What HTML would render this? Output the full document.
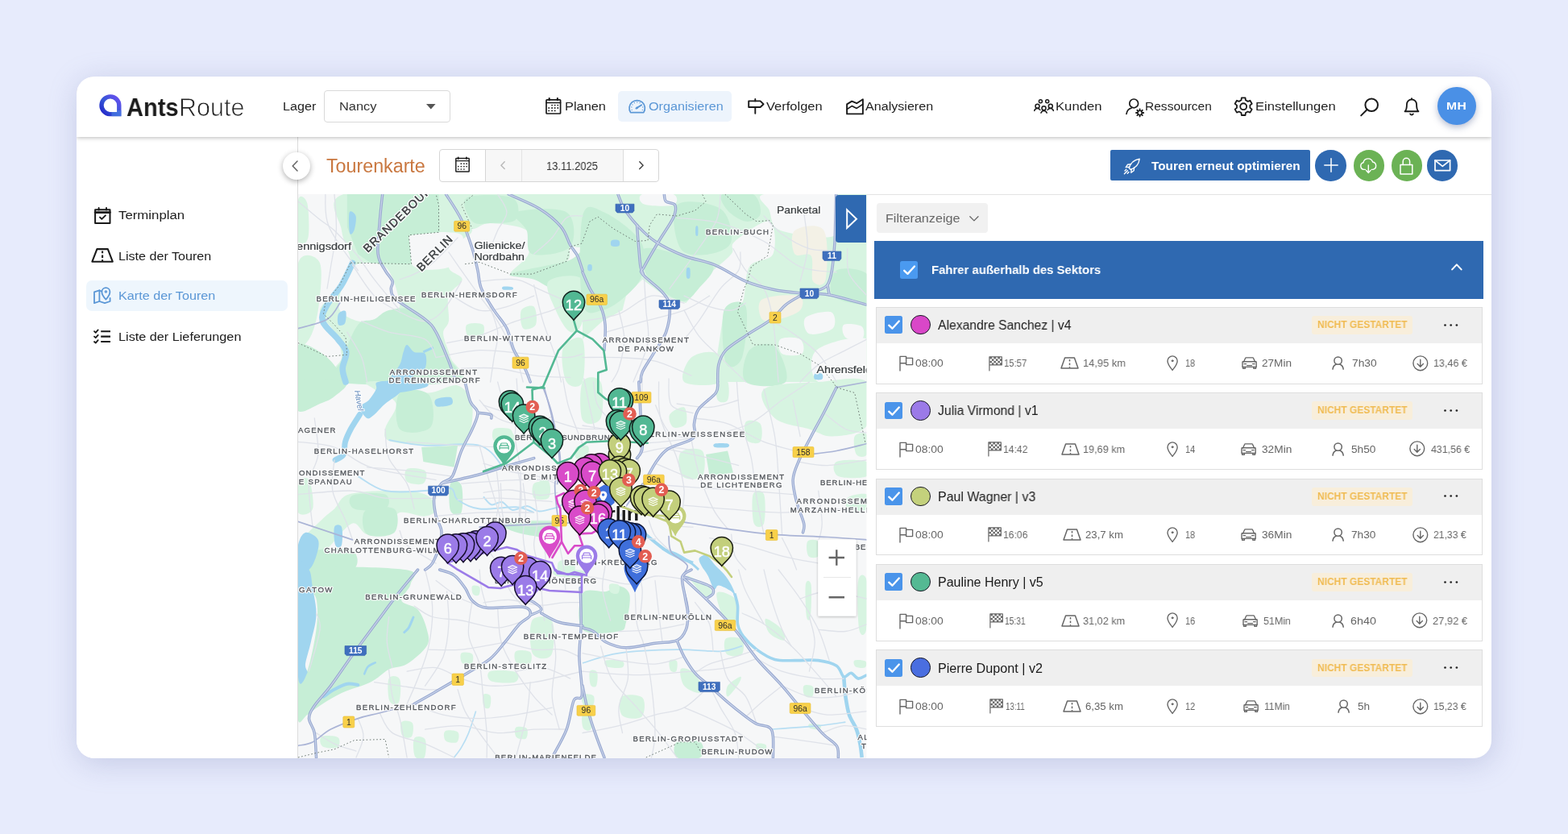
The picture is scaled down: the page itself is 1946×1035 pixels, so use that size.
<!DOCTYPE html>
<html lang="de">
<head>
<meta charset="utf-8">
<title>AntsRoute – Tourenkarte</title>
<style>
*{box-sizing:border-box;margin:0;padding:0}
html,body{width:1946px;height:1035px;overflow:hidden}
body{background:#e7ebfc;font-family:"Liberation Sans",sans-serif;color:#222;position:relative}
.abs{position:absolute}
.card{position:absolute;left:95px;top:95px;width:1756px;height:846px;background:#fff;border-radius:22px;box-shadow:2px 6px 36px rgba(125,135,185,.33);overflow:hidden}
/* everything inside card uses page coords shifted by -95 */
.in{position:absolute;left:-95px;top:-95px;width:1946px;height:1035px}
.hdr{position:absolute;left:95px;top:95px;width:1756px;height:75px;background:#fff;box-shadow:0 1px 5px rgba(0,0,0,.28);z-index:5}
.t{position:absolute;white-space:nowrap;line-height:1;will-change:transform}
svg{position:absolute;overflow:visible}
.side{position:absolute;left:95px;top:170px;width:275px;height:771px;border-right:1px solid #dcdcdc;background:#fff}
.circ{position:absolute;border-radius:50%}
</style>
</head>
<body>
<div class="card"><div class="in">

<!-- HEADER -->
<div class="hdr"></div>
<div style="position:absolute;left:0;top:0;width:1946px;height:1035px;z-index:6" id="hdrc">
<svg style="left:122px;top:116.6px" width="28.6" height="27.4" viewBox="0 0 28.6 27.4" fill="none"><defs><linearGradient id="lg1" x1="0" y1="1" x2="1" y2="0"><stop offset="0" stop-color="#2424c8"/><stop offset=".45" stop-color="#3457d6"/><stop offset="1" stop-color="#6b4ff0"/></linearGradient></defs><path d="M25.8 24.6 L14 24.6 A10.9 10.9 0 1 1 25.8 13.7 Z" stroke="url(#lg1)" stroke-width="5.4" stroke-linejoin="miter"/><path d="M16.5 24.6 L25.8 24.6 L25.8 20" stroke="#4f86e6" stroke-width="5.4" stroke-linejoin="miter" opacity=".55"/></svg><span class="t" id="t0" style="left:157.4px;top:117.9px;font-size:30.5px;font-weight:700;color:#1b1b1b;letter-spacing:0.00px;transform:scaleX(0.9529);transform-origin:0 50%;">Ants</span><span class="t" id="t1" style="left:222.2px;top:117.9px;font-size:30.5px;font-weight:400;color:#222;letter-spacing:0.00px;transform:scaleX(0.9963);transform-origin:0 50%;-webkit-text-stroke:.75px #fff;">Route</span><span class="t" id="t2" style="left:350.5px;top:124.2px;font-size:15.5px;font-weight:400;color:#1f1f1f;letter-spacing:0.00px;transform:scaleX(1.0425);transform-origin:0 50%;">Lager</span><div class="abs" style="left:402.4px;top:111.8px;width:157px;height:40px;border:1px solid #d9d9d9;border-radius:4px;background:#fff"></div><span class="t" id="t3" style="left:420.8px;top:124.2px;font-size:15.5px;font-weight:400;color:#333;letter-spacing:0.00px;transform:scaleX(1.0591);transform-origin:0 50%;">Nancy</span><svg style="left:528.7px;top:129.4px" width="11.6" height="6.4" viewBox="0 0 11.6 6.4"><path d="M0 0H11.6L5.8 6.4Z" fill="#555"/></svg><svg style="left:676.6px;top:121.2px" width="19.6" height="21.0" viewBox="0 0 19.6 21" fill="none" stroke="#1a1a1a" stroke-width="1.7" stroke-linecap="round" stroke-linejoin="round" ><rect x="1" y="2.8" width="17.6" height="17.2" rx=".8"/><path d="M1 6.4H18.6" stroke-width="1.5"/><path d="M4.7 1.2V3.2M14.9 1.2V3.2" stroke-width="2.2"/><g stroke="none" fill="#1a1a1a"><circle cx="8.1" cy="9.6" r=".95"/><circle cx="11.7" cy="9.6" r=".95"/><circle cx="15.3" cy="9.6" r=".95"/><circle cx="4.2" cy="13.0" r=".95"/><circle cx="8.1" cy="13.0" r=".95"/><circle cx="11.7" cy="13.0" r=".95"/><circle cx="15.3" cy="13.0" r=".95"/><circle cx="4.2" cy="16.4" r=".95"/><circle cx="8.1" cy="16.4" r=".95"/><circle cx="11.7" cy="16.4" r=".95"/></g></svg><span class="t" id="t4" style="left:700.8px;top:124.2px;font-size:15.5px;font-weight:400;color:#1f1f1f;letter-spacing:0.00px;transform:scaleX(1.0563);transform-origin:0 50%;">Planen</span><div class="abs" style="left:766.9px;top:113.2px;width:141px;height:37.4px;background:#edf4fc;border-radius:5px"></div><svg style="left:780.3px;top:123.3px" width="21.4" height="17.6" viewBox="0 0 21.4 17.6" fill="none" stroke="#5b97d6" stroke-width="1.7" stroke-linecap="round" stroke-linejoin="round" ><path d="M2.6 16.6 A9.7 9.7 0 1 1 18.8 16.6 Z"/><path d="M9.4 11.6 L16.2 7.2" stroke-width="1.9"/><circle cx="10.6" cy="10.9" r="1.3" fill="#5b97d6" stroke="none"/><path d="M4.1 13.3h.1M3.8 9.9h.1M4.9 7.0h.1M7.4 4.7h.1M10.7 3.9h.1M14.0 4.7h.1M17.6 9.9h.1M17.3 13.3h.1" stroke-width="1.25"/></svg><span class="t" id="t5" style="left:805.0px;top:124.2px;font-size:15.5px;font-weight:400;color:#5b97d6;letter-spacing:0.00px;transform:scaleX(1.0438);transform-origin:0 50%;">Organisieren</span><svg style="left:928.0px;top:121.8px" width="20.8" height="19.8" viewBox="0 0 20.8 19.8" fill="none" stroke="#1a1a1a" stroke-width="1.9" stroke-linecap="round" stroke-linejoin="round" ><path d="M1.2 3.4H15.6L19.6 7.2L15.6 11H1.2Z"/><path d="M9.3 .9V3.4M9.3 11V18.8"/></svg><span class="t" id="t6" style="left:951.2px;top:124.2px;font-size:15.5px;font-weight:400;color:#1f1f1f;letter-spacing:0.00px;transform:scaleX(1.0636);transform-origin:0 50%;">Verfolgen</span><svg style="left:1049.6px;top:121.8px" width="22.0" height="20.6" viewBox="0 0 22 20.6" fill="none" stroke="#1a1a1a" stroke-width="1.9" stroke-linecap="round" stroke-linejoin="round" ><path d="M1.1 7.4 L7.2 3.6 L13.2 6.2 L20.9 1.2 V19.4 H1.1 Z"/><path d="M1.1 13.6 L7.2 9.6 L13.2 12.4 L20.9 7.4" stroke-width="1.7"/></svg><span class="t" id="t7" style="left:1074.4px;top:124.2px;font-size:15.5px;font-weight:400;color:#1f1f1f;letter-spacing:0.00px;transform:scaleX(1.0383);transform-origin:0 50%;">Analysieren</span><svg style="left:1282.5px;top:122.2px" width="25.0" height="19.0" viewBox="0 0 25 19" fill="none" stroke="#1a1a1a" stroke-width="1.5" stroke-linecap="round" stroke-linejoin="round" ><circle cx="8.4" cy="3.8" r="2"/><circle cx="16.7" cy="3.8" r="2"/><circle cx="4.5" cy="9.7" r="2.5"/><circle cx="12.5" cy="12.3" r="2.5"/><circle cx="20.8" cy="9.7" r="2.5"/><path d="M.7 15.4C1.5 13.4 2.8 12.6 4.4 12.6S7.2 13.2 7.9 14.5M8.9 18.1C9.7 16.2 10.9 15.4 12.5 15.4S15.4 16.2 16.2 18.1M17.1 14.5C17.8 13.2 19 12.6 20.6 12.6S23.6 13.4 24.4 15.4"/></svg><span class="t" id="t8" style="left:1309.6px;top:124.2px;font-size:15.5px;font-weight:400;color:#1f1f1f;letter-spacing:0.00px;transform:scaleX(1.0755);transform-origin:0 50%;">Kunden</span><svg style="left:1396.7px;top:122.2px" width="24.0" height="24.2" viewBox="0 0 24 24.2" fill="none" stroke="#1a1a1a" stroke-width="1.7" stroke-linecap="round" stroke-linejoin="round" ><circle cx="10.2" cy="6.4" r="5.4"/><path d="M1 19.4C1.6 15.4 4.4 12.8 7.4 12"/><g stroke-width="1.4"><circle cx="17.6" cy="18" r="2.6"/><path d="M17.6 13.4v1.6M17.6 21v1.6M13 18h1.6M20.6 18h1.6M14.4 14.8l1.1 1.1M19.7 20.1l1.1 1.1M14.4 21.2l1.1-1.1M19.7 15.9l1.1-1.1" stroke-width="1.9"/></g></svg><span class="t" id="t9" style="left:1420.8px;top:124.2px;font-size:15.5px;font-weight:400;color:#1f1f1f;letter-spacing:0.00px;transform:scaleX(1.0024);transform-origin:0 50%;">Ressourcen</span><svg style="left:1531.4px;top:119.7px" width="24.4" height="24.4" viewBox="0 0 24 24" fill="none" stroke="#1a1a1a" stroke-width="1.8" stroke-linecap="round" stroke-linejoin="round" ><path d="M14.67 4.25L14.27 1.34L9.73 1.34L9.33 4.25L6.62 5.81L3.90 4.71L1.63 8.63L3.95 10.44L3.95 13.56L1.63 15.37L3.90 19.29L6.62 18.19L9.33 19.75L9.73 22.66L14.27 22.66L14.67 19.75L17.38 18.19L20.10 19.29L22.37 15.37L20.05 13.56L20.05 10.44L22.37 8.63L20.10 4.71L17.38 5.81Z"/><circle cx="12" cy="12" r="3.9"/></svg><span class="t" id="t10" style="left:1557.9px;top:124.2px;font-size:15.5px;font-weight:400;color:#1f1f1f;letter-spacing:0.00px;transform:scaleX(1.0710);transform-origin:0 50%;">Einstellungen</span><svg style="left:1688.0px;top:121.2px" width="23.4" height="23.4" viewBox="0 0 23.4 23.4" fill="none" stroke="#1a1a1a" stroke-width="2" stroke-linecap="round" stroke-linejoin="round" ><circle cx="14.2" cy="9.2" r="7.8"/><path d="M8.6 15 L1.2 22.4"/></svg><svg style="left:1741.0px;top:120.4px" width="22.0" height="25.4" viewBox="0 0 24 25" fill="none" stroke="#1a1a1a" stroke-width="2" stroke-linecap="round" stroke-linejoin="round" ><path d="M18.6 9A6.6 6.6 0 0 0 5.4 9c0 7.4-2.6 9.6-2.6 9.6h18.4s-2.6-2.2-2.6-9.6"/><path d="M12 .9V2.4"/><path d="M14 22a2.3 2.3 0 0 1-4 0"/></svg><div class="circ" style="left:1784.2px;top:107.6px;width:47.6px;height:47.6px;background:#4a90e6;box-shadow:0 3px 8px rgba(40,60,120,.35)"></div><span class="t" id="t11" style="left:1795.4px;top:124.8px;font-size:13.5px;font-weight:700;color:#fff;letter-spacing:0.36px;transform:scaleX(1.1600);transform-origin:0 50%;">MH</span>
</div>

<!-- SIDEBAR -->
<div class="side"></div>
<svg style="left:116.8px;top:256.8px" width="20.6" height="21.0" viewBox="0 0 20.6 21" fill="none" stroke="#1a1a1a" stroke-width="2" stroke-linecap="round" stroke-linejoin="round" ><rect x="1.1" y="3.2" width="18.4" height="16.7" /><path d="M1.1 6.6H19.5" stroke-width="2.6"/><path d="M5.6 1V3.4M15 1V3.4"/><path d="M7 12.6l2.3 2.3 4.6-4.6" stroke-width="1.9"/></svg><span class="t" id="t12" style="left:147.3px;top:259.2px;font-size:15.5px;font-weight:400;color:#1c1c1c;letter-spacing:0.00px;transform:scaleX(1.0842);transform-origin:0 50%;">Terminplan</span><svg style="left:113.0px;top:307.8px" width="28.2" height="17.8" viewBox="0 0 28.2 17.8" fill="none" stroke="#1a1a1a" stroke-width="2.1" stroke-linecap="round" stroke-linejoin="round" ><path d="M7.4 1.1H20.8L26.8 16.7H1.4Z"/><path d="M14.1 3.6V6.2M14.1 8.6V12M14.1 14.2V16.4" stroke-linecap="butt"/></svg><span class="t" id="t13" style="left:147.3px;top:309.6px;font-size:15.5px;font-weight:400;color:#1c1c1c;letter-spacing:0.00px;transform:scaleX(1.0387);transform-origin:0 50%;">Liste der Touren</span><div class="abs" style="left:107.3px;top:348.4px;width:249.6px;height:37.6px;background:#eef6fd;border-radius:7px"></div><svg style="left:116.2px;top:355.8px" width="21.8" height="21.2" viewBox="0 0 21.8 21.2" fill="none" stroke="#5b97d6" stroke-width="1.8" stroke-linecap="round" stroke-linejoin="round" ><path d="M9.6 5.4 L7.4 4.4 L1 6.4 V20.2 L7.4 18 L14 20.2 L20.6 18 V14"/><path d="M7.4 4.4V18"/><path d="M15.4 15.6C15.4 15.6 10.4 10.2 10.4 6.2A5 5 0 0 1 20.4 6.2C20.4 10.2 15.4 15.6 15.4 15.6Z"/><circle cx="15.4" cy="6" r="1.1" stroke-width="1.4"/></svg><span class="t" id="t14" style="left:147.3px;top:359.2px;font-size:15.5px;font-weight:400;color:#5b97d6;letter-spacing:0.00px;transform:scaleX(1.0443);transform-origin:0 50%;">Karte der Touren</span><svg style="left:116.2px;top:408.2px" width="22.0" height="19.0" viewBox="0 0 22 19" fill="none" stroke="#1a1a1a" stroke-width="2" stroke-linecap="round" stroke-linejoin="round" ><path d="M9.2 3.2H21M9.2 9.6H21M9.2 16H21" stroke-width="2.1" stroke-linecap="butt"/><path d="M1 3.2l1.7 1.6 3-3.4M1 9.6l1.7 1.6 3-3.4M1 16l1.7 1.6 3-3.4" stroke-width="1.8"/></svg><span class="t" id="t15" style="left:147.3px;top:409.6px;font-size:15.5px;font-weight:400;color:#1c1c1c;letter-spacing:0.00px;transform:scaleX(1.0466);transform-origin:0 50%;">Liste der Lieferungen</span>

<!-- TOOLBAR -->
<div class="abs" style="left:1075px;top:240.6px;width:776px;height:1px;background:#e3e3e3"></div><div class="circ" style="left:351px;top:189px;width:34px;height:34px;background:#fff;box-shadow:0 2px 7px rgba(0,0,0,.32);z-index:7"></div><svg style="z-index:8;left:362.4px;top:199.0px" width="8.0" height="14.0" viewBox="0 0 8 14" fill="none" stroke="#666" stroke-width="1.6" stroke-linecap="round" stroke-linejoin="round" style="z-index:8"><path d="M7 1L1.2 7L7 13"/></svg><span class="t" id="t16" style="left:404.9px;top:194.5px;font-size:23.0px;font-weight:400;color:#c9773f;letter-spacing:0.00px;transform:scaleX(1.0107);transform-origin:0 50%;">Tourenkarte</span><div class="abs" style="left:545.4px;top:185px;width:273px;height:40.6px;border:1px solid #d6d6d6;border-radius:4px;background:#fff;overflow:hidden"><div class="abs" style="left:55.8px;top:0;width:172px;height:40px;background:#f7f7f7;border-left:1px solid #d6d6d6;border-right:1px solid #dcdcdc"></div><div class="abs" style="left:101px;top:0;width:1px;height:40px;background:#e4e4e4"></div></div><svg style="left:565.0px;top:195.0px" width="18.0" height="19.0" viewBox="0 0 18 19" fill="none" stroke="#222" stroke-width="1.5" stroke-linecap="round" stroke-linejoin="round" ><rect x=".8" y="1.4" width="16.4" height="16.6" rx=".6"/><path d="M.8 4.7H17.2" stroke-width="1.3"/><path d="M3.7 .5V2M13.9 .5V2" stroke-width="1.9"/><g stroke="none" fill="#222"><circle cx="7.3" cy="8.2" r=".85"/><circle cx="10.9" cy="8.2" r=".85"/><circle cx="14.1" cy="8.2" r=".85"/><circle cx="3.8" cy="11.6" r=".85"/><circle cx="7.3" cy="11.6" r=".85"/><circle cx="10.9" cy="11.6" r=".85"/><circle cx="14.1" cy="11.6" r=".85"/><circle cx="3.8" cy="15.0" r=".85"/><circle cx="7.3" cy="15.0" r=".85"/><circle cx="10.9" cy="15.0" r=".85"/></g></svg><svg style="left:620.6px;top:200.4px" width="6.0" height="10.4" viewBox="0 0 6 10.4" fill="none" stroke="#b8b8b8" stroke-width="1.4" stroke-linecap="round" stroke-linejoin="round" ><path d="M5.2 .8L.9 5.2L5.2 9.6"/></svg><svg style="left:793.0px;top:200.4px" width="6.0" height="10.4" viewBox="0 0 6 10.4" fill="none" stroke="#444" stroke-width="1.5" stroke-linecap="round" stroke-linejoin="round" ><path d="M.8 .8L5.1 5.2L.8 9.6"/></svg><span class="t" id="t17" style="left:678.0px;top:198.6px;font-size:14.0px;font-weight:400;color:#333;letter-spacing:0.00px;transform:scaleX(0.9261);transform-origin:0 50%;">13.11.2025</span><div class="abs" style="left:1378.4px;top:186.4px;width:248px;height:38px;background:#2f69b1;border-radius:2px"></div><svg style="left:1394.0px;top:196.0px" width="21.4" height="21.0" viewBox="0 0 21.4 21" fill="none" stroke="#fff" stroke-width="1.4" stroke-linecap="round" stroke-linejoin="round" ><path d="M7.2 12.6C8.6 7.4 13 2.4 20.2 1.2C19.4 8.4 14.4 12.6 9.2 14.4Z"/><path d="M7.6 11.2L3.2 11.6L5.6 8.2L9.6 7.8M10.2 13.8L9.8 18.2L13.2 15.8L13.6 11.8"/><path d="M5.4 15.8L1.4 19.8M7 17.4L5.2 19.2M3.8 14.2L2 16"/></svg><span class="t" id="t18" style="left:1428.7px;top:197.7px;font-size:15.0px;font-weight:700;color:#fff;letter-spacing:0.00px;transform:scaleX(1.0221);transform-origin:0 50%;">Touren erneut optimieren</span><div class="circ" style="left:1632.4px;top:186.2px;width:38.4px;height:38.4px;background:#2f69b1"></div><div class="circ" style="left:1679.5px;top:186.2px;width:38.4px;height:38.4px;background:#6bb255"></div><div class="circ" style="left:1726.6px;top:186.2px;width:38.4px;height:38.4px;background:#6bb255"></div><div class="circ" style="left:1770.7px;top:186.2px;width:38.4px;height:38.4px;background:#2f69b1"></div><svg style="left:1642.6px;top:196.4px" width="18.0" height="18.0" viewBox="0 0 18 18" fill="none" stroke="#fff" stroke-width="1.5" stroke-linecap="round" stroke-linejoin="round" ><path d="M9 .8V17.2M.8 9H17.2"/></svg><svg style="left:1687.4px;top:196.0px" width="22.6" height="19.4" viewBox="0 0 22.6 19.4" fill="none" stroke="#fff" stroke-width="1.4" stroke-linecap="round" stroke-linejoin="round" ><path d="M7.4 14.4H5.6A4.4 4.4 0 0 1 5 5.8A6 6 0 0 1 16.6 5A4.8 4.8 0 0 1 17 14.4H15.2"/><path d="M11.3 9V18M8.6 15.6L11.3 18.4L14 15.6"/></svg><svg style="left:1737.4px;top:194.6px" width="16.8" height="22.0" viewBox="0 0 16.8 22" fill="none" stroke="#fff" stroke-width="1.5" stroke-linecap="round" stroke-linejoin="round" ><rect x="1" y="9.4" width="14.8" height="11.6"/><path d="M4.2 9.4V5.4A4.2 4.2 0 0 1 12.6 5.4V9.4"/></svg><svg style="left:1779.6px;top:198.4px" width="20.6" height="14.6" viewBox="0 0 20.6 14.6" fill="none" stroke="#fff" stroke-width="1.7" stroke-linecap="round" stroke-linejoin="round" ><rect x="1" y="1" width="18.6" height="12.6"/><path d="M1 1L10.3 8.4L19.6 1"/></svg>

<!-- MAP -->
<svg style="left:370px;top:241px;will-change:transform" width="705.4" height="700" viewBox="370 241 705.4 700" font-family="Liberation Sans, sans-serif"><defs><filter id="zsh" x="-20%" y="-10%" width="140%" height="125%"><feDropShadow dx="0" dy="1" stdDeviation="1.6" flood-color="#000" flood-opacity=".28"/></filter><clipPath id="mclip"><rect x="370" y="241" width="705.4" height="700"/></clipPath></defs><g clip-path="url(#mclip)"><rect x="370" y="241" width="706" height="700" fill="#f6f7f8"/><path d="M426.3 241.0C451.0 233.5 546.0 233.9 572.6 241.0C599.3 248.1 586.1 274.0 586.1 283.8C586.1 293.5 577.5 291.7 572.6 299.5C567.7 307.4 556.7 323.2 556.9 331.0C557.0 338.9 573.7 340.8 573.7 346.8C573.7 352.8 559.7 358.4 556.9 367.1C554.0 375.7 558.0 390.7 556.9 398.6C555.7 406.5 549.7 406.8 550.1 414.3C550.5 421.8 556.5 433.7 559.1 443.6C561.7 453.6 589.9 468.9 565.9 474.0C541.8 479.1 438.7 479.1 415.0 474.0C391.4 468.9 424.0 453.9 424.0 443.6C424.0 433.3 419.5 421.8 415.0 412.1C410.5 402.3 395.9 394.1 397.0 385.1C398.1 376.1 415.4 367.8 421.8 358.1C428.2 348.3 434.9 338.6 435.3 326.5C435.7 314.5 425.5 300.3 424.0 286.0C422.5 271.8 401.5 248.5 426.3 241.0Z" fill="#d7f4e1"/><path d="M507.3 293.9C516.3 287.0 557.2 287.0 568.1 289.4C579.0 291.8 574.1 301.6 572.6 308.5C571.1 315.5 568.9 327.3 559.1 331.0C549.3 334.8 522.7 337.2 514.1 331.0C505.4 324.9 498.3 300.8 507.3 293.9Z" fill="#f6f7f8"/><path d="M437.5 329.9C446.5 325.4 468.3 323.4 478.1 331.0C487.8 338.7 494.6 367.1 496.1 376.1C497.6 385.1 492.3 381.7 487.1 385.1C481.8 388.5 471.7 394.1 464.6 396.3C457.4 398.6 451.4 400.5 444.3 398.6C437.2 396.7 425.2 391.8 421.8 385.1C418.4 378.3 421.4 367.3 424.0 358.1C426.7 348.9 428.5 334.4 437.5 329.9Z" fill="#f6f7f8"/><polygon points="430.8,241.0 544.5,241.0 545.6,288.3 507.3,291.7 510.7,327.7 460.0,326.5 444.3,315.3 430.8,281.5" fill="#c6eed6"/><path d="M482.6 385.1C490.8 383.2 504.3 380.6 514.1 385.1C523.8 389.6 534.0 402.3 541.1 412.1C548.2 421.8 553.1 433.3 556.9 443.6C560.6 453.9 586.1 468.9 563.6 474.0C541.1 479.1 444.7 479.1 421.8 474.0C398.9 468.9 422.5 455.4 426.3 443.6C430.0 431.8 437.9 411.0 444.3 403.1C450.7 395.2 458.2 399.3 464.6 396.3C470.9 393.3 474.3 387.0 482.6 385.1Z" fill="#c6eed6"/><path d="M572.6 241.0C596.2 237.2 697.9 230.9 723.0 241.0C748.1 251.1 725.5 290.9 723.0 301.8C720.4 312.7 711.0 302.5 707.7 306.3C704.4 310.0 711.1 318.7 703.2 324.3C695.3 329.9 672.0 337.4 660.4 340.1C648.8 342.7 634.1 344.2 633.4 340.1C632.6 335.9 652.5 324.3 655.9 315.3C659.3 306.3 661.5 292.4 653.7 286.0C645.8 279.6 619.9 277.4 608.6 277.0C597.4 276.6 590.6 286.0 586.1 283.8C581.6 281.5 583.9 270.6 581.6 263.5C579.4 256.4 549.0 244.8 572.6 241.0Z" fill="#d7f4e1"/><path d="M579.4 245.5C587.6 240.6 625.5 241.0 635.6 245.5C645.8 250.0 644.7 267.3 640.1 272.5C635.6 277.8 617.6 276.6 608.6 277.0C599.6 277.4 591.0 280.0 586.1 274.8C581.2 269.5 571.1 250.4 579.4 245.5Z" fill="#c6eed6"/><path d="M640.1 263.5C648.4 259.8 691.9 256.4 703.2 263.5C714.4 270.6 714.8 297.7 707.7 306.3C700.6 314.9 669.4 318.7 660.4 315.3C651.4 311.9 657.0 294.7 653.7 286.0C650.3 277.4 631.9 267.3 640.1 263.5Z" fill="#c6eed6"/><path d="M633.4 340.1C640.1 336.3 688.3 328.4 703.2 324.3C718.1 320.2 719.7 308.2 723.0 315.3C726.3 322.4 729.3 359.9 723.0 367.1C716.7 374.2 695.2 361.4 685.2 358.1C675.1 354.7 671.3 349.8 662.7 346.8C654.0 343.8 626.6 343.8 633.4 340.1Z" fill="#c6eed6"/><path d="M370.0 326.5C374.5 310.8 392.9 316.8 397.0 326.5C401.1 336.3 397.0 369.3 394.8 385.1C392.5 400.8 387.6 415.1 383.5 421.1C379.4 427.1 372.3 436.9 370.0 421.1C367.7 405.3 365.5 342.3 370.0 326.5Z" fill="#d7f4e1"/><path d="M370.0 247.8C371.9 239.9 379.2 244.4 381.3 252.3C383.3 260.1 384.3 287.2 382.4 295.0C380.5 302.9 372.1 307.4 370.0 299.5C367.9 291.7 368.1 255.6 370.0 247.8Z" fill="#d7f4e1"/><path d="M370.0 427.9C376.0 422.8 397.4 435.9 406.0 443.6C414.6 451.3 427.8 468.9 421.8 474.0C415.8 479.1 378.6 481.7 370.0 474.0C361.4 466.3 364.0 432.9 370.0 427.9Z" fill="#c6eed6"/><path d="M680.7 349.1C686.2 342.7 715.9 338.6 723.0 346.8C730.0 355.1 725.5 387.7 723.0 398.6C720.4 409.5 713.2 414.3 707.7 412.1C702.1 409.8 694.2 395.6 689.7 385.1C685.2 374.6 675.1 355.4 680.7 349.1Z" fill="#d7f4e1"/><path d="M646.9 385.1C649.2 380.6 659.7 377.6 662.7 380.6C665.7 383.6 667.2 398.6 664.9 403.1C662.7 407.6 652.2 410.6 649.2 407.6C646.2 404.6 644.7 389.6 646.9 385.1Z" fill="#d7f4e1"/><path d="M579.4 403.1C582.4 400.5 596.6 400.1 599.6 403.1C602.6 406.1 600.4 418.5 597.4 421.1C594.4 423.7 584.6 421.8 581.6 418.8C578.6 415.8 576.4 405.7 579.4 403.1Z" fill="#d7f4e1"/><path d="M698.7 432.4C702.0 423.5 718.9 414.2 723.0 421.1C727.0 428.0 726.3 465.2 723.0 474.0C719.7 482.8 707.2 480.9 703.2 474.0C699.1 467.1 695.4 441.2 698.7 432.4Z" fill="#d7f4e1"/><polygon points="723.0,241.0 1076.0,241.0 1076.0,474.0 880.6,474.0 889.6,443.6 898.6,385.1 880.6,367.1 867.1,358.1 851.3,376.1 824.3,367.1 797.3,346.8 777.0,367.1 772.5,385.1 747.8,398.6 723.0,421.1" fill="#d7f4e1"/><path d="M797.3 241.0C803.3 238.9 829.2 238.7 835.6 241.0C841.9 243.3 841.6 252.4 835.6 254.5C829.6 256.6 805.9 255.6 799.5 253.4C793.2 251.1 791.3 243.1 797.3 241.0Z" fill="#f6f7f8"/><path d="M912.1 299.5C920.0 292.8 947.0 272.1 954.9 274.8C962.8 277.4 963.5 305.9 959.4 315.3C955.3 324.7 936.5 320.9 930.1 331.0C923.7 341.2 926.4 367.1 921.1 376.1C915.9 385.1 905.4 386.6 898.6 385.1C891.8 383.6 885.8 371.6 880.6 367.1C875.3 362.6 867.1 362.6 867.1 358.1C867.1 353.6 873.8 347.2 880.6 340.1C887.3 332.9 902.3 322.0 907.6 315.3C912.9 308.5 904.2 306.3 912.1 299.5Z" fill="#f6f7f8"/><path d="M948.1 241.0C962.0 237.6 1023.2 233.1 1038.2 241.0C1053.2 248.9 1041.9 279.5 1038.2 288.3C1034.4 297.1 1025.0 293.7 1015.7 293.9C1006.3 294.1 990.9 291.5 981.9 289.4C972.9 287.3 966.1 286.2 961.6 281.5C957.1 276.8 957.1 268.0 954.9 261.3C952.6 254.5 934.2 244.4 948.1 241.0Z" fill="#f6f7f8"/><path d="M723.0 268.0C727.5 249.3 738.0 258.3 750.0 263.5C762.0 268.8 787.2 286.8 795.0 299.5C802.9 312.3 800.3 328.8 797.3 340.1C794.3 351.3 785.3 359.6 777.0 367.1C768.8 374.6 756.8 383.6 747.8 385.1C738.8 386.6 727.1 395.6 723.0 376.1C718.9 356.6 718.5 286.8 723.0 268.0Z" fill="#c6eed6"/><path d="M799.5 308.5C807.4 304.8 834.8 313.8 849.1 317.5C863.3 321.3 882.1 324.3 885.1 331.0C888.1 337.8 873.1 350.9 867.1 358.1C861.1 365.2 856.2 373.1 849.1 373.8C841.9 374.6 832.2 368.2 824.3 362.6C816.4 356.9 805.9 349.1 801.8 340.1C797.7 331.0 791.7 312.3 799.5 308.5Z" fill="#c6eed6"/><path d="M896.3 241.0C901.6 237.6 926.7 236.9 934.6 241.0C942.5 245.1 945.1 260.1 943.6 265.8C942.1 271.4 932.4 275.5 925.6 274.8C918.9 274.0 908.0 266.9 903.1 261.3C898.2 255.6 891.1 244.4 896.3 241.0Z" fill="#c6eed6"/><path d="M840.1 254.5C848.3 246.3 882.8 251.5 894.1 259.0C905.4 266.5 909.9 290.2 907.6 299.5C905.4 308.9 891.1 313.8 880.6 315.3C870.1 316.8 851.3 318.7 844.6 308.5C837.8 298.4 831.8 262.8 840.1 254.5Z" fill="#c6eed6"/><path d="M898.6 385.1C902.7 373.4 921.9 370.8 925.6 380.6C929.4 390.3 925.2 432.0 921.1 443.6C917.0 455.2 904.6 460.1 900.8 450.4C897.1 440.6 894.5 396.7 898.6 385.1Z" fill="#c6eed6"/><path d="M986.4 286.0C992.4 281.1 1016.0 275.9 1022.4 286.0C1028.8 296.2 1026.9 336.3 1024.7 346.8C1022.4 357.3 1011.9 353.9 1008.9 349.1C1005.9 344.2 1010.4 323.2 1006.7 317.5C1002.9 311.9 989.8 320.5 986.4 315.3C983.0 310.0 980.4 290.9 986.4 286.0Z" fill="#f3f1e6"/><path d="M945.9 371.6C953.4 366.7 983.0 364.8 990.9 367.1C998.8 369.3 997.3 380.2 993.1 385.1C989.0 390.0 974.0 394.5 966.1 396.3C958.3 398.2 949.2 400.5 945.9 396.3C942.5 392.2 938.4 376.4 945.9 371.6Z" fill="#f3f1e6"/><path d="M999.9 394.1C1004.4 389.6 1025.8 385.1 1031.4 387.3C1037.0 389.6 1038.2 403.1 1033.7 407.6C1029.2 412.1 1010.0 416.6 1004.4 414.3C998.8 412.1 995.4 398.6 999.9 394.1Z" fill="#f6f7f8"/><path d="M1047.2 403.1C1050.6 400.8 1065.9 402.3 1069.7 405.3C1073.4 408.3 1073.1 418.8 1069.7 421.1C1066.3 423.4 1053.2 421.8 1049.4 418.8C1045.7 415.8 1043.8 405.3 1047.2 403.1Z" fill="#f6f7f8"/><path d="M968.4 421.1C972.1 418.1 988.6 418.1 993.1 421.1C997.7 424.1 999.2 436.1 995.4 439.1C991.6 442.1 975.1 442.1 970.6 439.1C966.1 436.1 964.6 424.1 968.4 421.1Z" fill="#f6f7f8"/><path d="M1038.2 335.6C1045.2 331.0 1069.7 333.3 1076.0 340.1C1082.3 346.8 1083.0 371.6 1076.0 376.1C1068.9 380.6 1040.0 373.8 1033.7 367.1C1027.4 360.3 1031.1 340.1 1038.2 335.6Z" fill="#c6eed6"/><path d="M930.1 434.6C936.1 427.3 954.1 423.5 961.6 430.1C969.1 436.7 981.1 466.7 975.1 474.0C969.1 481.3 933.1 480.6 925.6 474.0C918.1 467.4 924.1 441.9 930.1 434.6Z" fill="#c6eed6"/><path d="M1013.4 434.6C1023.5 425.8 1065.6 414.5 1076.0 421.1C1086.4 427.7 1086.0 465.2 1076.0 474.0C1065.9 482.8 1026.1 480.6 1015.7 474.0C1005.2 467.4 1003.4 443.4 1013.4 434.6Z" fill="#f6f7f8"/><path d="M858.1 443.6C864.8 437.8 883.6 434.0 889.6 439.1C895.6 444.2 900.8 468.2 894.1 474.0C887.3 479.8 855.1 479.1 849.1 474.0C843.1 468.9 851.3 449.4 858.1 443.6Z" fill="#d7f4e1"/><path d="M370.0 474.0C379.8 468.0 421.0 471.0 428.5 474.0C436.0 477.0 420.3 487.5 415.0 492.0C409.8 496.5 404.5 498.0 397.0 501.0C389.5 504.0 374.5 514.5 370.0 510.0C365.5 505.5 360.2 480.0 370.0 474.0Z" fill="#c6eed6"/><path d="M455.5 474.0C460.8 472.5 489.3 473.2 496.1 474.0C502.8 474.8 490.1 476.3 496.1 478.5C502.1 480.8 520.1 487.5 532.1 487.5C544.1 487.5 559.1 475.9 568.1 478.5C577.1 481.1 584.2 491.6 586.1 503.3C588.0 514.9 584.6 540.0 579.4 548.3C574.1 556.5 570.0 552.8 554.6 552.8C539.2 552.8 499.8 551.7 487.1 548.3C474.3 544.9 477.3 540.4 478.1 532.5C478.8 524.7 493.8 509.3 491.6 501.0C489.3 492.8 470.6 487.5 464.6 483.0C458.5 478.5 450.3 475.5 455.5 474.0Z" fill="#d7f4e1"/><path d="M496.1 487.5C502.1 480.4 525.7 482.6 532.1 489.8C538.5 496.9 540.3 523.2 534.3 530.3C528.3 537.4 502.4 539.7 496.1 532.5C489.7 525.4 490.1 494.6 496.1 487.5Z" fill="#c6eed6"/><polygon points="523.1,555.0 568.1,552.8 563.6,579.8 525.3,573.1" fill="#c6eed6"/><path d="M433.0 613.6C445.0 609.8 471.3 609.1 487.1 609.1C502.8 609.1 518.6 609.8 527.6 613.6C536.6 617.3 541.1 627.1 541.1 631.6C541.1 636.1 535.1 639.8 527.6 640.6C520.1 641.3 503.6 633.8 496.1 636.1C488.6 638.3 489.3 649.6 482.6 654.1C475.8 658.6 463.1 663.9 455.5 663.1C448.0 662.4 445.0 647.3 437.5 649.6C430.0 651.8 419.5 667.0 410.5 676.6C401.5 686.2 390.3 701.9 383.5 707.0C376.8 712.1 372.3 712.1 370.0 707.0C367.7 701.9 365.1 686.9 370.0 676.6C374.9 666.3 391.8 652.6 399.3 645.1C406.8 637.6 409.4 636.8 415.0 631.6C420.7 626.3 421.0 617.3 433.0 613.6Z" fill="#d7f4e1"/><path d="M437.5 614.7C443.9 611.7 471.3 610.8 478.1 613.6C484.8 616.4 484.4 628.6 478.1 631.6C471.7 634.6 446.5 634.4 439.8 631.6C433.0 628.8 431.2 617.7 437.5 614.7Z" fill="#c6eed6"/><path d="M453.3 633.8C458.9 628.6 483.3 627.1 489.3 631.6C495.3 636.1 494.9 655.6 489.3 660.9C483.7 666.1 461.6 667.6 455.5 663.1C449.5 658.6 447.7 639.1 453.3 633.8Z" fill="#c6eed6"/><path d="M559.1 600.1C561.4 594.8 570.4 596.3 572.6 602.3C574.9 608.3 574.9 630.8 572.6 636.1C570.4 641.3 561.4 639.8 559.1 633.8C556.9 627.8 556.9 605.3 559.1 600.1Z" fill="#c6eed6"/><path d="M392.5 683.4C401.5 679.4 430.0 679.4 437.5 683.4C445.0 687.3 446.5 703.1 437.5 707.0C428.5 710.9 391.0 710.9 383.5 707.0C376.0 703.1 383.5 687.3 392.5 683.4Z" fill="#c6eed6"/><path d="M613.1 534.8C616.7 532.9 631.9 534.6 635.6 537.0C639.4 539.5 639.2 547.5 635.6 549.4C632.1 551.3 618.0 550.7 614.3 548.3C610.5 545.9 609.6 536.7 613.1 534.8Z" fill="#d7f4e1"/><path d="M662.7 600.1C665.7 597.1 677.7 597.1 680.7 600.1C683.7 603.1 683.7 615.1 680.7 618.1C677.7 621.1 665.7 621.1 662.7 618.1C659.7 615.1 659.7 603.1 662.7 600.1Z" fill="#d7f4e1"/><path d="M635.6 647.3C644.7 645.8 680.5 645.1 689.7 646.2C698.9 647.3 699.8 652.6 690.8 654.1C681.8 655.6 644.8 656.4 635.6 655.2C626.5 654.1 626.6 648.8 635.6 647.3Z" fill="#d7f4e1"/><path d="M370.0 600.1C372.3 593.3 380.5 590.3 383.5 595.6C386.5 600.8 390.3 624.8 388.0 631.6C385.8 638.3 373.0 641.3 370.0 636.1C367.0 630.8 367.7 606.8 370.0 600.1Z" fill="#d7f4e1"/><path d="M505.1 582.1C508.8 579.8 524.2 581.3 527.6 584.3C531.0 587.3 529.1 597.8 525.3 600.1C521.6 602.3 508.5 600.8 505.1 597.8C501.7 594.8 501.3 584.3 505.1 582.1Z" fill="#d7f4e1"/><path d="M844.6 561.8C848.7 556.5 867.1 554.7 871.6 559.5C876.1 564.4 875.7 585.8 871.6 591.1C867.5 596.3 851.3 595.9 846.8 591.1C842.3 586.2 840.4 567.1 844.6 561.8Z" fill="#d7f4e1"/><polygon points="876.1,564.0 903.1,559.5 909.9,586.6 880.6,591.1" fill="#c6eed6"/><path d="M925.6 523.5C928.4 520.2 940.6 521.7 943.6 525.8C946.6 529.9 946.4 544.9 943.6 548.3C940.8 551.7 929.7 550.2 926.7 546.0C923.7 541.9 922.8 526.9 925.6 523.5Z" fill="#d7f4e1"/><path d="M948.1 483.0C957.1 475.5 994.3 475.5 1015.7 474.0C1037.0 472.5 1065.9 465.0 1076.0 474.0C1086.0 483.0 1083.0 516.8 1076.0 528.0C1068.9 539.3 1045.6 540.8 1033.7 541.5C1021.7 542.3 1016.4 536.3 1004.4 532.5C992.4 528.8 971.0 527.3 961.6 519.0C952.3 510.8 939.1 490.5 948.1 483.0Z" fill="#d7f4e1"/><path d="M1038.2 573.1C1044.1 570.1 1069.7 570.1 1076.0 573.1C1082.3 576.1 1081.9 588.1 1076.0 591.1C1070.1 594.1 1046.7 594.1 1040.4 591.1C1034.1 588.1 1032.2 576.1 1038.2 573.1Z" fill="#d7f4e1"/><path d="M934.6 613.6C936.7 607.6 945.9 607.6 948.1 613.6C950.4 619.6 950.2 643.6 948.1 649.6C946.1 655.6 938.0 655.6 935.7 649.6C933.5 643.6 932.6 619.6 934.6 613.6Z" fill="#d7f4e1"/><path d="M889.6 474.0C891.7 470.2 900.8 470.2 903.1 474.0C905.4 477.8 905.2 492.8 903.1 496.5C901.0 500.3 893.0 500.3 890.7 496.5C888.5 492.8 887.5 477.8 889.6 474.0Z" fill="#d7f4e1"/><path d="M723.0 474.0C726.8 466.1 741.8 466.5 745.5 474.0C749.3 481.5 749.3 511.1 745.5 519.0C741.8 526.9 726.8 528.8 723.0 521.3C719.2 513.8 719.2 481.9 723.0 474.0Z" fill="#d7f4e1"/><path d="M1002.2 672.1C1004.2 669.1 1013.4 669.1 1015.7 672.1C1017.9 675.1 1017.7 687.1 1015.7 690.1C1013.6 693.1 1005.5 693.1 1003.3 690.1C1001.0 687.1 1000.1 675.1 1002.2 672.1Z" fill="#d7f4e1"/><path d="M831.1 514.5C833.3 510.4 845.7 503.6 849.1 505.5C852.4 507.4 853.6 521.7 851.3 525.8C849.1 529.9 838.9 532.2 835.6 530.3C832.2 528.4 828.8 518.6 831.1 514.5Z" fill="#d7f4e1"/><path d="M1051.7 618.1C1055.4 614.3 1071.9 611.3 1076.0 613.6C1080.0 615.8 1079.7 627.8 1076.0 631.6C1072.3 635.3 1058.0 638.3 1053.9 636.1C1049.9 633.8 1048.0 621.8 1051.7 618.1Z" fill="#d7f4e1"/><path d="M1060.7 541.5C1062.9 537.4 1073.4 535.5 1076.0 539.3C1078.5 543.0 1078.2 559.9 1076.0 564.0C1073.8 568.2 1065.5 567.8 1062.9 564.0C1060.4 560.3 1058.5 545.7 1060.7 541.5Z" fill="#d7f4e1"/><path d="M626.3 649.3C634.5 647.4 674.5 646.8 685.4 647.6C696.4 648.5 691.4 651.2 692.0 654.2C692.5 657.2 693.1 663.8 688.7 665.7C684.3 667.6 674.5 666.8 665.7 665.7C656.9 664.6 642.7 661.9 636.1 659.1C629.6 656.4 618.1 651.2 626.3 649.3Z" fill="#c6eed6"/><path d="M693.6 696.9C696.5 694.2 708.7 694.2 711.7 696.9C714.7 699.6 714.6 710.6 711.7 713.3C708.8 716.1 697.5 716.1 694.4 713.3C691.4 710.6 690.8 699.6 693.6 696.9Z" fill="#d7f4e1"/><path d="M665.7 600.0C667.8 597.5 676.7 597.5 678.8 600.0C681.0 602.5 680.9 612.3 678.8 614.8C676.8 617.2 668.7 617.2 666.5 614.8C664.3 612.3 663.6 602.5 665.7 600.0Z" fill="#d7f4e1"/><path d="M715.0 555.4C717.4 553.0 727.6 551.9 729.8 553.8C732.0 555.7 730.6 564.4 728.1 566.9C725.7 569.4 717.2 570.5 715.0 568.6C712.8 566.6 712.5 557.9 715.0 555.4Z" fill="#d7f4e1"/><path d="M613.1 532.4C616.2 530.5 629.3 530.8 632.9 532.4C636.4 534.1 637.5 540.4 634.5 542.3C631.5 544.2 618.3 545.6 614.8 543.9C611.2 542.3 610.1 534.3 613.1 532.4Z" fill="#d7f4e1"/><path d="M669.0 598.1C670.6 595.4 678.3 594.3 680.5 596.5C682.7 598.7 683.8 608.5 682.1 611.3C680.5 614.0 672.8 615.1 670.6 612.9C668.4 610.7 667.3 600.9 669.0 598.1Z" fill="#d7f4e1"/><path d="M379.0 707.0C397.4 701.0 481.1 704.0 502.8 707.0C524.6 710.0 510.3 718.6 509.6 725.0C508.8 731.4 496.8 740.0 498.3 745.3C499.8 750.5 513.3 750.5 518.6 756.5C523.8 762.5 528.0 773.8 529.8 781.3C531.7 788.8 534.0 794.4 529.8 801.6C525.7 808.7 513.0 819.2 505.1 824.1C497.2 828.9 490.1 827.1 482.6 830.8C475.1 834.6 469.8 841.7 460.0 846.6C450.3 851.5 434.5 855.2 424.0 860.1C413.5 865.0 404.1 871.3 397.0 875.8C389.9 880.3 385.8 884.1 381.3 887.1C376.8 890.1 371.9 901.7 370.0 893.9C368.1 886.0 368.1 850.0 370.0 839.8C371.9 829.7 377.5 842.8 381.3 833.1C385.0 823.3 390.6 796.3 392.5 781.3C394.4 766.3 394.8 755.4 392.5 743.0C390.3 730.6 360.6 713.0 379.0 707.0Z" fill="#c6eed6"/><path d="M482.6 842.1C484.7 837.6 494.0 838.3 496.1 843.2C498.2 848.1 497.3 866.9 495.2 871.3C493.1 875.8 485.6 874.9 483.5 870.0C481.4 865.1 480.5 846.5 482.6 842.1Z" fill="#d7f4e1"/><path d="M660.4 770.0C664.4 763.3 681.2 764.0 685.2 771.2C689.2 778.3 688.3 806.1 684.3 812.8C680.3 819.5 665.3 818.6 661.3 811.5C657.3 804.3 656.4 776.8 660.4 770.0Z" fill="#d7f4e1"/><path d="M640.1 808.3C643.0 806.1 655.3 806.8 658.2 809.4C661.0 812.1 660.1 821.9 657.3 824.1C654.4 826.3 643.9 825.3 641.0 822.7C638.2 820.1 637.3 810.5 640.1 808.3Z" fill="#d7f4e1"/><path d="M552.4 907.4C554.8 905.5 565.6 906.2 568.1 908.5C570.6 910.7 569.7 919.0 567.2 920.9C564.7 922.7 555.7 921.8 553.3 919.5C550.8 917.3 549.9 909.2 552.4 907.4Z" fill="#d7f4e1"/><path d="M498.3 896.1C500.4 893.5 509.7 894.2 511.8 897.2C513.9 900.2 513.0 911.5 510.9 914.1C508.8 916.7 501.3 915.8 499.2 912.8C497.1 909.8 496.2 898.7 498.3 896.1Z" fill="#d7f4e1"/><path d="M514.1 916.4C516.2 912.8 525.5 913.6 527.6 917.5C529.7 921.4 528.8 936.5 526.7 940.0C524.6 943.5 517.1 942.6 515.0 938.7C512.9 934.7 512.0 919.9 514.1 916.4Z" fill="#d7f4e1"/><path d="M640.1 902.9C642.2 901.0 651.6 901.7 653.7 904.0C655.8 906.2 654.9 914.5 652.8 916.4C650.7 918.2 643.2 917.3 641.0 915.0C638.9 912.8 638.0 904.7 640.1 902.9Z" fill="#d7f4e1"/><path d="M399.3 914.1C402.5 912.3 416.3 913.0 419.5 915.2C422.8 917.5 421.9 925.8 418.6 927.6C415.4 929.5 403.4 928.5 400.2 926.3C396.9 924.0 396.0 916.0 399.3 914.1Z" fill="#d7f4e1"/><path d="M599.6 862.3C601.0 860.1 607.3 860.8 608.6 863.5C610.0 866.1 609.1 875.9 607.7 878.1C606.4 880.3 601.9 879.4 600.5 876.7C599.2 874.1 598.3 864.5 599.6 862.3Z" fill="#d7f4e1"/><path d="M572.6 810.6C574.7 808.7 584.0 809.4 586.1 811.7C588.2 813.9 587.3 822.2 585.2 824.1C583.1 825.9 575.6 825.0 573.5 822.7C571.4 820.5 570.5 812.4 572.6 810.6Z" fill="#d7f4e1"/><path d="M689.7 707.0C695.1 705.9 717.6 706.6 723.0 708.1C728.4 709.6 727.5 714.9 722.1 716.0C716.7 717.1 696.0 716.2 690.6 714.7C685.2 713.2 684.3 708.1 689.7 707.0Z" fill="#d7f4e1"/><path d="M586.1 727.3C587.5 725.8 593.8 726.5 595.1 728.4C596.5 730.3 595.6 737.1 594.2 738.5C592.9 740.0 588.4 739.0 587.0 737.2C585.7 735.3 584.8 728.7 586.1 727.3Z" fill="#d7f4e1"/><path d="M608.6 833.1C613.7 831.2 635.0 831.9 640.1 834.2C645.3 836.4 644.4 844.7 639.2 846.6C634.1 848.4 614.6 847.5 609.5 845.2C604.4 843.0 603.5 834.9 608.6 833.1Z" fill="#d7f4e1"/><path d="M723.0 736.3C727.9 728.4 744.8 735.5 752.3 734.0C759.8 732.5 763.1 726.5 768.0 727.3C772.9 728.0 780.0 731.0 781.5 738.5C783.0 746.0 779.3 764.8 777.0 772.3C774.8 779.8 777.0 782.0 768.0 783.5C759.0 785.0 730.5 789.2 723.0 781.3C715.5 773.4 718.1 744.1 723.0 736.3Z" fill="#c6eed6"/><polygon points="852.4,713.8 880.6,727.3 885.1,737.4 876.1,744.1" fill="#d7f4e1"/><path d="M889.6 736.3C891.5 731.8 905.4 737.4 909.9 740.8C914.4 744.1 916.2 751.3 916.6 756.5C917.0 761.8 915.1 770.4 912.1 772.3C909.1 774.2 902.3 773.8 898.6 767.8C894.8 761.8 887.7 740.8 889.6 736.3Z" fill="#d7f4e1"/><path d="M844.6 830.8C846.1 827.8 853.6 829.7 858.1 833.1C862.6 836.4 870.1 846.6 871.6 851.1C873.1 855.6 870.8 860.1 867.1 860.1C863.3 860.1 852.8 856.0 849.1 851.1C845.3 846.2 843.1 833.8 844.6 830.8Z" fill="#d7f4e1"/><path d="M903.1 851.1C905.7 847.0 916.6 840.2 918.9 839.8C921.1 839.4 919.2 844.7 916.6 848.8C914.0 853.0 905.4 864.2 903.1 864.6C900.8 865.0 900.5 855.2 903.1 851.1Z" fill="#d7f4e1"/><path d="M950.4 767.8C953.0 767.0 966.9 776.8 970.6 781.3C974.4 785.8 975.5 794.0 972.9 794.8C970.3 795.5 958.6 790.3 954.9 785.8C951.1 781.3 947.7 768.5 950.4 767.8Z" fill="#d7f4e1"/><path d="M840.1 920.9C844.9 917.7 864.5 917.7 869.3 920.9C874.2 924.1 874.2 936.8 869.3 940.0C864.5 943.2 844.9 943.2 840.1 940.0C835.2 936.8 835.2 924.1 840.1 920.9Z" fill="#c6eed6"/><path d="M771.4 864.6C775.6 860.9 793.1 861.6 797.3 865.7C801.5 869.8 800.6 885.6 796.4 889.4C792.2 893.1 776.5 892.1 772.3 888.0C768.1 883.9 767.2 868.3 771.4 864.6Z" fill="#d7f4e1"/><path d="M900.8 792.5C904.1 789.6 917.9 790.3 921.1 793.7C924.3 797.0 923.4 809.8 920.2 812.8C917.0 815.8 905.0 814.8 901.7 811.5C898.5 808.1 897.6 795.5 900.8 792.5Z" fill="#d7f4e1"/><path d="M999.9 725.0C1000.9 718.7 1005.7 719.4 1006.7 726.1C1007.6 732.9 1006.7 759.2 1005.8 765.5C1004.8 771.9 1001.8 770.9 1000.8 764.2C999.8 757.4 998.9 731.4 999.9 725.0Z" fill="#d7f4e1"/><path d="M997.7 851.1C999.4 849.2 1007.2 850.0 1008.9 852.2C1010.6 854.5 1009.7 862.7 1008.0 864.6C1006.3 866.4 1000.3 865.5 998.6 863.2C996.8 861.0 995.9 852.9 997.7 851.1Z" fill="#d7f4e1"/><path d="M1065.2 720.5C1066.8 710.8 1074.3 711.5 1076.0 721.6C1077.6 731.8 1076.7 771.6 1075.1 781.3C1073.4 791.0 1067.7 790.1 1066.1 779.9C1064.4 769.8 1063.5 730.2 1065.2 720.5Z" fill="#d7f4e1"/><path d="M723.0 862.3C725.1 860.5 734.4 861.2 736.5 863.5C738.6 865.7 737.7 874.0 735.6 875.8C733.5 877.7 726.0 876.7 723.9 874.5C721.8 872.2 720.9 864.2 723.0 862.3Z" fill="#d7f4e1"/><path d="M723.0 887.1C724.7 884.5 732.5 885.2 734.3 888.2C736.0 891.2 735.1 902.5 733.4 905.1C731.6 907.7 725.6 906.8 723.9 903.8C722.2 900.8 721.3 889.7 723.0 887.1Z" fill="#d7f4e1"/><path d="M752.3 819.6C755.5 818.5 769.3 819.2 772.5 820.7C775.8 822.2 774.9 827.5 771.6 828.6C768.4 829.7 756.4 828.7 753.2 827.2C749.9 825.7 749.0 820.7 752.3 819.6Z" fill="#d7f4e1"/><path d="M831.1 819.6C832.4 817.7 838.7 818.4 840.1 820.7C841.4 822.9 840.5 831.2 839.2 833.1C837.8 834.9 833.3 834.0 832.0 831.7C830.6 829.5 829.7 821.4 831.1 819.6Z" fill="#d7f4e1"/><path d="M1004.4 898.4C1006.5 897.6 1015.8 898.4 1017.9 899.5C1020.0 900.6 1019.1 904.4 1017.0 905.1C1014.9 905.8 1007.4 904.9 1005.3 903.8C1003.2 902.6 1002.3 899.1 1004.4 898.4Z" fill="#d7f4e1"/><path d="M939.1 923.1C940.8 922.0 948.6 922.7 950.4 924.2C952.1 925.7 951.2 931.0 949.5 932.1C947.7 933.2 941.7 932.3 940.0 930.8C938.3 929.3 937.4 924.2 939.1 923.1Z" fill="#d7f4e1"/><path d="M1060.7 819.6C1062.8 818.5 1072.1 819.2 1074.2 820.7C1076.3 822.2 1075.4 827.5 1073.3 828.6C1071.2 829.7 1063.7 828.7 1061.6 827.2C1059.5 825.7 1058.6 820.7 1060.7 819.6Z" fill="#d7f4e1"/><path d="M756.8 725.0C758.5 723.5 766.3 724.3 768.0 726.1C769.8 728.0 768.9 734.8 767.1 736.3C765.4 737.7 759.4 736.8 757.7 734.9C755.9 733.0 755.0 726.5 756.8 725.0Z" fill="#d7f4e1"/><path d="M732.0 833.1C733.4 830.5 739.7 831.2 741.0 834.2C742.4 837.2 741.5 848.5 740.1 851.1C738.8 853.7 734.3 852.7 732.9 849.7C731.6 846.7 730.7 835.7 732.0 833.1Z" fill="#d7f4e1"/><path d="M437.5 326.5C435.3 331.0 429.3 344.9 424.0 353.6C418.8 362.2 410.0 370.8 406.0 378.3C402.1 385.8 398.1 391.5 400.4 398.6C402.6 405.7 414.6 414.7 419.5 421.1C424.4 427.5 428.7 430.9 429.7 436.9C430.6 442.9 425.3 450.9 425.2 457.1C425.0 463.3 428.3 471.2 429.0 474.0" stroke="#a0d5ef" stroke-width="7.6" fill="none" stroke-linecap="round"/><path d="M433.7 263.5C434.9 259.9 440.6 264.5 441.6 268.0C442.6 271.6 441.0 281.3 439.8 284.9C438.6 288.5 435.2 293.0 434.2 289.4C433.1 285.8 432.5 267.1 433.7 263.5Z" fill="#a0d5ef"/><path d="M420.0 389.6C421.5 386.8 427.6 384.3 429.0 386.2C430.3 388.2 429.6 398.5 428.1 401.3C426.6 404.1 421.3 405.0 420.0 403.1C418.6 401.1 418.5 392.4 420.0 389.6Z" fill="#a0d5ef"/><path d="M505.1 427.9C507.3 427.9 510.3 435.0 514.1 436.9C517.8 438.7 525.3 435.7 527.6 439.1C529.8 442.5 529.8 452.6 527.6 457.1C525.3 461.6 517.8 463.3 514.1 466.1C510.3 468.9 510.3 472.7 505.1 474.0C499.8 475.3 484.1 477.6 482.6 474.0C481.1 470.4 493.1 458.8 496.1 452.6C499.1 446.4 499.1 441.0 500.6 436.9C502.1 432.7 502.8 427.9 505.1 427.9Z" fill="#a0d5ef"/><path d="M525.3 436.9 L537.7 431.2" stroke="#a0d5ef" stroke-width="3" fill="none" /><path d="M624.4 355.8C626.3 355.3 633.8 355.7 635.6 356.3C637.5 356.9 637.5 358.9 635.6 359.4C633.8 359.9 626.3 360.0 624.4 359.4C622.5 358.8 622.5 356.3 624.4 355.8Z" fill="#a0d5ef"/><path d="M469.1 474.0C474.7 472.5 496.1 471.7 500.6 474.0C505.1 476.3 499.8 483.0 496.1 487.5C492.3 492.0 483.3 496.5 478.1 501.0C472.8 505.5 468.3 511.5 464.6 514.5C460.8 517.5 458.5 520.5 455.5 519.0C452.5 517.5 446.2 509.3 446.5 505.5C446.9 501.8 454.4 500.3 457.8 496.5C461.2 492.8 464.9 486.8 466.8 483.0C468.7 479.3 463.4 475.5 469.1 474.0Z" fill="#a0d5ef"/><path d="M482.6 474.0C488.9 471.7 517.8 472.9 525.3 474.0C532.8 475.1 534.0 478.5 527.6 480.8C521.2 483.0 494.6 488.6 487.1 487.5C479.6 486.4 476.2 476.3 482.6 474.0Z" fill="#a0d5ef"/><path d="M446.5 514.5C444.7 517.5 438.3 526.9 435.3 532.5C432.3 538.2 430.0 543.0 428.5 548.3C427.0 553.5 428.3 560.3 426.3 564.0C424.2 567.8 417.8 569.7 416.2 570.8" stroke="#a0d5ef" stroke-width="7" fill="none" stroke-linecap="round"/><path d="M541.1 495.4C543.9 493.5 555.9 492.0 559.1 493.1C562.3 494.3 563.0 500.3 560.2 502.1C557.4 504.0 545.4 505.5 542.2 504.4C539.0 503.3 538.3 497.3 541.1 495.4Z" fill="#a0d5ef"/><path d="M444.3 591.1C449.9 594.1 464.2 606.1 478.1 609.1C491.9 612.1 514.1 609.6 527.6 609.1C541.1 608.5 552.4 603.8 559.1 605.7C565.9 607.6 562.1 616.0 568.1 620.3C574.1 624.6 583.1 630.1 595.1 631.6C607.1 633.1 628.9 628.6 640.1 629.3C651.4 630.1 658.9 635.0 662.7 636.1" stroke="#b7def3" stroke-width="2" fill="none" /><path d="M482.6 546.0C490.1 547.2 508.8 551.7 527.6 552.8C546.3 553.9 579.0 548.3 595.1 552.8C611.3 557.3 619.5 575.3 624.4 579.8" stroke="#b7def3" stroke-width="1.8" fill="none" /><path d="M379.0 660.9C383.1 659.7 392.5 665.0 394.8 669.9C397.0 674.7 394.4 683.9 392.5 690.1C390.6 696.3 387.3 704.2 383.5 707.0C379.8 709.8 372.3 712.1 370.0 707.0C367.7 701.9 368.5 684.3 370.0 676.6C371.5 668.9 374.9 662.0 379.0 660.9Z" fill="#a0d5ef"/><path d="M415.0 654.1C416.3 650.3 422.5 650.3 424.0 654.1C425.5 657.9 425.3 672.9 424.0 676.6C422.7 680.4 417.7 680.4 416.2 676.6C414.6 672.9 413.7 657.9 415.0 654.1Z" fill="#a0d5ef"/><path d="M370.0 707.0C372.3 684.9 380.5 703.2 383.5 707.0C386.5 710.8 386.5 720.1 388.0 729.5C389.5 738.9 392.9 752.0 392.5 763.3C392.1 774.5 388.0 786.9 385.8 797.0C383.5 807.2 379.8 817.7 379.0 824.1C378.3 830.4 382.8 832.7 381.3 835.3C379.8 837.9 371.9 861.2 370.0 839.8C368.1 818.4 367.7 729.1 370.0 707.0Z" fill="#a0d5ef"/><path d="M513.0 766.0C512.0 768.2 509.2 775.9 507.3 779.0C505.4 782.2 502.6 783.7 501.7 784.7" stroke="#a0d5ef" stroke-width="3" fill="none" stroke-linecap="round"/><path d="M465.7 822.3C464.2 823.1 458.9 825.1 456.7 827.4C454.4 829.8 452.9 834.9 452.2 836.4" stroke="#a0d5ef" stroke-width="2.6" fill="none" stroke-linecap="round"/><path d="M401.5 864.6C403.8 863.1 410.1 858.2 415.0 855.6C419.9 853.0 425.9 849.8 430.8 848.8C435.7 847.9 442.0 849.8 444.3 850.0" stroke="#a0d5ef" stroke-width="4" fill="none" stroke-linecap="round"/><path d="M590.6 882.6C589.1 887.1 584.6 902.1 581.6 909.6C578.6 917.1 575.6 922.6 572.6 927.6C569.6 932.7 565.1 937.9 563.6 940.0" stroke="#b7def3" stroke-width="1.6" fill="none" /><path d="M867.7 693.0C868.7 690.8 873.6 688.0 877.0 689.5C880.4 691.0 884.2 697.9 887.8 701.8C891.4 705.6 895.2 708.5 898.6 712.6C902.0 716.7 905.6 722.1 907.9 726.5C910.2 730.9 912.9 737.8 912.6 738.9C912.4 740.0 909.8 735.1 906.4 733.0C903.0 730.9 895.4 726.8 892.0 726.5C888.6 726.2 888.5 733.2 886.3 731.2C884.0 729.2 881.1 719.0 878.5 714.2C875.9 709.4 872.6 706.0 870.8 702.5C869.0 699.0 866.7 695.2 867.7 693.0Z" fill="#a0d5ef"/><path d="M911.7 736.3C912.3 738.9 914.8 745.6 915.5 752.0C916.1 758.4 914.4 768.3 915.5 774.5C916.6 780.7 918.3 783.9 922.2 789.2C926.2 794.4 932.6 801.2 939.1 806.1C945.7 810.9 953.4 816.2 961.6 818.4C969.9 820.7 979.6 819.4 988.6 819.6C997.7 819.7 1007.4 818.4 1015.7 819.6C1023.9 820.7 1032.9 822.9 1038.2 826.3C1043.4 829.7 1044.2 838.3 1047.2 839.8C1050.2 841.3 1053.2 834.9 1056.2 835.3C1059.2 835.7 1061.9 841.7 1065.2 842.1C1068.5 842.4 1074.2 838.3 1076.0 837.6" stroke="#a0d5ef" stroke-width="3.6" fill="none" /><path d="M1047.2 839.8C1047.6 844.0 1048.3 856.7 1049.4 864.6C1050.6 872.5 1051.7 880.3 1053.9 887.1C1056.2 893.9 1060.7 899.1 1062.9 905.1C1065.2 911.1 1066.3 917.3 1067.4 923.1C1068.6 928.9 1069.3 937.2 1069.7 940.0" stroke="#a0d5ef" stroke-width="4.6" fill="none" /><path d="M723.0 822.9C730.5 820.9 748.5 813.4 768.0 810.6C787.5 807.7 819.1 806.4 840.1 806.1C861.1 805.7 880.6 809.1 894.1 808.3C907.6 807.6 916.6 802.7 921.1 801.6" stroke="#b7def3" stroke-width="1.8" fill="none" /><path d="M957.1 905.1C966.9 904.4 1000.3 902.1 1015.7 900.6C1031.0 899.1 1043.8 896.9 1049.4 896.1" stroke="#b7def3" stroke-width="1.6" fill="none" /><path d="M800.4 662.4C805.3 666.3 820.0 679.4 830.0 685.4C839.9 691.4 855.0 696.4 860.0 698.6" stroke="#a0d5ef" stroke-width="4" fill="none" /><path d="M822.1 681.1C825.1 682.2 834.1 684.9 840.1 687.9C846.1 690.9 853.6 695.9 858.1 699.1C862.6 702.3 865.6 705.7 867.1 707.0" stroke="#a0d5ef" stroke-width="3" fill="none" /><path d="M600.0 616.4C601.6 618.1 606.0 625.2 609.9 626.3C613.7 627.4 618.6 621.9 623.0 623.0C627.4 624.1 630.9 632.0 636.1 632.9C641.3 633.7 648.7 627.7 654.2 627.9C659.7 628.2 662.7 634.2 669.0 634.5C675.3 634.8 688.2 630.4 692.0 629.6" stroke="#b7def3" stroke-width="2" fill="none" /><path d="M692.0 629.6C695.8 627.9 706.8 617.8 715.0 619.7C723.2 621.6 733.0 636.1 741.3 641.1C749.5 646.0 754.4 645.7 764.3 649.3C774.1 652.8 794.4 660.2 800.4 662.4" stroke="#b7def3" stroke-width="2" fill="none" /><path d="M887.3 550.5C890.0 549.8 900.5 549.8 903.1 550.5C905.7 551.3 905.7 554.3 903.1 555.0C900.5 555.8 890.0 555.8 887.3 555.0C884.7 554.3 884.7 551.3 887.3 550.5Z" fill="#a0d5ef"/><path d="M759.0 298.4C760.5 297.3 766.5 297.3 768.0 298.4C769.5 299.5 769.5 304.0 768.0 305.2C766.5 306.3 760.5 306.3 759.0 305.2C757.5 304.0 757.5 299.5 759.0 298.4Z" fill="#a0d5ef"/><path d="M852.2 333.3C852.9 331.4 855.6 331.4 856.3 333.3C856.9 335.2 856.9 342.7 856.3 344.6C855.6 346.4 852.9 346.4 852.2 344.6C851.5 342.7 851.5 335.2 852.2 333.3Z" fill="#a0d5ef"/><path d="M863.5 281.5C863.9 279.8 865.7 279.8 866.2 281.5C866.6 283.2 866.6 290.0 866.2 291.7C865.7 293.3 863.9 293.3 863.5 291.7C863.0 290.0 863.0 283.2 863.5 281.5Z" fill="#a0d5ef"/><path d="M729.8 328.8C730.5 327.7 733.5 327.7 734.3 328.8C735.0 329.9 735.0 334.4 734.3 335.6C733.5 336.7 730.5 336.7 729.8 335.6C729.0 334.4 729.0 329.9 729.8 328.8Z" fill="#a0d5ef"/><path d="M1011.2 463.9C1012.7 462.7 1018.7 462.7 1020.2 463.9C1021.7 465.0 1021.7 469.5 1020.2 470.6C1018.7 471.8 1012.7 471.8 1011.2 470.6C1009.7 469.5 1009.7 465.0 1011.2 463.9Z" fill="#a0d5ef"/><g fill="none" stroke-linecap="round" stroke-linejoin="round"><g stroke="#dfe2e9" stroke-width="1.3"><path d="M370.0 250.0C374.5 253.8 389.5 266.5 397.0 272.5C404.5 278.5 407.5 278.9 415.0 286.0C422.5 293.2 433.8 305.2 442.0 315.3C450.3 325.4 455.5 335.2 464.6 346.8C473.6 358.4 490.8 378.7 496.1 385.1"/><path d="M415.0 241.0C415.4 248.5 418.0 271.0 417.3 286.0C416.5 301.0 412.4 319.0 410.5 331.0C408.6 343.1 406.8 353.6 406.0 358.1"/><path d="M403.8 241.0C404.5 247.8 401.5 265.8 408.3 281.5C415.0 297.3 438.3 326.5 444.3 335.6"/><path d="M437.5 328.8C442.0 335.2 454.8 357.3 464.6 367.1C474.3 376.8 485.6 382.1 496.1 387.3C506.6 392.6 518.6 399.0 527.6 398.6C536.6 398.2 542.6 393.3 550.1 385.1C557.6 376.8 568.9 355.1 572.6 349.1"/><path d="M496.1 346.8C499.1 345.7 507.3 343.4 514.1 340.1C520.8 336.7 527.6 334.1 536.6 326.5C545.6 319.0 562.9 300.3 568.1 295.0"/><path d="M556.9 313.0C559.5 316.8 566.2 326.5 572.6 335.6C579.0 344.6 587.6 356.6 595.1 367.1C602.6 377.6 610.1 385.8 617.6 398.6C625.1 411.3 634.9 431.0 640.1 443.6C645.4 456.2 647.7 468.9 649.2 474.0"/><path d="M554.6 425.6C561.4 424.1 580.9 421.1 595.1 416.6C609.4 412.1 625.1 403.8 640.1 398.6C655.2 393.3 671.4 390.3 685.2 385.1C699.0 379.8 716.7 370.1 723.0 367.1"/><path d="M541.1 443.6C550.1 442.1 576.7 435.4 595.1 434.6C613.5 433.9 633.4 437.6 651.4 439.1C669.4 440.6 691.3 443.6 703.2 443.6C715.1 443.6 719.7 439.9 723.0 439.1"/><path d="M595.1 349.1C602.6 348.7 628.1 345.3 640.1 346.8C652.2 348.3 655.9 353.2 667.2 358.1C678.4 362.9 700.9 373.1 707.7 376.1"/><path d="M606.4 376.1C608.3 382.1 616.5 400.8 617.6 412.1C618.8 423.4 614.6 433.3 613.1 443.6C611.6 453.9 609.4 468.9 608.6 474.0"/><path d="M662.7 353.6C664.5 361.1 669.4 383.6 673.9 398.6C678.4 413.6 685.9 431.0 689.7 443.6C693.4 456.2 695.3 468.9 696.4 474.0"/><path d="M561.4 367.1C567.0 370.1 583.9 382.8 595.1 385.1C606.4 387.3 617.6 383.6 628.9 380.6C640.1 377.6 657.0 369.3 662.7 367.1"/><path d="M617.6 241.0C619.5 244.8 628.9 256.0 628.9 263.5C628.9 271.0 621.0 278.5 617.6 286.0C614.3 293.5 610.1 304.8 608.6 308.5"/><path d="M723.0 268.0C719.7 268.4 709.5 265.8 703.2 270.3C696.9 274.8 691.9 287.5 685.2 295.0C678.4 302.5 666.4 311.9 662.7 315.3"/><path d="M448.8 398.6C454.4 400.8 469.4 408.3 482.6 412.1C495.7 415.8 517.8 415.8 527.6 421.1C537.3 426.4 538.8 439.9 541.1 443.6"/><path d="M430.8 412.1C433.8 417.3 444.7 433.3 448.8 443.6C452.9 453.9 454.4 468.9 455.5 474.0"/><path d="M572.6 457.1C580.1 457.1 602.6 455.6 617.6 457.1C632.6 458.6 647.7 464.2 662.7 466.1C677.7 468.0 700.2 468.0 707.7 468.4"/><path d="M840.1 270.3C849.1 271.4 876.1 272.1 894.1 277.0C912.1 281.9 931.6 290.5 948.1 299.5C964.6 308.5 978.1 324.7 993.1 331.0C1008.2 337.4 1030.7 336.7 1038.2 337.8"/><path d="M894.1 241.0C893.3 246.3 894.1 261.3 889.6 272.5C885.1 283.8 876.8 294.3 867.1 308.5C857.3 322.8 837.1 349.8 831.1 358.1"/><path d="M909.9 308.5C912.5 313.0 919.2 327.3 925.6 335.6C932.0 343.8 942.5 347.6 948.1 358.1C953.8 368.6 956.4 379.3 959.4 398.6C962.4 417.9 965.0 461.4 966.1 474.0"/><path d="M918.9 313.0C918.5 316.8 920.7 328.0 916.6 335.6C912.5 343.1 902.3 347.6 894.1 358.1C885.8 368.6 874.6 388.1 867.1 398.6C859.6 409.1 852.1 417.3 849.1 421.1"/><path d="M948.1 268.0C951.9 271.8 961.3 283.8 970.6 290.5C980.0 297.3 993.1 305.2 1004.4 308.5C1015.7 311.9 1032.5 310.4 1038.2 310.8"/><path d="M997.7 263.5C998.4 271.0 1002.9 294.3 1002.2 308.5C1001.4 322.8 994.6 342.3 993.1 349.1"/><path d="M1051.7 308.5C1052.1 313.8 1049.9 330.3 1053.9 340.1C1058.0 349.8 1072.3 362.6 1076.0 367.1"/><path d="M849.1 367.1C854.3 369.3 870.8 377.6 880.6 380.6C890.3 383.6 900.1 385.8 907.6 385.1C915.1 384.3 922.6 377.6 925.6 376.1"/><path d="M799.5 344.6C799.9 351.3 801.0 371.6 801.8 385.1C802.5 398.6 806.7 410.8 804.0 425.6C801.4 440.4 789.0 465.9 786.0 474.0"/><path d="M723.0 398.6C730.5 397.1 753.8 394.8 768.0 389.6C782.3 384.3 795.0 369.3 808.5 367.1C822.1 364.8 842.3 374.6 849.1 376.1"/><path d="M752.3 412.1C760.1 409.8 783.4 403.1 799.5 398.6C815.7 394.1 835.6 390.3 849.1 385.1C862.6 379.8 875.3 370.1 880.6 367.1"/><path d="M849.1 385.1C852.1 390.3 859.6 406.8 867.1 416.6C874.6 426.4 884.3 434.0 894.1 443.6C903.8 453.2 920.4 468.9 925.6 474.0"/><path d="M957.1 398.6C961.3 400.8 972.1 405.3 981.9 412.1C991.6 418.8 1006.3 428.8 1015.7 439.1C1025.0 449.4 1034.4 468.2 1038.2 474.0"/><path d="M723.0 443.6C730.5 443.6 753.0 442.9 768.0 443.6C783.0 444.4 798.0 444.4 813.0 448.1C828.1 451.9 850.6 463.1 858.1 466.1"/><path d="M768.0 385.1C769.2 391.1 774.8 409.1 774.8 421.1C774.8 433.1 770.7 448.3 768.0 457.1C765.4 465.9 760.5 471.2 759.0 474.0"/><path d="M993.1 474.0C996.9 470.4 1006.3 459.2 1015.7 452.6C1025.0 446.1 1039.4 439.9 1049.4 434.6C1059.5 429.4 1071.6 423.4 1076.0 421.1"/><path d="M370.0 548.3C377.5 549.4 400.0 549.8 415.0 555.0C430.0 560.3 439.0 573.1 460.0 579.8C481.1 586.6 527.6 592.9 541.1 595.6"/><path d="M455.5 579.8C464.6 580.6 491.9 582.4 509.6 584.3C527.2 586.2 552.7 589.9 561.4 591.1"/><path d="M390.3 519.0C391.0 526.5 395.9 550.5 394.8 564.0C393.6 577.6 384.6 585.1 383.5 600.1C382.4 615.1 387.3 645.1 388.0 654.1"/><path d="M415.0 570.8C414.6 577.2 410.5 596.7 412.8 609.1C415.0 621.5 424.4 635.0 428.5 645.1C432.7 655.2 436.0 665.7 437.5 669.9"/><path d="M370.0 613.6C381.3 612.8 419.5 608.3 437.5 609.1C455.5 609.8 460.8 616.6 478.1 618.1C495.3 619.6 530.6 618.1 541.1 618.1"/><path d="M478.1 532.5C478.8 538.5 478.1 557.3 482.6 568.6C487.1 579.8 499.8 589.6 505.1 600.1C510.3 610.6 512.6 626.3 514.1 631.6"/><path d="M595.1 552.8C596.6 558.4 600.4 573.4 604.1 586.6C607.9 599.7 614.3 620.3 617.6 631.6C621.0 642.8 623.3 650.3 624.4 654.1"/><path d="M572.6 600.1C583.9 599.3 619.5 596.3 640.1 595.6C660.8 594.8 687.0 595.6 696.4 595.6"/><path d="M568.1 620.3C576.4 620.0 598.1 617.7 617.6 618.1C637.1 618.5 673.9 621.8 685.2 622.6"/><path d="M595.1 496.5C598.9 500.3 607.5 513.8 617.6 519.0C627.8 524.3 644.7 528.4 655.9 528.0C667.2 527.7 680.3 518.6 685.2 516.8"/><path d="M617.6 474.0C619.1 478.5 621.0 490.5 626.6 501.0C632.3 511.5 647.3 531.0 651.4 537.0"/><path d="M640.1 573.1C641.3 579.1 646.2 596.3 646.9 609.1C647.7 621.8 645.0 642.8 644.7 649.6"/><path d="M541.1 640.6C550.1 639.8 574.9 636.8 595.1 636.1C615.4 635.3 651.4 636.1 662.7 636.1"/><path d="M496.1 658.6C497.6 661.6 497.6 669.9 505.1 676.6C512.6 683.4 535.1 695.4 541.1 699.1"/><path d="M595.1 667.6C598.9 672.9 612.8 692.6 617.6 699.1C622.5 705.7 623.3 705.7 624.4 707.0"/><path d="M662.7 609.1C663.4 615.1 667.2 633.8 667.2 645.1C667.2 656.4 662.3 666.3 662.7 676.6C663.0 686.9 668.3 701.9 669.4 707.0"/><path d="M505.1 548.3C516.3 549.0 552.7 551.7 572.6 552.8C592.5 553.9 615.8 554.7 624.4 555.0"/><path d="M817.6 474.0C817.9 481.5 816.1 503.3 819.8 519.0C823.6 534.8 835.2 553.5 840.1 568.6C844.9 583.6 848.3 595.9 849.1 609.1C849.8 622.2 845.3 641.0 844.6 647.3"/><path d="M797.3 550.5C807.4 549.4 836.7 547.5 858.1 543.8C879.5 540.0 906.9 535.9 925.6 528.0C944.4 520.2 957.5 505.5 970.6 496.5C983.8 487.5 998.8 477.8 1004.4 474.0"/><path d="M862.6 519.0C869.3 520.2 888.8 520.9 903.1 525.8C917.4 530.7 931.2 541.9 948.1 548.3C965.0 554.7 995.0 561.4 1004.4 564.0"/><path d="M858.1 546.0C859.6 552.8 862.6 572.3 867.1 586.6C871.6 600.8 879.1 620.0 885.1 631.6C891.1 643.2 900.1 652.2 903.1 656.4"/><path d="M914.4 474.0C915.1 481.5 915.9 503.3 918.9 519.0C921.9 534.8 929.0 552.0 932.4 568.6C935.7 585.1 936.5 602.3 939.1 618.1C941.7 633.8 946.6 655.6 948.1 663.1"/><path d="M948.1 483.0C950.4 492.8 958.6 523.5 961.6 541.5C964.6 559.5 964.6 570.8 966.1 591.1C967.6 611.3 969.9 651.1 970.6 663.1"/><path d="M799.5 600.1C809.3 600.8 837.1 603.1 858.1 604.6C879.1 606.1 904.6 607.6 925.6 609.1C946.6 610.6 974.4 612.8 984.1 613.6"/><path d="M849.1 627.1C858.1 627.8 882.8 630.1 903.1 631.6C923.4 633.1 948.1 636.1 970.6 636.1C993.1 636.1 1020.6 631.6 1038.2 631.6C1055.7 631.6 1069.7 635.3 1076.0 636.1"/><path d="M990.9 573.1C996.9 573.8 1012.7 577.9 1026.9 577.6C1041.1 577.2 1067.8 571.9 1076.0 570.8"/><path d="M1022.4 512.3C1026.9 515.6 1040.5 528.4 1049.4 532.5C1058.4 536.7 1071.6 536.3 1076.0 537.0"/><path d="M1015.7 609.1C1016.4 615.8 1020.2 639.1 1020.2 649.6C1020.2 660.1 1016.4 668.4 1015.7 672.1"/><path d="M880.6 667.6C888.1 669.1 910.6 672.9 925.6 676.6C940.6 680.4 955.6 686.4 970.6 690.1C985.6 693.9 1008.2 697.6 1015.7 699.1"/><path d="M907.6 663.1C908.4 667.6 909.1 682.8 912.1 690.1C915.1 697.4 923.4 704.2 925.6 707.0"/><path d="M970.6 667.6C972.5 671.4 978.9 683.6 981.9 690.1C984.9 696.7 987.5 704.2 988.6 707.0"/><path d="M828.8 557.3C837.4 559.2 866.0 565.2 880.6 568.6C895.2 571.9 910.6 576.1 916.6 577.6"/><path d="M723.0 528.0C727.5 528.8 738.0 530.3 750.0 532.5C762.0 534.8 787.5 540.0 795.0 541.5"/><path d="M736.5 474.0C737.3 478.5 738.0 493.5 741.0 501.0C744.0 508.5 752.3 516.0 754.5 519.0"/><path d="M840.1 501.0C846.8 501.8 867.8 506.3 880.6 505.5C893.3 504.8 910.6 498.0 916.6 496.5"/><path d="M984.1 496.5 L993.1 541.5"/><path d="M514.1 752.0C517.8 754.3 526.8 762.5 536.6 765.5C546.3 768.5 559.1 767.8 572.6 770.0C586.1 772.3 604.5 779.0 617.6 779.0C630.8 779.0 645.8 771.5 651.4 770.0"/><path d="M527.6 707.0C529.1 714.5 535.8 736.3 536.6 752.0C537.3 767.8 535.1 786.5 532.1 801.6C529.1 816.6 523.1 830.1 518.6 842.1C514.1 854.1 507.3 868.3 505.1 873.6"/><path d="M554.6 734.0C555.0 740.8 557.6 761.0 556.9 774.5C556.1 788.0 555.0 802.3 550.1 815.1C545.2 827.8 531.3 845.1 527.6 851.1"/><path d="M586.1 745.3C585.4 752.4 580.1 774.9 581.6 788.0C583.1 801.2 592.1 811.3 595.1 824.1C598.1 836.8 598.1 850.3 599.6 864.6C601.1 878.8 603.4 897.0 604.1 909.6C604.9 922.2 604.1 934.9 604.1 940.0"/><path d="M617.6 754.3C618.4 761.4 618.4 783.9 622.1 797.0C625.9 810.2 633.4 821.8 640.1 833.1C646.9 844.3 655.2 855.6 662.7 864.6C670.2 873.6 681.4 883.3 685.2 887.1"/><path d="M532.1 806.1C538.8 806.1 556.9 807.6 572.6 806.1C588.4 804.6 617.6 798.6 626.6 797.0"/><path d="M505.1 833.1C511.1 832.3 529.8 827.1 541.1 828.6C552.4 830.1 561.4 838.3 572.6 842.1C583.9 845.8 593.6 850.3 608.6 851.1C623.6 851.8 643.6 849.6 662.7 846.6C681.7 843.6 712.9 835.3 723.0 833.1"/><path d="M464.6 846.6C469.8 847.3 485.6 849.6 496.1 851.1C506.6 852.6 519.3 854.8 527.6 855.6C535.8 856.3 542.6 855.6 545.6 855.6"/><path d="M482.6 830.8C483.3 836.4 484.8 854.5 487.1 864.6C489.3 874.7 493.1 879.0 496.1 891.6C499.1 904.2 503.6 931.9 505.1 940.0"/><path d="M514.1 873.6C520.1 875.8 536.6 884.1 550.1 887.1C563.6 890.1 580.1 891.6 595.1 891.6C610.1 891.6 625.1 889.4 640.1 887.1C655.2 884.8 677.7 879.6 685.2 878.1"/><path d="M568.1 855.6C569.6 860.1 572.6 873.6 577.1 882.6C581.6 891.6 588.4 900.0 595.1 909.6C601.9 919.2 613.9 934.9 617.6 940.0"/><path d="M444.3 891.6C445.4 895.4 451.4 906.0 451.0 914.1C450.7 922.2 443.5 935.7 442.0 940.0"/><path d="M471.3 884.8C473.9 889.0 477.7 903.2 487.1 909.6C496.4 916.0 514.8 918.1 527.6 923.1C540.3 928.2 557.6 937.2 563.6 940.0"/><path d="M626.6 797.0C632.6 798.6 651.0 804.6 662.7 806.1C674.3 807.6 687.0 804.6 696.4 806.1C705.8 807.6 715.2 813.6 718.9 815.1"/><path d="M640.1 833.1C645.8 832.3 662.7 827.1 673.9 828.6C685.2 830.1 702.1 839.8 707.7 842.1"/><path d="M658.2 846.6C657.4 853.3 656.7 871.5 653.7 887.1C650.7 902.7 642.4 931.2 640.1 940.0"/><path d="M527.6 905.1C535.1 904.4 557.6 899.9 572.6 900.6C587.6 901.4 602.6 908.9 617.6 909.6C632.6 910.4 648.4 905.9 662.7 905.1C676.9 904.4 696.4 905.1 703.2 905.1"/><path d="M685.2 774.5C685.9 781.3 689.7 800.1 689.7 815.1C689.7 830.1 684.4 849.6 685.2 864.6C685.9 879.6 692.7 898.4 694.2 905.1"/><path d="M541.1 720.5C546.3 724.3 562.1 737.4 572.6 743.0C583.1 748.6 598.9 752.4 604.1 754.3"/><path d="M595.1 707.0C595.5 710.8 595.9 721.6 597.4 729.5C598.9 737.4 603.0 750.1 604.1 754.3"/><path d="M628.9 707.0C629.3 710.8 627.8 721.8 631.1 729.5C634.5 737.2 646.2 749.2 649.2 753.2"/><path d="M392.5 909.6C396.3 911.9 406.8 919.4 415.0 923.1C423.3 926.9 437.5 930.6 442.0 932.1"/><path d="M392.5 761.0C393.3 764.4 398.5 769.3 397.0 781.3C395.5 793.3 385.8 824.4 383.5 833.1"/><path d="M482.6 765.5C482.2 770.8 479.6 786.5 480.3 797.0C481.1 807.6 485.9 823.3 487.1 828.6"/><path d="M788.3 736.3C788.7 742.6 788.7 763.7 790.5 774.5C792.4 785.4 796.5 788.8 799.5 801.6C802.5 814.3 806.3 833.1 808.5 851.1C810.8 869.1 813.0 894.8 813.0 909.6C813.0 924.4 809.3 934.9 808.5 940.0"/><path d="M813.0 720.5C813.8 727.3 816.1 748.3 817.6 761.0C819.1 773.8 821.3 791.0 822.1 797.0"/><path d="M723.0 810.6C730.5 812.1 753.0 817.3 768.0 819.6C783.0 821.8 799.5 824.8 813.0 824.1C826.6 823.3 843.1 816.6 849.1 815.1"/><path d="M723.0 833.1C734.3 833.8 768.0 837.6 790.5 837.6C813.0 837.6 839.3 834.6 858.1 833.1C876.8 831.6 889.6 831.2 903.1 828.6C916.6 825.9 933.1 819.2 939.1 817.3"/><path d="M862.6 835.3C865.6 833.4 872.3 827.4 880.6 824.1C888.8 820.7 902.3 818.1 912.1 815.1C921.9 812.1 934.6 807.6 939.1 806.1"/><path d="M745.5 801.6C747.8 808.3 751.5 829.3 759.0 842.1C766.5 854.8 780.8 866.8 790.5 878.1C800.3 889.4 809.3 899.3 817.6 909.6C825.8 919.9 836.3 934.9 840.1 940.0"/><path d="M723.0 909.6C730.5 908.1 753.0 904.4 768.0 900.6C783.0 896.9 799.5 890.9 813.0 887.1C826.6 883.3 837.8 884.1 849.1 878.1C860.3 872.1 875.3 855.6 880.6 851.1"/><path d="M849.1 878.1C854.3 880.3 869.3 886.3 880.6 891.6C891.8 896.9 905.4 902.9 916.6 909.6C927.9 916.4 942.9 928.4 948.1 932.1"/><path d="M880.6 851.1C882.8 855.6 888.8 868.3 894.1 878.1C899.3 887.8 908.4 899.3 912.1 909.6C915.9 919.9 915.9 934.9 916.6 940.0"/><path d="M921.1 761.0C925.6 763.3 938.0 767.8 948.1 774.5C958.3 781.3 971.4 791.8 981.9 801.6C992.4 811.3 1001.8 822.6 1011.2 833.1C1020.5 843.6 1033.7 859.3 1038.2 864.6"/><path d="M948.1 707.0C949.6 713.0 953.4 730.6 957.1 743.0C960.9 755.4 966.5 771.5 970.6 781.3C974.8 791.0 980.0 798.2 981.9 801.6"/><path d="M966.1 707.0C970.6 713.0 984.9 730.6 993.1 743.0C1001.4 755.4 1009.7 768.5 1015.7 781.3C1021.7 794.0 1026.9 813.2 1029.2 819.6"/><path d="M993.1 743.0C998.8 741.5 1013.1 734.0 1026.9 734.0C1040.7 734.0 1067.8 741.5 1076.0 743.0"/><path d="M1015.7 781.3C1021.3 781.7 1039.4 784.7 1049.4 783.5C1059.5 782.4 1071.6 776.0 1076.0 774.5"/><path d="M939.1 817.3C944.4 819.9 957.9 828.9 970.6 833.1C983.4 837.2 1002.9 840.6 1015.7 842.1C1028.4 843.6 1041.9 842.1 1047.2 842.1"/><path d="M970.6 851.1C976.3 853.3 993.1 862.3 1004.4 864.6C1015.7 866.8 1026.2 866.1 1038.2 864.6C1050.1 863.1 1069.7 857.1 1076.0 855.6"/><path d="M993.1 878.1C998.8 879.6 1013.1 886.3 1026.9 887.1C1040.7 887.8 1067.8 883.3 1076.0 882.6"/><path d="M959.4 914.1C965.0 914.9 980.0 916.7 993.1 918.6C1006.3 920.5 1030.7 924.2 1038.2 925.4"/><path d="M1020.2 909.6C1024.7 908.1 1037.9 901.4 1047.2 900.6C1056.5 899.9 1071.2 904.4 1076.0 905.1"/><path d="M925.6 889.4C929.4 886.0 940.6 875.5 948.1 869.1C955.6 862.7 966.9 854.1 970.6 851.1"/><path d="M894.1 808.3C895.6 813.9 897.8 832.7 903.1 842.1C908.4 851.5 919.6 855.2 925.6 864.6C931.6 874.0 936.9 892.7 939.1 898.4"/><path d="M768.0 783.5C775.5 783.2 799.5 782.8 813.0 781.3C826.6 779.8 843.1 775.7 849.1 774.5"/><path d="M1004.4 765.5C1005.5 770.8 1011.2 785.8 1011.2 797.0C1011.2 808.3 1005.5 827.1 1004.4 833.1"/><path d="M862.6 747.5C865.6 752.0 876.8 764.4 880.6 774.5C884.3 784.7 884.3 802.7 885.1 808.3"/><path d="M916.6 707.0C918.1 711.5 920.4 722.8 925.6 734.0C930.9 745.3 944.4 767.8 948.1 774.5"/><path d="M777.0 803.8C777.4 810.2 780.8 829.7 779.3 842.1C777.8 854.5 769.2 866.8 768.0 878.1C766.9 889.4 771.8 904.4 772.5 909.6"/><path d="M600.0 649.3C605.5 649.6 621.9 650.4 632.9 650.9C643.8 651.5 653.7 652.8 665.7 652.6C677.7 652.3 698.6 649.8 705.1 649.3"/><path d="M705.1 649.3C712.2 650.1 735.2 651.5 747.8 654.2C760.4 656.9 769.7 663.2 780.7 665.7C791.6 668.2 808.1 668.4 813.5 669.0"/><path d="M649.3 600.0C649.8 605.5 652.6 621.9 652.6 632.9C652.6 643.8 649.0 654.8 649.3 665.7C649.6 676.7 653.4 693.1 654.2 698.6"/><path d="M621.4 600.0C621.6 605.5 622.2 624.6 623.0 632.9C623.8 641.1 625.7 646.5 626.3 649.3"/><path d="M673.9 665.7C674.5 671.2 677.5 687.6 677.2 698.6C676.9 709.5 672.5 719.5 672.3 731.4C672.0 743.3 675.0 763.6 675.6 770.0"/><path d="M600.0 747.8C605.5 747.3 621.4 744.0 632.9 744.5C644.3 745.1 658.0 750.6 669.0 751.1C679.9 751.7 689.8 748.4 698.6 747.8C707.3 747.3 717.7 747.8 721.6 747.8"/><path d="M747.8 665.7C748.4 671.2 751.1 687.6 751.1 698.6C751.1 709.5 746.7 719.5 747.8 731.4C748.9 743.3 756.0 763.6 757.7 770.0"/><path d="M788.9 705.1C790.3 709.5 796.3 720.6 797.1 731.4C797.9 742.2 794.4 763.6 793.8 770.0"/><path d="M721.6 715.0C725.9 715.5 738.0 716.6 747.8 718.3C757.7 719.9 769.7 725.4 780.7 724.8C791.6 724.3 802.6 716.1 813.5 715.0C824.5 713.9 840.9 717.7 846.4 718.3"/><path d="M805.3 646.0C806.7 649.3 808.9 659.1 813.5 665.7C818.2 672.3 830.0 682.1 833.2 685.4"/><path d="M813.5 619.7C816.3 624.6 822.2 643.5 830.0 649.3C837.7 655.0 855.0 653.4 860.0 654.2"/><path d="M692.0 665.7C693.1 671.2 696.9 687.6 698.6 698.6C700.2 709.5 701.3 725.9 701.8 731.4"/><path d="M600.0 502.9C605.5 504.5 621.9 510.5 632.9 512.7C643.8 514.9 652.0 513.0 665.7 516.0C679.4 519.0 701.3 528.0 715.0 530.8C728.7 533.5 742.4 532.1 747.8 532.4"/><path d="M600.0 575.1C605.5 576.8 621.4 582.2 632.9 585.0C644.3 587.7 659.1 588.8 669.0 591.6C678.8 594.3 688.2 599.8 692.0 601.4"/><path d="M641.1 470.0C641.3 475.5 643.0 490.8 642.7 502.9C642.4 514.9 638.9 528.6 639.4 542.3C640.0 556.0 645.2 568.7 646.0 585.0C646.8 601.3 644.6 630.8 644.3 640.0"/><path d="M698.6 470.0C699.6 475.5 702.4 492.7 705.1 502.9C707.9 513.0 711.7 522.0 715.0 530.8C718.3 539.5 723.2 551.3 724.8 555.4"/><path d="M724.8 470.0C725.9 475.5 729.2 492.4 731.4 502.9C733.6 513.3 736.9 527.5 738.0 532.4"/><path d="M797.1 470.0C796.8 478.2 796.0 503.9 795.5 519.3C794.9 534.6 796.3 545.6 793.8 562.0C791.4 578.4 782.9 608.5 780.7 617.8"/><path d="M813.5 502.9C816.3 508.3 822.2 528.6 830.0 535.7C837.7 542.8 855.0 543.9 860.0 545.6"/><path d="M795.5 562.0C801.2 560.9 819.2 556.0 830.0 555.4C840.7 554.9 855.0 558.2 860.0 558.7"/><path d="M830.0 470.0C830.5 475.5 828.2 495.7 833.2 502.9C838.3 510.0 855.6 511.1 860.0 512.7"/><path d="M600.0 611.3C605.5 610.7 621.4 607.4 632.9 608.0C644.3 608.5 659.1 614.0 669.0 614.5C678.8 615.1 688.2 611.8 692.0 611.3"/><path d="M616.4 585.0C617.0 590.5 619.7 608.7 619.7 617.8C619.7 627.0 617.0 636.3 616.4 640.0"/><path d="M813.5 575.1C817.4 576.8 828.8 581.7 836.5 585.0C844.3 588.3 856.1 593.2 860.0 594.8"/></g><g stroke="#aab4d6" stroke-width="1.7"><path d="M844.6 647.3C854.3 648.8 884.3 653.7 903.1 656.4C921.9 659.0 936.5 661.4 957.1 663.1C977.8 664.8 1007.1 665.4 1026.9 666.5C1046.7 667.6 1067.8 669.3 1076.0 669.9"/><path d="M1038.2 480.8 L1076.0 474.0"/><path d="M1076.0 550.5C1069.7 552.0 1050.1 557.3 1038.2 559.5C1026.2 561.8 1010.0 563.3 1004.4 564.0"/><path d="M514.1 873.6C507.0 875.5 482.9 881.8 471.3 884.8C459.7 887.8 454.4 888.2 444.3 891.6C434.2 895.0 419.9 900.2 410.5 905.1C401.1 910.0 394.8 917.5 388.0 920.9C381.3 924.2 373.0 924.6 370.0 925.4"/><path d="M370.0 647.3 L437.5 669.9"/><path d="M673.9 480.8C675.8 486.4 681.8 499.9 685.2 514.5C688.6 529.2 693.1 554.3 694.2 568.6C695.3 582.8 692.3 594.8 691.9 600.1"/><path d="M595.1 654.1C610.1 653.3 663.9 650.5 685.2 649.6C706.5 648.7 716.7 648.7 723.0 648.5"/><path d="M721.6 715.0 L721.6 770.0"/><path d="M830.0 665.7C830.5 669.0 829.4 679.4 833.2 685.4C837.1 691.4 850.8 696.4 853.0 701.8C855.1 707.3 846.4 710.6 846.4 718.3C846.4 725.9 851.3 739.2 853.0 747.8C854.6 756.5 855.7 766.3 856.2 770.0"/><path d="M675.6 481.5C677.2 487.8 682.1 504.8 685.4 519.3C688.7 533.8 694.7 554.9 695.3 568.6C695.8 582.2 689.2 589.5 688.7 601.4C688.2 613.3 691.4 633.6 692.0 640.0"/><path d="M797.3 600.1C793.5 605.3 779.7 624.1 774.8 631.6C769.9 639.1 769.2 642.8 768.0 645.1"/><path d="M370.0 407.6C376.0 405.7 397.4 401.6 406.0 396.3C414.6 391.1 419.2 379.5 421.8 376.1"/></g><g stroke="#9aaad1" stroke-width="3.5"><path d="M474.7 241.0C474.1 246.6 472.2 262.4 471.3 274.8C470.4 287.2 467.9 305.2 469.1 315.3C470.2 325.4 475.1 329.9 478.1 335.6C481.1 341.2 485.9 345.1 487.1 349.1C488.3 353.0 484.5 355.4 485.3 359.2C486.0 362.9 484.5 365.4 491.6 371.6C498.6 377.8 519.3 389.6 527.6 396.3C535.8 403.1 536.2 403.5 541.1 412.1C546.0 420.7 552.7 437.8 556.9 448.1C561.0 458.4 564.4 469.7 565.9 474.0"/><path d="M553.5 241.0C556.7 246.3 567.2 261.3 572.6 272.5C578.1 283.8 582.7 298.0 586.1 308.5C589.5 319.0 591.0 327.3 592.9 335.6C594.7 343.8 594.0 349.8 597.4 358.1C600.8 366.3 607.9 376.8 613.1 385.1C618.4 393.3 624.8 399.3 628.9 407.6C633.0 415.8 634.1 426.4 637.9 434.6C641.6 442.9 648.0 450.6 651.4 457.1C654.8 463.7 657.0 471.2 658.2 474.0"/><path d="M631.1 241.0C637.5 244.0 658.5 252.3 669.4 259.0C680.3 265.8 690.1 274.0 696.4 281.5C702.8 289.0 704.3 298.0 707.7 304.0C711.1 310.0 714.1 312.3 716.7 317.5C719.2 322.8 721.9 332.6 723.0 335.6"/><path d="M766.9 241.0C768.2 244.0 770.8 252.6 774.8 259.0C778.7 265.4 784.2 272.5 790.5 279.3C796.9 286.0 803.3 293.2 813.0 299.5C822.8 305.9 836.7 312.7 849.1 317.5C861.5 322.4 874.6 323.5 887.3 328.8C900.1 334.1 913.6 344.0 925.6 349.1C937.6 354.1 948.1 356.8 959.4 359.2C970.6 361.6 981.5 362.6 993.1 363.7C1004.8 364.8 1015.4 363.5 1029.2 365.9C1043.0 368.4 1068.2 376.3 1076.0 378.3"/><path d="M824.3 241.0C824.7 242.5 824.3 247.8 826.6 250.0C828.8 252.3 836.3 251.1 837.8 254.5C839.3 257.9 838.9 262.8 835.6 270.3C832.2 277.8 823.6 289.4 817.6 299.5C811.5 309.7 802.9 324.3 799.5 331.0C796.2 337.8 793.5 334.8 797.3 340.1C801.0 345.3 816.4 355.8 822.1 362.6C827.7 369.3 830.3 372.3 831.1 380.6C831.8 388.8 829.9 402.3 826.6 412.1C823.2 421.8 815.7 430.9 810.8 439.1C805.9 447.4 799.9 455.8 797.3 461.6C794.7 467.4 795.4 471.9 795.0 474.0"/><path d="M790.5 279.3C790.9 284.1 792.0 299.9 792.8 308.5C793.5 317.2 794.1 325.8 795.0 331.0C796.0 336.3 797.9 338.6 798.4 340.1"/><path d="M1037.7 241.0C1037.6 246.6 1037.1 264.6 1036.8 274.8C1036.5 284.9 1036.6 291.7 1035.9 301.8C1035.2 311.9 1034.0 326.9 1032.5 335.6C1031.0 344.2 1029.7 349.4 1026.9 353.6C1024.1 357.7 1017.5 359.2 1015.7 360.3"/><path d="M1026.9 353.6 L1029.2 365.9"/><path d="M993.1 367.1C990.1 368.9 981.1 373.4 975.1 378.3C969.1 383.2 965.4 390.0 957.1 396.3C948.9 402.7 935.0 410.2 925.6 416.6C916.2 423.0 906.5 428.6 900.8 434.6C895.2 440.6 893.5 446.1 891.8 452.6C890.2 459.2 890.9 470.4 890.7 474.0"/><path d="M723.0 337.8C724.5 341.2 728.3 350.9 732.0 358.1C735.8 365.2 742.3 373.1 745.5 380.6C748.7 388.1 750.4 394.1 751.1 403.1C751.9 412.1 750.2 429.4 750.0 434.6"/><path d="M577.1 474.0C578.2 478.1 581.2 492.4 583.9 498.8C586.5 505.1 592.5 506.6 592.9 512.3C593.2 517.9 589.5 524.7 586.1 532.5C582.7 540.4 576.7 549.8 572.6 559.5C568.5 569.3 565.5 584.3 561.4 591.1C557.2 597.8 551.6 595.6 547.8 600.1C544.1 604.6 540.0 611.3 538.8 618.1C537.7 624.8 539.6 633.8 541.1 640.6C542.6 647.3 547.1 652.6 547.8 658.6C548.6 664.6 547.5 669.9 545.6 676.6C543.7 683.4 539.6 694.1 536.6 699.1C533.6 704.2 529.1 705.7 527.6 707.0"/><path d="M592.9 512.3C595.5 512.6 605.8 513.4 608.6 514.5C611.4 515.6 609.6 518.3 609.8 519.0"/><path d="M547.8 600.1C555.7 598.2 582.4 592.2 595.1 588.8C607.9 585.4 613.1 583.2 624.4 579.8C635.6 576.4 656.3 570.4 662.7 568.6"/><path d="M890.7 474.0C890.3 476.3 892.4 481.9 888.5 487.5C884.5 493.1 871.6 501.4 867.1 507.8C862.6 514.1 862.6 519.8 861.5 525.8C860.3 531.8 865.8 538.5 860.3 543.8C854.9 549.0 836.7 552.0 828.8 557.3C820.9 562.5 817.9 568.2 813.0 575.3C808.2 582.4 801.8 595.9 799.5 600.1"/><path d="M792.8 474.0C793.2 480.8 794.3 501.0 795.0 514.5C795.8 528.0 798.0 546.0 797.3 555.0C796.5 564.0 791.7 566.3 790.5 568.6"/><path d="M1038.2 480.8C1035.5 486.0 1027.7 502.1 1022.4 512.3C1017.2 522.4 1011.9 531.4 1006.7 541.5C1001.4 551.7 994.6 564.0 990.9 573.1C987.1 582.1 984.5 587.3 984.1 595.6C983.8 603.8 986.4 613.6 988.6 622.6C990.9 631.6 996.3 643.2 997.7 649.6C999.0 656.0 996.7 659.0 996.5 660.9"/><path d="M518.6 707.0C514.8 711.5 504.3 723.5 496.1 734.0C487.8 744.5 478.8 756.9 469.1 770.0C459.3 783.2 447.3 799.3 437.5 812.8C427.8 826.3 418.4 840.6 410.5 851.1C402.6 861.6 394.8 869.1 390.3 875.8C385.8 882.6 383.5 886.0 383.5 891.6C383.5 897.2 388.8 901.5 390.3 909.6C391.8 917.7 392.1 934.9 392.5 940.0"/><path d="M545.6 707.0C548.6 708.1 558.4 710.0 563.6 713.8C568.9 717.5 573.4 724.3 577.1 729.5C580.9 734.8 581.6 741.1 586.1 745.3C590.6 749.4 593.6 753.0 604.1 754.3C614.6 755.6 640.1 751.6 649.2 753.2C658.2 754.7 658.9 759.7 658.2 763.3C657.4 766.8 649.9 768.9 644.7 774.5C639.4 780.2 632.6 789.9 626.6 797.0C620.6 804.2 615.8 811.3 608.6 817.3C601.5 823.3 594.4 826.7 583.9 833.1C573.4 839.4 557.2 848.8 545.6 855.6C534.0 862.3 519.3 870.6 514.1 873.6"/><path d="M658.2 763.3C660.4 762.2 670.9 759.2 671.7 756.5C672.4 753.9 666.0 749.8 662.7 747.5C659.3 745.3 653.3 743.8 651.4 743.0"/><path d="M671.7 761.0C675.4 762.9 685.6 769.7 694.2 772.3C702.7 774.9 718.2 776.0 723.0 776.8"/><path d="M720.1 729.5C720.3 737.0 721.4 760.3 721.2 774.5C721.0 788.8 718.8 800.4 718.9 815.1C719.1 829.7 723.4 853.3 722.3 862.3C721.2 871.3 715.4 862.0 712.2 869.1C709.0 876.2 707.7 893.3 703.2 905.1C698.7 916.9 688.2 934.2 685.2 940.0"/><path d="M723.0 779.0C725.3 779.8 731.6 780.5 736.5 783.5C741.4 786.5 745.5 793.7 752.3 797.0C759.0 800.4 766.9 803.6 777.0 803.8C787.2 804.0 802.5 799.7 813.0 798.2C823.6 796.7 833.7 797.6 840.1 794.8C846.4 792.0 849.1 786.9 851.3 781.3C853.6 775.7 853.8 767.8 853.6 761.0C853.4 754.3 851.3 748.3 850.2 740.8C849.1 733.3 845.5 721.6 846.8 716.0C848.1 710.4 856.2 708.5 858.1 707.0"/><path d="M840.1 794.8C841.6 798.2 845.3 808.3 849.1 815.1C852.8 821.8 857.3 829.3 862.6 835.3C867.8 841.3 873.8 845.1 880.6 851.1C887.3 857.1 895.6 865.0 903.1 871.3C910.6 877.7 919.6 884.8 925.6 889.4C931.6 893.9 934.2 896.1 939.1 898.4C944.0 900.6 951.5 900.2 954.9 902.9C958.3 905.5 958.6 907.9 959.4 914.1C960.1 920.3 959.4 935.7 959.4 940.0"/><path d="M846.8 716.0C852.4 721.3 869.7 736.6 880.6 747.5C891.5 758.4 902.3 769.7 912.1 781.3C921.9 792.9 929.4 805.7 939.1 817.3C948.9 828.9 961.6 840.9 970.6 851.1C979.6 861.2 984.9 868.3 993.1 878.1C1001.4 887.8 1012.7 901.7 1020.2 909.6C1027.7 917.5 1034.8 920.3 1038.2 925.4C1041.6 930.4 1040.0 937.6 1040.4 940.0"/><path d="M849.1 716.0C854.3 717.9 874.6 723.9 880.6 727.3C886.6 730.6 885.8 733.6 885.1 736.3C884.3 738.9 877.6 741.9 876.1 743.0"/><path d="M723.0 851.1C724.1 856.3 726.8 871.7 729.8 882.6C732.8 893.5 737.6 906.8 741.0 916.4C744.4 925.9 748.5 936.1 750.0 940.0"/></g><g stroke="#ccd6eb" stroke-width="1.15"><path d="M474.7 241.0C474.1 246.6 472.2 262.4 471.3 274.8C470.4 287.2 467.9 305.2 469.1 315.3C470.2 325.4 475.1 329.9 478.1 335.6C481.1 341.2 485.9 345.1 487.1 349.1C488.3 353.0 484.5 355.4 485.3 359.2C486.0 362.9 484.5 365.4 491.6 371.6C498.6 377.8 519.3 389.6 527.6 396.3C535.8 403.1 536.2 403.5 541.1 412.1C546.0 420.7 552.7 437.8 556.9 448.1C561.0 458.4 564.4 469.7 565.9 474.0"/><path d="M553.5 241.0C556.7 246.3 567.2 261.3 572.6 272.5C578.1 283.8 582.7 298.0 586.1 308.5C589.5 319.0 591.0 327.3 592.9 335.6C594.7 343.8 594.0 349.8 597.4 358.1C600.8 366.3 607.9 376.8 613.1 385.1C618.4 393.3 624.8 399.3 628.9 407.6C633.0 415.8 634.1 426.4 637.9 434.6C641.6 442.9 648.0 450.6 651.4 457.1C654.8 463.7 657.0 471.2 658.2 474.0"/><path d="M631.1 241.0C637.5 244.0 658.5 252.3 669.4 259.0C680.3 265.8 690.1 274.0 696.4 281.5C702.8 289.0 704.3 298.0 707.7 304.0C711.1 310.0 714.1 312.3 716.7 317.5C719.2 322.8 721.9 332.6 723.0 335.6"/><path d="M766.9 241.0C768.2 244.0 770.8 252.6 774.8 259.0C778.7 265.4 784.2 272.5 790.5 279.3C796.9 286.0 803.3 293.2 813.0 299.5C822.8 305.9 836.7 312.7 849.1 317.5C861.5 322.4 874.6 323.5 887.3 328.8C900.1 334.1 913.6 344.0 925.6 349.1C937.6 354.1 948.1 356.8 959.4 359.2C970.6 361.6 981.5 362.6 993.1 363.7C1004.8 364.8 1015.4 363.5 1029.2 365.9C1043.0 368.4 1068.2 376.3 1076.0 378.3"/><path d="M824.3 241.0C824.7 242.5 824.3 247.8 826.6 250.0C828.8 252.3 836.3 251.1 837.8 254.5C839.3 257.9 838.9 262.8 835.6 270.3C832.2 277.8 823.6 289.4 817.6 299.5C811.5 309.7 802.9 324.3 799.5 331.0C796.2 337.8 793.5 334.8 797.3 340.1C801.0 345.3 816.4 355.8 822.1 362.6C827.7 369.3 830.3 372.3 831.1 380.6C831.8 388.8 829.9 402.3 826.6 412.1C823.2 421.8 815.7 430.9 810.8 439.1C805.9 447.4 799.9 455.8 797.3 461.6C794.7 467.4 795.4 471.9 795.0 474.0"/><path d="M790.5 279.3C790.9 284.1 792.0 299.9 792.8 308.5C793.5 317.2 794.1 325.8 795.0 331.0C796.0 336.3 797.9 338.6 798.4 340.1"/><path d="M1037.7 241.0C1037.6 246.6 1037.1 264.6 1036.8 274.8C1036.5 284.9 1036.6 291.7 1035.9 301.8C1035.2 311.9 1034.0 326.9 1032.5 335.6C1031.0 344.2 1029.7 349.4 1026.9 353.6C1024.1 357.7 1017.5 359.2 1015.7 360.3"/><path d="M1026.9 353.6 L1029.2 365.9"/><path d="M993.1 367.1C990.1 368.9 981.1 373.4 975.1 378.3C969.1 383.2 965.4 390.0 957.1 396.3C948.9 402.7 935.0 410.2 925.6 416.6C916.2 423.0 906.5 428.6 900.8 434.6C895.2 440.6 893.5 446.1 891.8 452.6C890.2 459.2 890.9 470.4 890.7 474.0"/><path d="M723.0 337.8C724.5 341.2 728.3 350.9 732.0 358.1C735.8 365.2 742.3 373.1 745.5 380.6C748.7 388.1 750.4 394.1 751.1 403.1C751.9 412.1 750.2 429.4 750.0 434.6"/><path d="M577.1 474.0C578.2 478.1 581.2 492.4 583.9 498.8C586.5 505.1 592.5 506.6 592.9 512.3C593.2 517.9 589.5 524.7 586.1 532.5C582.7 540.4 576.7 549.8 572.6 559.5C568.5 569.3 565.5 584.3 561.4 591.1C557.2 597.8 551.6 595.6 547.8 600.1C544.1 604.6 540.0 611.3 538.8 618.1C537.7 624.8 539.6 633.8 541.1 640.6C542.6 647.3 547.1 652.6 547.8 658.6C548.6 664.6 547.5 669.9 545.6 676.6C543.7 683.4 539.6 694.1 536.6 699.1C533.6 704.2 529.1 705.7 527.6 707.0"/><path d="M592.9 512.3C595.5 512.6 605.8 513.4 608.6 514.5C611.4 515.6 609.6 518.3 609.8 519.0"/><path d="M547.8 600.1C555.7 598.2 582.4 592.2 595.1 588.8C607.9 585.4 613.1 583.2 624.4 579.8C635.6 576.4 656.3 570.4 662.7 568.6"/><path d="M890.7 474.0C890.3 476.3 892.4 481.9 888.5 487.5C884.5 493.1 871.6 501.4 867.1 507.8C862.6 514.1 862.6 519.8 861.5 525.8C860.3 531.8 865.8 538.5 860.3 543.8C854.9 549.0 836.7 552.0 828.8 557.3C820.9 562.5 817.9 568.2 813.0 575.3C808.2 582.4 801.8 595.9 799.5 600.1"/><path d="M792.8 474.0C793.2 480.8 794.3 501.0 795.0 514.5C795.8 528.0 798.0 546.0 797.3 555.0C796.5 564.0 791.7 566.3 790.5 568.6"/><path d="M1038.2 480.8C1035.5 486.0 1027.7 502.1 1022.4 512.3C1017.2 522.4 1011.9 531.4 1006.7 541.5C1001.4 551.7 994.6 564.0 990.9 573.1C987.1 582.1 984.5 587.3 984.1 595.6C983.8 603.8 986.4 613.6 988.6 622.6C990.9 631.6 996.3 643.2 997.7 649.6C999.0 656.0 996.7 659.0 996.5 660.9"/><path d="M518.6 707.0C514.8 711.5 504.3 723.5 496.1 734.0C487.8 744.5 478.8 756.9 469.1 770.0C459.3 783.2 447.3 799.3 437.5 812.8C427.8 826.3 418.4 840.6 410.5 851.1C402.6 861.6 394.8 869.1 390.3 875.8C385.8 882.6 383.5 886.0 383.5 891.6C383.5 897.2 388.8 901.5 390.3 909.6C391.8 917.7 392.1 934.9 392.5 940.0"/><path d="M545.6 707.0C548.6 708.1 558.4 710.0 563.6 713.8C568.9 717.5 573.4 724.3 577.1 729.5C580.9 734.8 581.6 741.1 586.1 745.3C590.6 749.4 593.6 753.0 604.1 754.3C614.6 755.6 640.1 751.6 649.2 753.2C658.2 754.7 658.9 759.7 658.2 763.3C657.4 766.8 649.9 768.9 644.7 774.5C639.4 780.2 632.6 789.9 626.6 797.0C620.6 804.2 615.8 811.3 608.6 817.3C601.5 823.3 594.4 826.7 583.9 833.1C573.4 839.4 557.2 848.8 545.6 855.6C534.0 862.3 519.3 870.6 514.1 873.6"/><path d="M658.2 763.3C660.4 762.2 670.9 759.2 671.7 756.5C672.4 753.9 666.0 749.8 662.7 747.5C659.3 745.3 653.3 743.8 651.4 743.0"/><path d="M671.7 761.0C675.4 762.9 685.6 769.7 694.2 772.3C702.7 774.9 718.2 776.0 723.0 776.8"/><path d="M720.1 729.5C720.3 737.0 721.4 760.3 721.2 774.5C721.0 788.8 718.8 800.4 718.9 815.1C719.1 829.7 723.4 853.3 722.3 862.3C721.2 871.3 715.4 862.0 712.2 869.1C709.0 876.2 707.7 893.3 703.2 905.1C698.7 916.9 688.2 934.2 685.2 940.0"/><path d="M723.0 779.0C725.3 779.8 731.6 780.5 736.5 783.5C741.4 786.5 745.5 793.7 752.3 797.0C759.0 800.4 766.9 803.6 777.0 803.8C787.2 804.0 802.5 799.7 813.0 798.2C823.6 796.7 833.7 797.6 840.1 794.8C846.4 792.0 849.1 786.9 851.3 781.3C853.6 775.7 853.8 767.8 853.6 761.0C853.4 754.3 851.3 748.3 850.2 740.8C849.1 733.3 845.5 721.6 846.8 716.0C848.1 710.4 856.2 708.5 858.1 707.0"/><path d="M840.1 794.8C841.6 798.2 845.3 808.3 849.1 815.1C852.8 821.8 857.3 829.3 862.6 835.3C867.8 841.3 873.8 845.1 880.6 851.1C887.3 857.1 895.6 865.0 903.1 871.3C910.6 877.7 919.6 884.8 925.6 889.4C931.6 893.9 934.2 896.1 939.1 898.4C944.0 900.6 951.5 900.2 954.9 902.9C958.3 905.5 958.6 907.9 959.4 914.1C960.1 920.3 959.4 935.7 959.4 940.0"/><path d="M846.8 716.0C852.4 721.3 869.7 736.6 880.6 747.5C891.5 758.4 902.3 769.7 912.1 781.3C921.9 792.9 929.4 805.7 939.1 817.3C948.9 828.9 961.6 840.9 970.6 851.1C979.6 861.2 984.9 868.3 993.1 878.1C1001.4 887.8 1012.7 901.7 1020.2 909.6C1027.7 917.5 1034.8 920.3 1038.2 925.4C1041.6 930.4 1040.0 937.6 1040.4 940.0"/><path d="M849.1 716.0C854.3 717.9 874.6 723.9 880.6 727.3C886.6 730.6 885.8 733.6 885.1 736.3C884.3 738.9 877.6 741.9 876.1 743.0"/><path d="M723.0 851.1C724.1 856.3 726.8 871.7 729.8 882.6C732.8 893.5 737.6 906.8 741.0 916.4C744.4 925.9 748.5 936.1 750.0 940.0"/></g></g><g fill="none" stroke="#6d7a74" stroke-width="1" stroke-dasharray="1.6 2.6"><path d="M435.3 326.1 L510.7 327.7 L507.3 291.7 L544.5 288.3 L544.5 254.5 L541.1 241.0"/><path d="M573.7 256.8 L586.1 283.8"/><path d="M577.1 327.7 L595.1 325.4 L633.4 340.1 L660.4 340.1 L703.2 324.3 L707.7 306.3 L723.0 301.8"/><path d="M370.0 425.6 L406.0 442.5 L430.8 440.2 L429.0 418.8 L415.0 403.1 L401.5 389.6 L403.8 376.1 L421.8 353.6 L435.3 326.1"/><path d="M572.6 254.5 L588.4 241.0"/><path d="M723.0 299.5 L732.0 274.8 L742.1 269.1 L761.3 283.8 L788.3 299.5 L804.0 298.4 L806.3 279.3 L815.3 265.8 L840.1 268.0 L862.6 261.3 L876.1 250.0 L871.6 241.0"/><path d="M899.7 241.0 L925.6 265.8 L939.1 274.8 L954.9 273.6 L959.4 279.3 L952.6 317.5 L932.4 331.0 L927.9 349.1 L923.4 358.1 L915.5 387.3 L934.6 427.9 L961.6 427.9 L993.1 439.1 L1015.7 452.6 L1033.7 474.0"/><path d="M1033.7 474.0 L1038.2 480.8 L1060.7 487.5 L1067.4 519.0 L1074.2 550.5"/><path d="M370.0 940.0 L392.5 934.4 L415.0 929.9 L439.8 918.6 L478.1 917.5 L482.6 940.0"/><path d="M801.8 940.0 L844.6 920.9 L862.6 920.9 L869.3 932.1"/></g><text x="357.6" y="310.0" font-size="12.6" textLength="78.4" lengthAdjust="spacingAndGlyphs" fill="#fff" stroke="#fff" stroke-width="2.8" stroke-linejoin="round">Hennigsdorf</text><text x="357.6" y="310.0" font-size="12.6" textLength="78.4" lengthAdjust="spacingAndGlyphs" fill="#3c4043" stroke="#3c4043" stroke-width=".25">Hennigsdorf</text><text transform="translate(456.5,314) rotate(-44)" font-size="14.2" textLength="123" lengthAdjust="spacing" fill="#fff" stroke="#fff" stroke-width="3" stroke-linejoin="round">BRANDEBOURG</text><text transform="translate(456.5,314) rotate(-44)" font-size="14.2" textLength="123" lengthAdjust="spacing" fill="#3c4043" stroke="#3c4043" stroke-width=".45">BRANDEBOURG</text><text transform="translate(523,337.5) rotate(-45)" font-size="14.2" textLength="56" lengthAdjust="spacing" fill="#fff" stroke="#fff" stroke-width="3" stroke-linejoin="round">BERLIN</text><text transform="translate(523,337.5) rotate(-45)" font-size="14.2" textLength="56" lengthAdjust="spacing" fill="#3c4043" stroke="#3c4043" stroke-width=".45">BERLIN</text><text x="588.4" y="309.5" font-size="12.6" textLength="63.0" lengthAdjust="spacingAndGlyphs" fill="#fff" stroke="#fff" stroke-width="2.8" stroke-linejoin="round">Glienicke/</text><text x="588.4" y="309.5" font-size="12.6" textLength="63.0" lengthAdjust="spacingAndGlyphs" fill="#3c4043" stroke="#3c4043" stroke-width=".25">Glienicke/</text><text x="588.4" y="323.5" font-size="12.6" textLength="62.6" lengthAdjust="spacingAndGlyphs" fill="#fff" stroke="#fff" stroke-width="2.8" stroke-linejoin="round">Nordbahn</text><text x="588.4" y="323.5" font-size="12.6" textLength="62.6" lengthAdjust="spacingAndGlyphs" fill="#3c4043" stroke="#3c4043" stroke-width=".25">Nordbahn</text><text x="392.5" y="374.0" font-size="9.6" textLength="123.0" lengthAdjust="spacing" fill="#fff" stroke="#fff" stroke-width="2.6" stroke-linejoin="round">BERLIN-HEILIGENSEE</text><text x="392.5" y="374.0" font-size="9.6" textLength="123.0" lengthAdjust="spacing" fill="#53575d" stroke="#53575d" stroke-width=".35">BERLIN-HEILIGENSEE</text><text x="523.0" y="368.8" font-size="9.6" textLength="118.5" lengthAdjust="spacing" fill="#fff" stroke="#fff" stroke-width="2.6" stroke-linejoin="round">BERLIN-HERMSDORF</text><text x="523.0" y="368.8" font-size="9.6" textLength="118.5" lengthAdjust="spacing" fill="#53575d" stroke="#53575d" stroke-width=".35">BERLIN-HERMSDORF</text><text x="576.0" y="422.8" font-size="9.6" textLength="108.0" lengthAdjust="spacing" fill="#fff" stroke="#fff" stroke-width="2.6" stroke-linejoin="round">BERLIN-WITTENAU</text><text x="576.0" y="422.8" font-size="9.6" textLength="108.0" lengthAdjust="spacing" fill="#53575d" stroke="#53575d" stroke-width=".35">BERLIN-WITTENAU</text><text x="483.7" y="464.7" font-size="9.6" textLength="108.3" lengthAdjust="spacing" fill="#fff" stroke="#fff" stroke-width="2.6" stroke-linejoin="round">ARRONDISSEMENT</text><text x="483.7" y="464.7" font-size="9.6" textLength="108.3" lengthAdjust="spacing" fill="#53575d" stroke="#53575d" stroke-width=".35">ARRONDISSEMENT</text><text x="482.6" y="475.3" font-size="9.6" textLength="112.9" lengthAdjust="spacing" fill="#fff" stroke="#fff" stroke-width="2.6" stroke-linejoin="round">DE REINICKENDORF</text><text x="482.6" y="475.3" font-size="9.6" textLength="112.9" lengthAdjust="spacing" fill="#53575d" stroke="#53575d" stroke-width=".35">DE REINICKENDORF</text><text x="876.0" y="291.5" font-size="9.6" textLength="78.0" lengthAdjust="spacing" fill="#fff" stroke="#fff" stroke-width="2.6" stroke-linejoin="round">BERLIN-BUCH</text><text x="876.0" y="291.5" font-size="9.6" textLength="78.0" lengthAdjust="spacing" fill="#53575d" stroke="#53575d" stroke-width=".35">BERLIN-BUCH</text><text x="964.0" y="265.3" font-size="12.6" textLength="54.4" lengthAdjust="spacingAndGlyphs" fill="#fff" stroke="#fff" stroke-width="2.8" stroke-linejoin="round">Panketal</text><text x="964.0" y="265.3" font-size="12.6" textLength="54.4" lengthAdjust="spacingAndGlyphs" fill="#3c4043" stroke="#3c4043" stroke-width=".25">Panketal</text><text x="747.8" y="425.0" font-size="9.6" textLength="107.0" lengthAdjust="spacing" fill="#fff" stroke="#fff" stroke-width="2.6" stroke-linejoin="round">ARRONDISSEMENT</text><text x="747.8" y="425.0" font-size="9.6" textLength="107.0" lengthAdjust="spacing" fill="#53575d" stroke="#53575d" stroke-width=".35">ARRONDISSEMENT</text><text x="767.0" y="435.9" font-size="9.6" textLength="68.8" lengthAdjust="spacing" fill="#fff" stroke="#fff" stroke-width="2.6" stroke-linejoin="round">DE PANKOW</text><text x="767.0" y="435.9" font-size="9.6" textLength="68.8" lengthAdjust="spacing" fill="#53575d" stroke="#53575d" stroke-width=".35">DE PANKOW</text><text x="1013.4" y="463.5" font-size="12.6" textLength="76.6" lengthAdjust="spacingAndGlyphs" fill="#fff" stroke="#fff" stroke-width="2.8" stroke-linejoin="round">Ahrensfelde</text><text x="1013.4" y="463.5" font-size="12.6" textLength="76.6" lengthAdjust="spacingAndGlyphs" fill="#3c4043" stroke="#3c4043" stroke-width=".25">Ahrensfelde</text><text transform="translate(440,485) rotate(80)" font-size="10" fill="#5b84b8" stroke="#fff" stroke-width="2" paint-order="stroke" font-style="italic">Havel</text><text x="318.0" y="537.2" font-size="9.6" textLength="98.4" lengthAdjust="spacing" fill="#fff" stroke="#fff" stroke-width="2.6" stroke-linejoin="round">FALKENHAGENER</text><text x="318.0" y="537.2" font-size="9.6" textLength="98.4" lengthAdjust="spacing" fill="#53575d" stroke="#53575d" stroke-width=".35">FALKENHAGENER</text><text x="389.8" y="562.7" font-size="9.6" textLength="123.4" lengthAdjust="spacing" fill="#fff" stroke="#fff" stroke-width="2.6" stroke-linejoin="round">BERLIN-HASELHORST</text><text x="389.8" y="562.7" font-size="9.6" textLength="123.4" lengthAdjust="spacing" fill="#53575d" stroke="#53575d" stroke-width=".35">BERLIN-HASELHORST</text><text x="347.4" y="590.1" font-size="9.6" textLength="105.0" lengthAdjust="spacing" fill="#fff" stroke="#fff" stroke-width="2.6" stroke-linejoin="round">ARRONDISSEMENT</text><text x="347.4" y="590.1" font-size="9.6" textLength="105.0" lengthAdjust="spacing" fill="#53575d" stroke="#53575d" stroke-width=".35">ARRONDISSEMENT</text><text x="362.4" y="600.9" font-size="9.6" textLength="74.2" lengthAdjust="spacing" fill="#fff" stroke="#fff" stroke-width="2.6" stroke-linejoin="round">DE SPANDAU</text><text x="362.4" y="600.9" font-size="9.6" textLength="74.2" lengthAdjust="spacing" fill="#53575d" stroke="#53575d" stroke-width=".35">DE SPANDAU</text><text x="501.0" y="648.7" font-size="9.6" textLength="157.4" lengthAdjust="spacing" fill="#fff" stroke="#fff" stroke-width="2.6" stroke-linejoin="round">BERLIN-CHARLOTTENBURG</text><text x="501.0" y="648.7" font-size="9.6" textLength="157.4" lengthAdjust="spacing" fill="#53575d" stroke="#53575d" stroke-width=".35">BERLIN-CHARLOTTENBURG</text><text x="439.8" y="675.5" font-size="9.6" textLength="106.2" lengthAdjust="spacing" fill="#fff" stroke="#fff" stroke-width="2.6" stroke-linejoin="round">ARRONDISSEMENT</text><text x="439.8" y="675.5" font-size="9.6" textLength="106.2" lengthAdjust="spacing" fill="#53575d" stroke="#53575d" stroke-width=".35">ARRONDISSEMENT</text><text x="402.6" y="686.5" font-size="9.6" textLength="198.4" lengthAdjust="spacing" fill="#fff" stroke="#fff" stroke-width="2.6" stroke-linejoin="round">CHARLOTTENBURG-WILMERSDORF</text><text x="402.6" y="686.5" font-size="9.6" textLength="198.4" lengthAdjust="spacing" fill="#53575d" stroke="#53575d" stroke-width=".35">CHARLOTTENBURG-WILMERSDORF</text><text x="639.0" y="546.2" font-size="9.6" textLength="140.0" lengthAdjust="spacing" fill="#fff" stroke="#fff" stroke-width="2.6" stroke-linejoin="round">BERLIN-GESUNDBRUNNEN</text><text x="639.0" y="546.2" font-size="9.6" textLength="140.0" lengthAdjust="spacing" fill="#53575d" stroke="#53575d" stroke-width=".35">BERLIN-GESUNDBRUNNEN</text><text x="623.0" y="584.1" font-size="9.6" textLength="108.0" lengthAdjust="spacing" fill="#fff" stroke="#fff" stroke-width="2.6" stroke-linejoin="round">ARRONDISSEMENT</text><text x="623.0" y="584.1" font-size="9.6" textLength="108.0" lengthAdjust="spacing" fill="#53575d" stroke="#53575d" stroke-width=".35">ARRONDISSEMENT</text><text x="650.0" y="594.7" font-size="9.6" textLength="58.0" lengthAdjust="spacing" fill="#fff" stroke="#fff" stroke-width="2.6" stroke-linejoin="round">DE MITTE</text><text x="650.0" y="594.7" font-size="9.6" textLength="58.0" lengthAdjust="spacing" fill="#53575d" stroke="#53575d" stroke-width=".35">DE MITTE</text><text x="797.4" y="542.3" font-size="9.6" textLength="126.8" lengthAdjust="spacing" fill="#fff" stroke="#fff" stroke-width="2.6" stroke-linejoin="round">BERLIN-WEISSENSEE</text><text x="797.4" y="542.3" font-size="9.6" textLength="126.8" lengthAdjust="spacing" fill="#53575d" stroke="#53575d" stroke-width=".35">BERLIN-WEISSENSEE</text><text x="866.0" y="594.7" font-size="9.6" textLength="107.2" lengthAdjust="spacing" fill="#fff" stroke="#fff" stroke-width="2.6" stroke-linejoin="round">ARRONDISSEMENT</text><text x="866.0" y="594.7" font-size="9.6" textLength="107.2" lengthAdjust="spacing" fill="#53575d" stroke="#53575d" stroke-width=".35">ARRONDISSEMENT</text><text x="869.3" y="605.5" font-size="9.6" textLength="101.1" lengthAdjust="spacing" fill="#fff" stroke="#fff" stroke-width="2.6" stroke-linejoin="round">DE LICHTENBERG</text><text x="869.3" y="605.5" font-size="9.6" textLength="101.1" lengthAdjust="spacing" fill="#53575d" stroke="#53575d" stroke-width=".35">DE LICHTENBERG</text><text x="1018.0" y="601.8" font-size="9.6" textLength="124.0" lengthAdjust="spacing" fill="#fff" stroke="#fff" stroke-width="2.6" stroke-linejoin="round">BERLIN-HELLERSDORF</text><text x="1018.0" y="601.8" font-size="9.6" textLength="124.0" lengthAdjust="spacing" fill="#53575d" stroke="#53575d" stroke-width=".35">BERLIN-HELLERSDORF</text><text x="988.6" y="625.5" font-size="9.6" textLength="111.4" lengthAdjust="spacing" fill="#fff" stroke="#fff" stroke-width="2.6" stroke-linejoin="round">ARRONDISSEMENT</text><text x="988.6" y="625.5" font-size="9.6" textLength="111.4" lengthAdjust="spacing" fill="#53575d" stroke="#53575d" stroke-width=".35">ARRONDISSEMENT</text><text x="980.8" y="636.3" font-size="9.6" textLength="150.7" lengthAdjust="spacing" fill="#fff" stroke="#fff" stroke-width="2.6" stroke-linejoin="round">MARZAHN-HELLERSDORF</text><text x="980.8" y="636.3" font-size="9.6" textLength="150.7" lengthAdjust="spacing" fill="#53575d" stroke="#53575d" stroke-width=".35">MARZAHN-HELLERSDORF</text><text x="700.2" y="701.2" font-size="9.6" textLength="115.2" lengthAdjust="spacing" fill="#fff" stroke="#fff" stroke-width="2.6" stroke-linejoin="round">BERLIN-KREUZBERG</text><text x="700.2" y="701.2" font-size="9.6" textLength="115.2" lengthAdjust="spacing" fill="#53575d" stroke="#53575d" stroke-width=".35">BERLIN-KREUZBERG</text><text x="614.0" y="724.2" font-size="9.6" textLength="126.0" lengthAdjust="spacing" fill="#fff" stroke="#fff" stroke-width="2.6" stroke-linejoin="round">BERLIN-SCHÖNEBERG</text><text x="614.0" y="724.2" font-size="9.6" textLength="126.0" lengthAdjust="spacing" fill="#53575d" stroke="#53575d" stroke-width=".35">BERLIN-SCHÖNEBERG</text><text x="1060.7" y="682.5" font-size="9.6" textLength="109.3" lengthAdjust="spacing" fill="#fff" stroke="#fff" stroke-width="2.6" stroke-linejoin="round">BERLIN-KAULSDORF</text><text x="1060.7" y="682.5" font-size="9.6" textLength="109.3" lengthAdjust="spacing" fill="#53575d" stroke="#53575d" stroke-width=".35">BERLIN-KAULSDORF</text><text x="371.0" y="735.3" font-size="9.6" textLength="41.4" lengthAdjust="spacing" fill="#fff" stroke="#fff" stroke-width="2.6" stroke-linejoin="round">GATOW</text><text x="371.0" y="735.3" font-size="9.6" textLength="41.4" lengthAdjust="spacing" fill="#53575d" stroke="#53575d" stroke-width=".35">GATOW</text><text x="453.3" y="743.8" font-size="9.6" textLength="119.5" lengthAdjust="spacing" fill="#fff" stroke="#fff" stroke-width="2.6" stroke-linejoin="round">BERLIN-GRUNEWALD</text><text x="453.3" y="743.8" font-size="9.6" textLength="119.5" lengthAdjust="spacing" fill="#53575d" stroke="#53575d" stroke-width=".35">BERLIN-GRUNEWALD</text><text x="649.8" y="792.7" font-size="9.6" textLength="117.4" lengthAdjust="spacing" fill="#fff" stroke="#fff" stroke-width="2.6" stroke-linejoin="round">BERLIN-TEMPELHOF</text><text x="649.8" y="792.7" font-size="9.6" textLength="117.4" lengthAdjust="spacing" fill="#53575d" stroke="#53575d" stroke-width=".35">BERLIN-TEMPELHOF</text><text x="576.0" y="829.8" font-size="9.6" textLength="102.2" lengthAdjust="spacing" fill="#fff" stroke="#fff" stroke-width="2.6" stroke-linejoin="round">BERLIN-STEGLITZ</text><text x="576.0" y="829.8" font-size="9.6" textLength="102.2" lengthAdjust="spacing" fill="#53575d" stroke="#53575d" stroke-width=".35">BERLIN-STEGLITZ</text><text x="442.0" y="881.5" font-size="9.6" textLength="123.6" lengthAdjust="spacing" fill="#fff" stroke="#fff" stroke-width="2.6" stroke-linejoin="round">BERLIN-ZEHLENDORF</text><text x="442.0" y="881.5" font-size="9.6" textLength="123.6" lengthAdjust="spacing" fill="#53575d" stroke="#53575d" stroke-width=".35">BERLIN-ZEHLENDORF</text><text x="774.8" y="769.5" font-size="9.6" textLength="108.2" lengthAdjust="spacing" fill="#fff" stroke="#fff" stroke-width="2.6" stroke-linejoin="round">BERLIN-NEUKÖLLN</text><text x="774.8" y="769.5" font-size="9.6" textLength="108.2" lengthAdjust="spacing" fill="#53575d" stroke="#53575d" stroke-width=".35">BERLIN-NEUKÖLLN</text><text x="1011.0" y="860.2" font-size="9.6" textLength="107.0" lengthAdjust="spacing" fill="#fff" stroke="#fff" stroke-width="2.6" stroke-linejoin="round">BERLIN-KÖPENICK</text><text x="1011.0" y="860.2" font-size="9.6" textLength="107.0" lengthAdjust="spacing" fill="#53575d" stroke="#53575d" stroke-width=".35">BERLIN-KÖPENICK</text><text x="785.6" y="919.9" font-size="9.6" textLength="136.4" lengthAdjust="spacing" fill="#fff" stroke="#fff" stroke-width="2.6" stroke-linejoin="round">BERLIN-GROPIUSSTADT</text><text x="785.6" y="919.9" font-size="9.6" textLength="136.4" lengthAdjust="spacing" fill="#53575d" stroke="#53575d" stroke-width=".35">BERLIN-GROPIUSSTADT</text><text x="870.5" y="936.3" font-size="9.6" textLength="87.9" lengthAdjust="spacing" fill="#fff" stroke="#fff" stroke-width="2.6" stroke-linejoin="round">BERLIN-RUDOW</text><text x="870.5" y="936.3" font-size="9.6" textLength="87.9" lengthAdjust="spacing" fill="#53575d" stroke="#53575d" stroke-width=".35">BERLIN-RUDOW</text><text x="614.3" y="942.9" font-size="9.6" textLength="125.7" lengthAdjust="spacing" fill="#fff" stroke="#fff" stroke-width="2.6" stroke-linejoin="round">BERLIN-MARIENFELDE</text><text x="614.3" y="942.9" font-size="9.6" textLength="125.7" lengthAdjust="spacing" fill="#53575d" stroke="#53575d" stroke-width=".35">BERLIN-MARIENFELDE</text><text x="1064.6" y="918.5" font-size="9.6" textLength="23.4" lengthAdjust="spacing" fill="#fff" stroke="#fff" stroke-width="2.6" stroke-linejoin="round">ALT-</text><text x="1064.6" y="918.5" font-size="9.6" textLength="23.4" lengthAdjust="spacing" fill="#53575d" stroke="#53575d" stroke-width=".35">ALT-</text><text x="1069.0" y="929.1" font-size="9.6" textLength="51.0" lengthAdjust="spacing" fill="#fff" stroke="#fff" stroke-width="2.6" stroke-linejoin="round">TREPTOW</text><text x="1069.0" y="929.1" font-size="9.6" textLength="51.0" lengthAdjust="spacing" fill="#53575d" stroke="#53575d" stroke-width=".35">TREPTOW</text><text x="722" y="646.4" font-size="24.5" font-weight="700" fill="#1c1c1c" stroke="#fff" stroke-width="2.4" paint-order="stroke" textLength="71" lengthAdjust="spacingAndGlyphs">Berlin</text><rect x="563.6" y="274.3" width="19.1" height="12.9" rx="1.4" fill="#f8d04a" stroke="#e9bd33" stroke-width=".6"/><text x="573.2" y="284.4" font-size="10.4" text-anchor="middle" fill="#2c2c2c">96</text><rect x="636.0" y="443.2" width="20.0" height="14.0" rx="1.4" fill="#f8d04a" stroke="#e9bd33" stroke-width=".6"/><text x="646.0" y="453.9" font-size="10.4" text-anchor="middle" fill="#2c2c2c">96</text><path d="M764.0 253.2H787.0V261.6L785.0 264.0H766.0L764.0 261.6Z" fill="#3f6fbe" stroke="#3461ab" stroke-width=".6"/><text x="775.5" y="261.9" font-size="10.2" font-weight="700" text-anchor="middle" fill="#fff">10</text><path d="M1021.0 312.0H1044.0V321.0L1042.0 323.4H1023.0L1021.0 321.0Z" fill="#3f6fbe" stroke="#3461ab" stroke-width=".6"/><text x="1032.5" y="321.0" font-size="10.2" font-weight="700" text-anchor="middle" fill="#fff">11</text><path d="M993.0 358.0H1016.0V368.2L1014.0 370.6H995.0L993.0 368.2Z" fill="#3f6fbe" stroke="#3461ab" stroke-width=".6"/><text x="1004.5" y="367.6" font-size="10.2" font-weight="700" text-anchor="middle" fill="#fff">10</text><rect x="955.0" y="387.2" width="14.0" height="13.8" rx="1.4" fill="#f8d04a" stroke="#e9bd33" stroke-width=".6"/><text x="962.0" y="397.8" font-size="10.4" text-anchor="middle" fill="#2c2c2c">2</text><rect x="728.0" y="365.2" width="25.4" height="13.2" rx="1.4" fill="#f8d04a" stroke="#e9bd33" stroke-width=".6"/><text x="740.7" y="375.5" font-size="10.4" text-anchor="middle" fill="#2c2c2c">96a</text><path d="M818.0 372.6H843.6V381.2L841.6 383.6H820.0L818.0 381.2Z" fill="#3f6fbe" stroke="#3461ab" stroke-width=".6"/><text x="830.8" y="381.4" font-size="10.2" font-weight="700" text-anchor="middle" fill="#fff">114</text><path d="M531.6 603.2H556.6V612.6L554.6 615.0H533.6L531.6 612.6Z" fill="#3f6fbe" stroke="#3461ab" stroke-width=".6"/><text x="544.1" y="612.4" font-size="10.2" font-weight="700" text-anchor="middle" fill="#fff">100</text><rect x="685.0" y="639.6" width="18.4" height="13.4" rx="1.4" fill="#f8d04a" stroke="#e9bd33" stroke-width=".6"/><text x="694.2" y="650.0" font-size="10.4" text-anchor="middle" fill="#2c2c2c">95</text><rect x="784.0" y="486.4" width="24.0" height="13.6" rx="1.4" fill="#f8d04a" stroke="#e9bd33" stroke-width=".6"/><text x="796.0" y="496.9" font-size="10.4" text-anchor="middle" fill="#2c2c2c">109</text><rect x="984.0" y="554.6" width="26.0" height="13.0" rx="1.4" fill="#f8d04a" stroke="#e9bd33" stroke-width=".6"/><text x="997.0" y="564.8" font-size="10.4" text-anchor="middle" fill="#2c2c2c">158</text><rect x="798.6" y="589.2" width="25.6" height="12.2" rx="1.4" fill="#f8d04a" stroke="#e9bd33" stroke-width=".6"/><text x="811.4" y="599.0" font-size="10.4" text-anchor="middle" fill="#2c2c2c">96a</text><rect x="950.4" y="657.6" width="14.6" height="13.0" rx="1.4" fill="#f8d04a" stroke="#e9bd33" stroke-width=".6"/><text x="957.7" y="667.8" font-size="10.4" text-anchor="middle" fill="#2c2c2c">1</text><path d="M428.0 801.6H454.6V811.2L452.6 813.6H430.0L428.0 811.2Z" fill="#3f6fbe" stroke="#3461ab" stroke-width=".6"/><text x="441.3" y="810.9" font-size="10.2" font-weight="700" text-anchor="middle" fill="#fff">115</text><rect x="561.0" y="836.0" width="14.4" height="14.4" rx="1.4" fill="#f8d04a" stroke="#e9bd33" stroke-width=".6"/><text x="568.2" y="846.9" font-size="10.4" text-anchor="middle" fill="#2c2c2c">1</text><rect x="425.8" y="889.0" width="14.0" height="14.0" rx="1.4" fill="#f8d04a" stroke="#e9bd33" stroke-width=".6"/><text x="432.8" y="899.7" font-size="10.4" text-anchor="middle" fill="#2c2c2c">1</text><rect x="887.2" y="769.6" width="25.6" height="13.0" rx="1.4" fill="#f8d04a" stroke="#e9bd33" stroke-width=".6"/><text x="900.0" y="779.8" font-size="10.4" text-anchor="middle" fill="#2c2c2c">96a</text><path d="M867.0 846.4H893.4V856.2L891.4 858.6H869.0L867.0 856.2Z" fill="#3f6fbe" stroke="#3461ab" stroke-width=".6"/><text x="880.2" y="855.8" font-size="10.2" font-weight="700" text-anchor="middle" fill="#fff">113</text><rect x="980.2" y="872.6" width="25.8" height="12.8" rx="1.4" fill="#f8d04a" stroke="#e9bd33" stroke-width=".6"/><text x="993.1" y="882.7" font-size="10.4" text-anchor="middle" fill="#2c2c2c">96a</text><rect x="716.0" y="875.4" width="22.8" height="12.8" rx="1.4" fill="#f8d04a" stroke="#e9bd33" stroke-width=".6"/><text x="727.4" y="885.5" font-size="10.4" text-anchor="middle" fill="#2c2c2c">96</text><g fill="none" stroke-width="2.6" stroke-linejoin="round" stroke-linecap="round"><path d="M600.0 585.0 L628.0 575.0 L662.4 548.8 L661.0 500.0 L660.5 483.5 L674.0 480.0 L693.2 434.8 L715.8 410.4 L712.3 398.0" stroke="#52b893"/><path d="M654.0 480.5 L675.6 481.5" stroke="#52b893"/><path d="M715.8 410.4 L735.4 420.9 L749.3 434.8 L752.8 459.0 L742.3 462.6 L742.3 487.0 L751.0 494.6 L757.7 498.0 L769.0 517.0" stroke="#52b893"/><path d="M662.4 548.8 L684.6 567.0 L692.0 575.0 L708.4 568.6 L718.3 555.4 L728.0 548.8 L757.7 547.2 L803.7 549.7" stroke="#52b893"/><path d="M779.3 631.6 L797.3 638.3 L828.8 640.6 L833.3 665.4 L844.6 672.1 L849.1 685.6 L862.6 683.4 L880.6 690.1 L896.3 701.4" stroke="#c3cf7c"/><path d="M770.0 628.0 L790.0 636.0 L810.0 640.0 L836.0 650.0" stroke="#c3cf7c"/><path d="M895.8 701.4 L902.0 708.0 L908.0 716.0" stroke="#c3cf7c"/><path d="M690.3 616.4 L692.0 624.6 L695.3 631.2 L697.0 672.3 L705.0 687.0 L713.3 677.2 L723.2 677.2 L718.3 662.4 L734.7 661.6 L744.5 655.8" stroke="#d94bc9"/><path d="M697.0 672.3 L685.4 692.0" stroke="#d94bc9"/><path d="M690.3 616.4 L700.0 612.0" stroke="#d94bc9"/><path d="M555.0 698.0 L629.0 679.0 L641.0 682.0 L654.0 689.5 L685.0 698.6 L689.0 708.0 L705.0 713.0 L713.0 710.0 L728.0 714.0" stroke="#9b7be8"/><path d="M555.0 698.0 L568.0 707.0 L606.0 729.0 L621.0 730.0 L640.0 725.0 L652.0 749.0 L669.0 730.0 L682.0 733.0 L722.0 735.0 L722.0 715.0" stroke="#9b7be8"/><path d="M689.7 707.0 L692.0 711.5 L723.0 713.8" stroke="#9b7be8"/><path d="M760.0 670.0 L770.0 682.0 L788.0 700.0" stroke="#3f6fdb"/></g><path d="M625.6 578.8 C622.6 569.8 612.3 563.6 612.3 553.6 A13.3 13.3 0 1 1 638.9 553.6 C638.9 563.6 628.6 569.8 625.6 578.8Z" fill="#52b893"/><circle cx="625.6" cy="553.6" r="9" fill="#fff"/><g transform="translate(625.6 554.0)" fill="none" stroke="#52b893" stroke-width="1.2" stroke-linejoin="round" stroke-linecap="round"><path d="M-5.6 3.4V-.2Q-5.6 -1.2 -4.6 -1.2H4.6Q5.6 -1.2 5.6 -.2V3.4M-5.6 1.8H5.6"/><path d="M-4 -1.2V-3Q-4 -4 -3 -4H3Q4 -4 4 -3V-1.2"/></g><path d="M682.0 693.6 C679.0 684.6 668.7 675.9 668.7 665.9 A13.3 13.3 0 1 1 695.3 665.9 C695.3 675.9 685.0 684.6 682.0 693.6Z" fill="#d94bc9"/><circle cx="682.0" cy="665.9" r="9" fill="#fff"/><g transform="translate(682.0 666.3)" fill="none" stroke="#d94bc9" stroke-width="1.2" stroke-linejoin="round" stroke-linecap="round"><path d="M-5.6 3.4V-.2Q-5.6 -1.2 -4.6 -1.2H4.6Q5.6 -1.2 5.6 -.2V3.4M-5.6 1.8H5.6"/><path d="M-4 -1.2V-3Q-4 -4 -3 -4H3Q4 -4 4 -3V-1.2"/></g><path d="M838.2 665.7 C835.2 656.7 824.9 650.5 824.9 640.5 A13.3 13.3 0 1 1 851.5 640.5 C851.5 650.5 841.2 656.7 838.2 665.7Z" fill="#c3cf7c"/><circle cx="838.2" cy="640.5" r="9" fill="#fff"/><g transform="translate(838.2 640.9)" fill="none" stroke="#c3cf7c" stroke-width="1.2" stroke-linejoin="round" stroke-linecap="round"><path d="M-5.6 3.4V-.2Q-5.6 -1.2 -4.6 -1.2H4.6Q5.6 -1.2 5.6 -.2V3.4M-5.6 1.8H5.6"/><path d="M-4 -1.2V-3Q-4 -4 -3 -4H3Q4 -4 4 -3V-1.2"/></g><path d="M728.1 715.0 C725.1 706.0 714.8 699.8 714.8 689.8 A13.3 13.3 0 1 1 741.4 689.8 C741.4 699.8 731.1 706.0 728.1 715.0Z" fill="#9b7be8"/><circle cx="728.1" cy="689.8" r="9" fill="#fff"/><g transform="translate(728.1 690.2)" fill="none" stroke="#9b7be8" stroke-width="1.2" stroke-linejoin="round" stroke-linecap="round"><path d="M-5.6 3.4V-.2Q-5.6 -1.2 -4.6 -1.2H4.6Q5.6 -1.2 5.6 -.2V3.4M-5.6 1.8H5.6"/><path d="M-4 -1.2V-3Q-4 -4 -3 -4H3Q4 -4 4 -3V-1.2"/></g><path d="M788.0 735.5 C785.0 726.5 774.5 715.0 774.5 705.0 A13.5 13.5 0 1 1 801.5 705.0 C801.5 715.0 791.0 726.5 788.0 735.5Z" fill="#3f6fdb"/><circle cx="788.0" cy="705.0" r="9" fill="#fff"/><g transform="translate(788.0 705.4)" fill="none" stroke="#3f6fdb" stroke-width="1.2" stroke-linejoin="round" stroke-linecap="round"><path d="M-5.6 3.4V-.2Q-5.6 -1.2 -4.6 -1.2H4.6Q5.6 -1.2 5.6 -.2V3.4M-5.6 1.8H5.6"/><path d="M-4 -1.2V-3Q-4 -4 -3 -4H3Q4 -4 4 -3V-1.2"/></g><path d="M712.0 397.2 C707.2 390.6 698.3 386.5 698.3 374.9 A13.7 13.7 0 1 1 725.7 374.9 C725.7 386.5 716.8 390.6 712.0 397.2Z" fill="#52b893" stroke="#10201c" stroke-width="1.5"/><text x="712.0" y="385.5" font-size="18.2" text-anchor="middle" fill="#fff" fill-opacity=".95" stroke="#fff" stroke-opacity=".9" stroke-width=".55">12</text><path d="M633.0 520.8 C628.2 514.2 619.3 510.1 619.3 498.5 A13.7 13.7 0 1 1 646.7 498.5 C646.7 510.1 637.8 514.2 633.0 520.8Z" fill="#52b893" stroke="#10201c" stroke-width="1.5"/><path d="M635.8 523.4 C631.0 516.8 622.1 512.7 622.1 501.1 A13.7 13.7 0 1 1 649.5 501.1 C649.5 512.7 640.6 516.8 635.8 523.4Z" fill="#52b893" stroke="#10201c" stroke-width="1.5"/><text x="635.8" y="511.7" font-size="18.2" text-anchor="middle" fill="#fff" fill-opacity=".95" stroke="#fff" stroke-opacity=".9" stroke-width=".55">14</text><path d="M650.1 538.1 C645.3 531.5 636.4 527.4 636.4 515.8 A13.7 13.7 0 1 1 663.8 515.8 C663.8 527.4 654.9 531.5 650.1 538.1Z" fill="#52b893" stroke="#10201c" stroke-width="1.5"/><g transform="translate(650.1 519.3)"><g fill="none" stroke="#fff" stroke-width="1.15" stroke-linejoin="round" opacity=".95"><path d="M0 -5.2L5.6 -2.7L0 -.2L-5.6 -2.7Z" fill="#fff" fill-opacity=".35"/><path d="M-5.6 -.1L0 2.4L5.6 -.1"/><path d="M-5.6 2.6L0 5.1L5.6 2.6"/></g></g><circle cx="660.8" cy="505.0" r="8.3" fill="#e25d52"/><text x="660.8" y="509.4" font-size="12.4" font-weight="700" text-anchor="middle" fill="#fff">2</text><path d="M670.0 552.3 C665.2 545.7 656.3 541.6 656.3 530.0 A13.7 13.7 0 1 1 683.7 530.0 C683.7 541.6 674.8 545.7 670.0 552.3Z" fill="#52b893" stroke="#10201c" stroke-width="1.5"/><path d="M673.5 554.6 C668.7 548.0 659.8 543.9 659.8 532.3 A13.7 13.7 0 1 1 687.2 532.3 C687.2 543.9 678.3 548.0 673.5 554.6Z" fill="#52b893" stroke="#10201c" stroke-width="1.5"/><text x="673.5" y="542.9" font-size="18.2" text-anchor="middle" fill="#fff" fill-opacity=".95" stroke="#fff" stroke-opacity=".9" stroke-width=".55">2</text><path d="M685.0 568.5 C680.2 561.9 671.3 557.8 671.3 546.2 A13.7 13.7 0 1 1 698.7 546.2 C698.7 557.8 689.8 561.9 685.0 568.5Z" fill="#52b893" stroke="#10201c" stroke-width="1.5"/><text x="685.0" y="556.8" font-size="18.2" text-anchor="middle" fill="#fff" fill-opacity=".95" stroke="#fff" stroke-opacity=".9" stroke-width=".55">3</text><path d="M769.0 586.8 C764.2 580.2 755.3 576.1 755.3 564.5 A13.7 13.7 0 1 1 782.7 564.5 C782.7 576.1 773.8 580.2 769.0 586.8Z" fill="#c3cf7c" stroke="#1a1d10" stroke-width="1.5"/><path d="M768.7 573.6 C763.9 567.0 755.0 562.9 755.0 551.3 A13.7 13.7 0 1 1 782.4 551.3 C782.4 562.9 773.5 567.0 768.7 573.6Z" fill="#c3cf7c" stroke="#1a1d10" stroke-width="1.5"/><text x="768.7" y="561.9" font-size="18.2" text-anchor="middle" fill="#fff" fill-opacity=".95" stroke="#fff" stroke-opacity=".9" stroke-width=".55">9</text><path d="M772.0 518.8 C767.2 512.2 758.3 508.1 758.3 496.5 A13.7 13.7 0 1 1 785.7 496.5 C785.7 508.1 776.8 512.2 772.0 518.8Z" fill="#52b893" stroke="#10201c" stroke-width="1.5"/><path d="M768.7 517.8 C763.9 511.2 755.0 507.1 755.0 495.5 A13.7 13.7 0 1 1 782.4 495.5 C782.4 507.1 773.5 511.2 768.7 517.8Z" fill="#52b893" stroke="#10201c" stroke-width="1.5"/><text x="768.7" y="506.1" font-size="18.2" text-anchor="middle" fill="#fff" fill-opacity=".95" stroke="#fff" stroke-opacity=".9" stroke-width=".55">11</text><path d="M766.0 544.8 C761.2 538.2 752.3 534.1 752.3 522.5 A13.7 13.7 0 1 1 779.7 522.5 C779.7 534.1 770.8 538.2 766.0 544.8Z" fill="#52b893" stroke="#10201c" stroke-width="1.5"/><path d="M770.4 546.4 C765.6 539.8 756.7 535.7 756.7 524.1 A13.7 13.7 0 1 1 784.1 524.1 C784.1 535.7 775.2 539.8 770.4 546.4Z" fill="#52b893" stroke="#10201c" stroke-width="1.5"/><g transform="translate(770.4 527.6)"><g fill="none" stroke="#fff" stroke-width="1.15" stroke-linejoin="round" opacity=".95"><path d="M0 -5.2L5.6 -2.7L0 -.2L-5.6 -2.7Z" fill="#fff" fill-opacity=".35"/><path d="M-5.6 -.1L0 2.4L5.6 -.1"/><path d="M-5.6 2.6L0 5.1L5.6 2.6"/></g></g><circle cx="781.5" cy="513.5" r="8.3" fill="#e25d52"/><text x="781.5" y="517.9" font-size="12.4" font-weight="700" text-anchor="middle" fill="#fff">2</text><path d="M795.0 554.2 C790.2 547.6 781.3 543.5 781.3 531.9 A13.7 13.7 0 1 1 808.7 531.9 C808.7 543.5 799.8 547.6 795.0 554.2Z" fill="#52b893" stroke="#10201c" stroke-width="1.5"/><path d="M798.3 552.1 C793.5 545.5 784.6 541.4 784.6 529.8 A13.7 13.7 0 1 1 812.0 529.8 C812.0 541.4 803.1 545.5 798.3 552.1Z" fill="#52b893" stroke="#10201c" stroke-width="1.5"/><text x="798.3" y="540.4" font-size="18.2" text-anchor="middle" fill="#fff" fill-opacity=".95" stroke="#fff" stroke-opacity=".9" stroke-width=".55">8</text><path d="M744.5 598.8 C739.7 592.2 730.8 588.1 730.8 576.5 A13.7 13.7 0 1 1 758.2 576.5 C758.2 588.1 749.3 592.2 744.5 598.8Z" fill="#d94bc9" stroke="#220a20" stroke-width="1.5"/><path d="M734.0 599.8 C729.2 593.2 720.3 589.1 720.3 577.5 A13.7 13.7 0 1 1 747.7 577.5 C747.7 589.1 738.8 593.2 734.0 599.8Z" fill="#d94bc9" stroke="#220a20" stroke-width="1.5"/><path d="M726.0 603.8 C721.2 597.2 712.3 593.1 712.3 581.5 A13.7 13.7 0 1 1 739.7 581.5 C739.7 593.1 730.8 597.2 726.0 603.8Z" fill="#d94bc9" stroke="#220a20" stroke-width="1.5"/><path d="M704.7 609.6 C699.9 603.0 691.0 598.9 691.0 587.3 A13.7 13.7 0 1 1 718.4 587.3 C718.4 598.9 709.5 603.0 704.7 609.6Z" fill="#d94bc9" stroke="#220a20" stroke-width="1.5"/><text x="704.7" y="597.9" font-size="18.2" text-anchor="middle" fill="#fff" fill-opacity=".95" stroke="#fff" stroke-opacity=".9" stroke-width=".55">1</text><path d="M735.0 608.8 C730.2 602.2 721.3 598.1 721.3 586.5 A13.7 13.7 0 1 1 748.7 586.5 C748.7 598.1 739.8 602.2 735.0 608.8Z" fill="#d94bc9" stroke="#220a20" stroke-width="1.5"/><text x="735.0" y="597.1" font-size="18.2" text-anchor="middle" fill="#fff" fill-opacity=".95" stroke="#fff" stroke-opacity=".9" stroke-width=".55">7</text><path d="M768.7 602.3 C763.9 595.7 755.0 591.6 755.0 580.0 A13.7 13.7 0 1 1 782.4 580.0 C782.4 591.6 773.5 595.7 768.7 602.3Z" fill="#c3cf7c" stroke="#1a1d10" stroke-width="1.5"/><path d="M775.0 604.8 C770.2 598.2 761.3 594.1 761.3 582.5 A13.7 13.7 0 1 1 788.7 582.5 C788.7 594.1 779.8 598.2 775.0 604.8Z" fill="#c3cf7c" stroke="#1a1d10" stroke-width="1.5"/><path d="M780.7 606.2 C775.9 599.6 767.0 595.5 767.0 583.9 A13.7 13.7 0 1 1 794.4 583.9 C794.4 595.5 785.5 599.6 780.7 606.2Z" fill="#c3cf7c" stroke="#1a1d10" stroke-width="1.5"/><text x="780.7" y="594.5" font-size="18.2" text-anchor="middle" fill="#fff" fill-opacity=".95" stroke="#fff" stroke-opacity=".9" stroke-width=".55">7</text><path d="M764.0 607.3 C759.2 600.7 750.3 596.6 750.3 585.0 A13.7 13.7 0 1 1 777.7 585.0 C777.7 596.6 768.8 600.7 764.0 607.3Z" fill="#c3cf7c" stroke="#1a1d10" stroke-width="1.5"/><path d="M756.9 606.8 C752.1 600.2 743.2 596.1 743.2 584.5 A13.7 13.7 0 1 1 770.6 584.5 C770.6 596.1 761.7 600.2 756.9 606.8Z" fill="#c3cf7c" stroke="#1a1d10" stroke-width="1.5"/><text x="756.9" y="595.1" font-size="18.2" text-anchor="middle" fill="#fff" fill-opacity=".95" stroke="#fff" stroke-opacity=".9" stroke-width=".55">13</text><path d="M741 607L750 601.5L762.6 606V624L752 633L741 626Z" fill="#3f6fdb"/><path d="M748.6 623C748.6 623 743.8 617.4 743.8 614.2A4.8 4.8 0 0 1 753.4 614.2C753.4 617.4 748.6 623 748.6 623Z" fill="#fff"/><circle cx="748.6" cy="614" r="1.8" fill="#3f6fdb"/><path d="M711.3 644.4 C706.5 637.8 697.6 633.7 697.6 622.1 A13.7 13.7 0 1 1 725.0 622.1 C725.0 633.7 716.1 637.8 711.3 644.4Z" fill="#d94bc9" stroke="#220a20" stroke-width="1.5"/><g transform="translate(711.3 625.6)"><g fill="none" stroke="#fff" stroke-width="1.15" stroke-linejoin="round" opacity=".95"><path d="M0 -5.2L5.6 -2.7L0 -.2L-5.6 -2.7Z" fill="#fff" fill-opacity=".35"/><path d="M-5.6 -.1L0 2.4L5.6 -.1"/><path d="M-5.6 2.6L0 5.1L5.6 2.6"/></g></g><circle cx="720.7" cy="609.0" r="8.3" fill="#e25d52"/><text x="720.7" y="613.4" font-size="12.4" font-weight="700" text-anchor="middle" fill="#fff">2</text><path d="M726.5 644.2 C721.7 637.6 712.8 633.5 712.8 621.9 A13.7 13.7 0 1 1 740.2 621.9 C740.2 633.5 731.3 637.6 726.5 644.2Z" fill="#d94bc9" stroke="#220a20" stroke-width="1.5"/><g transform="translate(726.5 625.4)"><g fill="none" stroke="#fff" stroke-width="1.15" stroke-linejoin="round" opacity=".95"><path d="M0 -5.2L5.6 -2.7L0 -.2L-5.6 -2.7Z" fill="#fff" fill-opacity=".35"/><path d="M-5.6 -.1L0 2.4L5.6 -.1"/><path d="M-5.6 2.6L0 5.1L5.6 2.6"/></g></g><circle cx="737.2" cy="611.2" r="8.3" fill="#e25d52"/><text x="737.2" y="615.6" font-size="12.4" font-weight="700" text-anchor="middle" fill="#fff">2</text><path d="M746.0 657.8 C741.2 651.2 732.3 647.1 732.3 635.5 A13.7 13.7 0 1 1 759.7 635.5 C759.7 647.1 750.8 651.2 746.0 657.8Z" fill="#d94bc9" stroke="#220a20" stroke-width="1.5"/><path d="M742.0 661.4 C737.2 654.8 728.3 650.7 728.3 639.1 A13.7 13.7 0 1 1 755.7 639.1 C755.7 650.7 746.8 654.8 742.0 661.4Z" fill="#d94bc9" stroke="#220a20" stroke-width="1.5"/><text x="742.0" y="649.7" font-size="18.2" text-anchor="middle" fill="#fff" fill-opacity=".95" stroke="#fff" stroke-opacity=".9" stroke-width=".55">16</text><path d="M719.5 664.0 C714.7 657.4 705.8 653.3 705.8 641.7 A13.7 13.7 0 1 1 733.2 641.7 C733.2 653.3 724.3 657.4 719.5 664.0Z" fill="#d94bc9" stroke="#220a20" stroke-width="1.5"/><g transform="translate(719.5 645.2)"><g fill="none" stroke="#fff" stroke-width="1.15" stroke-linejoin="round" opacity=".95"><path d="M0 -5.2L5.6 -2.7L0 -.2L-5.6 -2.7Z" fill="#fff" fill-opacity=".35"/><path d="M-5.6 -.1L0 2.4L5.6 -.1"/><path d="M-5.6 2.6L0 5.1L5.6 2.6"/></g></g><circle cx="729.0" cy="630.4" r="8.3" fill="#e25d52"/><text x="729.0" y="634.8" font-size="12.4" font-weight="700" text-anchor="middle" fill="#fff">2</text><path d="M770.4 628.8 C765.6 622.2 756.7 618.1 756.7 606.5 A13.7 13.7 0 1 1 784.1 606.5 C784.1 618.1 775.2 622.2 770.4 628.8Z" fill="#c3cf7c" stroke="#1a1d10" stroke-width="1.5"/><g transform="translate(770.4 610.0)"><g fill="none" stroke="#fff" stroke-width="1.15" stroke-linejoin="round" opacity=".95"><path d="M0 -5.2L5.6 -2.7L0 -.2L-5.6 -2.7Z" fill="#fff" fill-opacity=".35"/><path d="M-5.6 -.1L0 2.4L5.6 -.1"/><path d="M-5.6 2.6L0 5.1L5.6 2.6"/></g></g><circle cx="780.4" cy="595.7" r="8.3" fill="#e25d52"/><text x="780.4" y="600.1" font-size="12.4" font-weight="700" text-anchor="middle" fill="#fff">3</text><path d="M796.0 638.8 C791.2 632.2 782.3 628.1 782.3 616.5 A13.7 13.7 0 1 1 809.7 616.5 C809.7 628.1 800.8 632.2 796.0 638.8Z" fill="#c3cf7c" stroke="#1a1d10" stroke-width="1.5"/><path d="M800.4 640.4 C795.6 633.8 786.7 629.7 786.7 618.1 A13.7 13.7 0 1 1 814.1 618.1 C814.1 629.7 805.2 633.8 800.4 640.4Z" fill="#c3cf7c" stroke="#1a1d10" stroke-width="1.5"/><path d="M830.6 645.1 C825.8 638.5 816.9 634.4 816.9 622.8 A13.7 13.7 0 1 1 844.3 622.8 C844.3 634.4 835.4 638.5 830.6 645.1Z" fill="#c3cf7c" stroke="#1a1d10" stroke-width="1.5"/><text x="830.6" y="633.4" font-size="18.2" text-anchor="middle" fill="#fff" fill-opacity=".95" stroke="#fff" stroke-opacity=".9" stroke-width=".55">7</text><path d="M810.6 641.2 C805.8 634.6 796.9 630.5 796.9 618.9 A13.7 13.7 0 1 1 824.3 618.9 C824.3 630.5 815.4 634.6 810.6 641.2Z" fill="#c3cf7c" stroke="#1a1d10" stroke-width="1.5"/><g transform="translate(810.6 622.4)"><g fill="none" stroke="#fff" stroke-width="1.15" stroke-linejoin="round" opacity=".95"><path d="M0 -5.2L5.6 -2.7L0 -.2L-5.6 -2.7Z" fill="#fff" fill-opacity=".35"/><path d="M-5.6 -.1L0 2.4L5.6 -.1"/><path d="M-5.6 2.6L0 5.1L5.6 2.6"/></g></g><circle cx="821.0" cy="607.8" r="8.3" fill="#e25d52"/><text x="821.0" y="612.2" font-size="12.4" font-weight="700" text-anchor="middle" fill="#fff">2</text><path d="M895.8 702.4 C891.0 695.8 882.1 691.7 882.1 680.1 A13.7 13.7 0 1 1 909.5 680.1 C909.5 691.7 900.6 695.8 895.8 702.4Z" fill="#c3cf7c" stroke="#1a1d10" stroke-width="1.5"/><text x="895.8" y="690.7" font-size="18.2" text-anchor="middle" fill="#fff" fill-opacity=".95" stroke="#fff" stroke-opacity=".9" stroke-width=".55">18</text><path d="M788.0 685.8 C783.2 679.2 774.3 675.1 774.3 663.5 A13.7 13.7 0 1 1 801.7 663.5 C801.7 675.1 792.8 679.2 788.0 685.8Z" fill="#3f6fdb" stroke="#0b1538" stroke-width="1.5"/><path d="M782.0 684.8 C777.2 678.2 768.3 674.1 768.3 662.5 A13.7 13.7 0 1 1 795.7 662.5 C795.7 674.1 786.8 678.2 782.0 684.8Z" fill="#3f6fdb" stroke="#0b1538" stroke-width="1.5"/><path d="M755.7 679.8 C750.9 673.2 742.0 669.1 742.0 657.5 A13.7 13.7 0 1 1 769.4 657.5 C769.4 669.1 760.5 673.2 755.7 679.8Z" fill="#3f6fdb" stroke="#0b1538" stroke-width="1.5"/><text x="755.7" y="668.1" font-size="18.2" text-anchor="middle" fill="#fff" fill-opacity=".95" stroke="#fff" stroke-opacity=".9" stroke-width=".55">1</text><path d="M775.0 682.8 C770.2 676.2 761.3 672.1 761.3 660.5 A13.7 13.7 0 1 1 788.7 660.5 C788.7 672.1 779.8 676.2 775.0 682.8Z" fill="#3f6fdb" stroke="#0b1538" stroke-width="1.5"/><path d="M768.8 681.8 C764.0 675.2 755.1 671.1 755.1 659.5 A13.7 13.7 0 1 1 782.5 659.5 C782.5 671.1 773.6 675.2 768.8 681.8Z" fill="#3f6fdb" stroke="#0b1538" stroke-width="1.5"/><text x="768.8" y="670.1" font-size="18.2" text-anchor="middle" fill="#fff" fill-opacity=".95" stroke="#fff" stroke-opacity=".9" stroke-width=".55">11</text><path d="M790.2 724.8 C785.4 718.2 776.5 714.1 776.5 702.5 A13.7 13.7 0 1 1 803.9 702.5 C803.9 714.1 795.0 718.2 790.2 724.8Z" fill="#3f6fdb" stroke="#0b1538" stroke-width="1.5"/><g transform="translate(790.2 706.0)"><g fill="none" stroke="#fff" stroke-width="1.15" stroke-linejoin="round" opacity=".95"><path d="M0 -5.2L5.6 -2.7L0 -.2L-5.6 -2.7Z" fill="#fff" fill-opacity=".35"/><path d="M-5.6 -.1L0 2.4L5.6 -.1"/><path d="M-5.6 2.6L0 5.1L5.6 2.6"/></g></g><path d="M781.9 705.2 C777.1 698.6 768.2 694.5 768.2 682.9 A13.7 13.7 0 1 1 795.6 682.9 C795.6 694.5 786.7 698.6 781.9 705.2Z" fill="#3f6fdb" stroke="#0b1538" stroke-width="1.5"/><g transform="translate(781.9 686.4)"><g fill="none" stroke="#fff" stroke-width="1.15" stroke-linejoin="round" opacity=".95"><path d="M0 -5.2L5.6 -2.7L0 -.2L-5.6 -2.7Z" fill="#fff" fill-opacity=".35"/><path d="M-5.6 -.1L0 2.4L5.6 -.1"/><path d="M-5.6 2.6L0 5.1L5.6 2.6"/></g></g><circle cx="792.2" cy="672.3" r="8.3" fill="#e25d52"/><text x="792.2" y="676.7" font-size="12.4" font-weight="700" text-anchor="middle" fill="#fff">4</text><circle cx="800.7" cy="690.3" r="8.3" fill="#e25d52"/><text x="800.7" y="694.7" font-size="12.4" font-weight="700" text-anchor="middle" fill="#fff">2</text><path d="M591.0 694.8 C586.2 688.2 577.3 684.1 577.3 672.5 A13.7 13.7 0 1 1 604.7 672.5 C604.7 684.1 595.8 688.2 591.0 694.8Z" fill="#9b7be8" stroke="#150d2c" stroke-width="1.5"/><path d="M584.0 696.8 C579.2 690.2 570.3 686.1 570.3 674.5 A13.7 13.7 0 1 1 597.7 674.5 C597.7 686.1 588.8 690.2 584.0 696.8Z" fill="#9b7be8" stroke="#150d2c" stroke-width="1.5"/><path d="M575.0 697.8 C570.2 691.2 561.3 687.1 561.3 675.5 A13.7 13.7 0 1 1 588.7 675.5 C588.7 687.1 579.8 691.2 575.0 697.8Z" fill="#9b7be8" stroke="#150d2c" stroke-width="1.5"/><path d="M566.0 698.8 C561.2 692.2 552.3 688.1 552.3 676.5 A13.7 13.7 0 1 1 579.7 676.5 C579.7 688.1 570.8 692.2 566.0 698.8Z" fill="#9b7be8" stroke="#150d2c" stroke-width="1.5"/><path d="M555.7 699.0 C550.9 692.4 542.0 688.3 542.0 676.7 A13.7 13.7 0 1 1 569.4 676.7 C569.4 688.3 560.5 692.4 555.7 699.0Z" fill="#9b7be8" stroke="#150d2c" stroke-width="1.5"/><text x="555.7" y="687.3" font-size="18.2" text-anchor="middle" fill="#fff" fill-opacity=".95" stroke="#fff" stroke-opacity=".9" stroke-width=".55">6</text><path d="M614.4 683.8 C609.6 677.2 600.7 673.1 600.7 661.5 A13.7 13.7 0 1 1 628.1 661.5 C628.1 673.1 619.2 677.2 614.4 683.8Z" fill="#9b7be8" stroke="#150d2c" stroke-width="1.5"/><path d="M604.6 689.5 C599.8 682.9 590.9 678.8 590.9 667.2 A13.7 13.7 0 1 1 618.3 667.2 C618.3 678.8 609.4 682.9 604.6 689.5Z" fill="#9b7be8" stroke="#150d2c" stroke-width="1.5"/><text x="604.6" y="677.8" font-size="18.2" text-anchor="middle" fill="#fff" fill-opacity=".95" stroke="#fff" stroke-opacity=".9" stroke-width=".55">2</text><path d="M622.2 727.3 C617.4 720.7 608.5 716.6 608.5 705.0 A13.7 13.7 0 1 1 635.9 705.0 C635.9 716.6 627.0 720.7 622.2 727.3Z" fill="#9b7be8" stroke="#150d2c" stroke-width="1.5"/><text x="622.2" y="715.6" font-size="18.2" text-anchor="middle" fill="#fff" fill-opacity=".95" stroke="#fff" stroke-opacity=".9" stroke-width=".55">7</text><path d="M648.0 728.8 C643.2 722.2 634.3 718.1 634.3 706.5 A13.7 13.7 0 1 1 661.7 706.5 C661.7 718.1 652.8 722.2 648.0 728.8Z" fill="#9b7be8" stroke="#150d2c" stroke-width="1.5"/><path d="M655.0 727.8 C650.2 721.2 641.3 717.1 641.3 705.5 A13.7 13.7 0 1 1 668.7 705.5 C668.7 717.1 659.8 721.2 655.0 727.8Z" fill="#9b7be8" stroke="#150d2c" stroke-width="1.5"/><path d="M636.1 725.6 C631.3 719.0 622.4 714.9 622.4 703.3 A13.7 13.7 0 1 1 649.8 703.3 C649.8 714.9 640.9 719.0 636.1 725.6Z" fill="#9b7be8" stroke="#150d2c" stroke-width="1.5"/><g transform="translate(636.1 706.8)"><g fill="none" stroke="#fff" stroke-width="1.15" stroke-linejoin="round" opacity=".95"><path d="M0 -5.2L5.6 -2.7L0 -.2L-5.6 -2.7Z" fill="#fff" fill-opacity=".35"/><path d="M-5.6 -.1L0 2.4L5.6 -.1"/><path d="M-5.6 2.6L0 5.1L5.6 2.6"/></g></g><circle cx="646.5" cy="692.8" r="8.3" fill="#e25d52"/><text x="646.5" y="697.2" font-size="12.4" font-weight="700" text-anchor="middle" fill="#fff">2</text><path d="M670.2 732.4 C665.4 725.8 656.5 721.7 656.5 710.1 A13.7 13.7 0 1 1 683.9 710.1 C683.9 721.7 675.0 725.8 670.2 732.4Z" fill="#9b7be8" stroke="#150d2c" stroke-width="1.5"/><text x="670.2" y="720.7" font-size="18.2" text-anchor="middle" fill="#fff" fill-opacity=".95" stroke="#fff" stroke-opacity=".9" stroke-width=".55">14</text><path d="M652.2 750.4 C647.4 743.8 638.5 739.7 638.5 728.1 A13.7 13.7 0 1 1 665.9 728.1 C665.9 739.7 657.0 743.8 652.2 750.4Z" fill="#9b7be8" stroke="#150d2c" stroke-width="1.5"/><text x="652.2" y="738.7" font-size="18.2" text-anchor="middle" fill="#fff" fill-opacity=".95" stroke="#fff" stroke-opacity=".9" stroke-width=".55">13</text><rect x="1015.2" y="669.4" width="47.4" height="95" rx="1.5" fill="#fff" filter="url(#zsh)"/><path d="M1022 716.6H1056" stroke="#e6e6e6" stroke-width="1"/><path d="M1028.6 692H1048M1038.3 682.3V701.7M1028.6 741.2H1048" stroke="#666" stroke-width="2.4" fill="none"/></g></svg>

<!-- PANEL -->
<div class="abs" style="left:1036.8px;top:242px;width:38.4px;height:59px;background:#2f69b1;border-radius:4px 0 0 4px;z-index:3"></div><svg style="z-index:4;left:1050.0px;top:259.0px" width="14.4" height="25.4" viewBox="0 0 14.4 25.4" fill="none" stroke="#fff" stroke-width="2" stroke-linecap="round" stroke-linejoin="round" ><path d="M1.2 1.4L13 12.7L1.2 24Z" stroke-linejoin="miter"/></svg><div class="abs" style="left:1088.2px;top:251.8px;width:137.8px;height:37.6px;background:#f1f1f1;border-radius:4px"></div><span class="t" id="t19" style="left:1099.3px;top:262.6px;font-size:15.5px;font-weight:400;color:#666;letter-spacing:0.00px;transform:scaleX(1.0416);transform-origin:0 50%;">Filteranzeige</span><svg style="left:1203.0px;top:267.6px" width="11.8" height="6.8" viewBox="0 0 11.8 6.8" fill="none" stroke="#666" stroke-width="1.3" stroke-linecap="round" stroke-linejoin="round" ><path d="M.8 .8L5.9 5.9L11 .8"/></svg><div class="abs" style="left:1085px;top:299px;width:756.4px;height:71.8px;background:#2f69b1"></div><div class="abs" style="left:1117.4px;top:324.2px;width:22.0px;height:22.0px;background:#4a9af0;border-radius:2.5px"></div><svg style="left:1120.8px;top:329.2px" width="15.2" height="12.4" viewBox="0 0 15 12" fill="none" stroke="#fff" stroke-width="2.3" stroke-linecap="round" stroke-linejoin="round" ><path d="M1.2 6.6L5.4 10.6L13.8 1.4"/></svg><span class="t" id="t20" style="left:1155.8px;top:327.2px;font-size:15.5px;font-weight:700;color:#fff;letter-spacing:0.00px;transform:scaleX(0.9603);transform-origin:0 50%;">Fahrer außerhalb des Sektors</span><svg style="left:1801.4px;top:327.0px" width="13.8" height="8.6" viewBox="0 0 13.8 8.6" fill="none" stroke="#fff" stroke-width="2.1" stroke-linecap="round" stroke-linejoin="round" ><path d="M1.2 7.4L6.9 1.4L12.6 7.4"/></svg><div class="abs" style="left:1087.2px;top:380.8px;width:752.6px;height:95.8px;border:1px solid #dedede;background:#fff"><div class="abs" style="left:0;top:0;right:0;height:44px;background:#efefef"></div></div><div class="abs" style="left:1098.2px;top:392.2px;width:21.8px;height:21.8px;background:#4a94ea;border-radius:2.5px"></div><svg style="left:1101.6px;top:397.2px" width="15.0" height="12.2" viewBox="0 0 15 12" fill="none" stroke="#fff" stroke-width="2.3" stroke-linecap="round" stroke-linejoin="round" ><path d="M1.2 6.6L5.4 10.6L13.8 1.4"/></svg><div class="circ" style="left:1130.4px;top:390.8px;width:24.4px;height:24.4px;background:#d947c8;border:1.4px solid #1c1c28"></div><span class="t" id="t21" style="left:1163.6px;top:396.0px;font-size:16.0px;font-weight:400;color:#1a1a1a;letter-spacing:0.00px;transform:scaleX(0.9811);transform-origin:0 50%;">Alexandre Sanchez | v4</span><div class="abs" style="left:1627.5px;top:392.0px;width:125.4px;height:22.8px;background:#f8eedb;border-radius:3px"></div><span class="t" id="t22" style="left:1634.9px;top:396.9px;font-size:12.4px;font-weight:700;color:#f0bb52;letter-spacing:0.00px;transform:scaleX(0.9670);transform-origin:0 50%;">NICHT GESTARTET</span><svg style="left:1792.4px;top:401.6px" width="17.4" height="3.0" viewBox="0 0 17.4 3" fill="#222" stroke="none" stroke-width="2" stroke-linecap="round" stroke-linejoin="round" ><circle cx="1.5" cy="1.5" r="1.35"/><circle cx="8.7" cy="1.5" r="1.35"/><circle cx="15.9" cy="1.5" r="1.35"/></svg><svg style="left:1115.7px;top:441.3px" width="17.6" height="19.6" viewBox="0 0 17.6 19.6" fill="none" stroke="#666" stroke-width="1.4" stroke-linecap="round" stroke-linejoin="round" ><path d="M1 19V1.4H8.6V3.4H16.6V11.6H8.6V9.8H1"/><path d="M8.6 3.4V9.8"/></svg><span class="t" id="t23" style="left:1135.9px;top:444.4px;font-size:13.2px;font-weight:400;color:#666;letter-spacing:0.00px;transform:scaleX(1.0515);transform-origin:0 50%;">08:00</span><svg style="left:1226.8px;top:441.5px" width="17.0" height="18.6" viewBox="0 0 17 18.6" fill="none" stroke="#666" stroke-width="1.4" stroke-linecap="round" stroke-linejoin="round" ><path d="M.9 18V.9H16.3V10.9H.9" stroke-width="1.2"/><g stroke="none" fill="#666"><rect x="1.40" y="0.90" width="2.5" height="2.5"/><rect x="6.40" y="0.90" width="2.5" height="2.5"/><rect x="11.40" y="0.90" width="2.5" height="2.5"/><rect x="3.90" y="3.40" width="2.5" height="2.5"/><rect x="8.90" y="3.40" width="2.5" height="2.5"/><rect x="13.90" y="3.40" width="2.5" height="2.5"/><rect x="1.40" y="5.90" width="2.5" height="2.5"/><rect x="6.40" y="5.90" width="2.5" height="2.5"/><rect x="11.40" y="5.90" width="2.5" height="2.5"/><rect x="3.90" y="8.40" width="2.5" height="2.5"/><rect x="8.90" y="8.40" width="2.5" height="2.5"/><rect x="13.90" y="8.40" width="2.5" height="2.5"/></g></svg><span class="t" id="t24" style="left:1246.4px;top:444.4px;font-size:13.2px;font-weight:400;color:#666;letter-spacing:0.00px;transform:scaleX(0.8545);transform-origin:0 50%;">15:57</span><svg style="left:1316.0px;top:443.3px" width="23.0" height="15.0" viewBox="0 0 23 15" fill="none" stroke="#666" stroke-width="1.5" stroke-linecap="round" stroke-linejoin="round" ><path d="M5.6 1H17.4L22 14H1Z"/><path d="M11.5 3V5.6M11.5 7.6V10.2M11.5 12V13.6" stroke-linecap="butt"/></svg><span class="t" id="t25" style="left:1343.9px;top:444.4px;font-size:13.2px;font-weight:400;color:#666;letter-spacing:0.00px;transform:scaleX(0.9759);transform-origin:0 50%;">14,95 km</span><svg style="left:1447.8px;top:441.1px" width="14.2" height="19.4" viewBox="0 0 14.2 19.4" fill="none" stroke="#666" stroke-width="1.4" stroke-linecap="round" stroke-linejoin="round" ><path d="M7.1 18.4C7.1 18.4 1 11 1 7A6.1 6.1 0 0 1 13.2 7C13.2 11 7.1 18.4 7.1 18.4Z"/><circle cx="7.1" cy="6.8" r="1" fill="#666" stroke-width="1"/></svg><span class="t" id="t26" style="left:1471.4px;top:444.4px;font-size:13.2px;font-weight:400;color:#666;letter-spacing:0.00px;transform:scaleX(0.8267);transform-origin:0 50%;">18</span><svg style="left:1540.7px;top:443.3px" width="19.2" height="15.0" viewBox="0 0 19.2 15" fill="none" stroke="#666" stroke-width="1.4" stroke-linecap="round" stroke-linejoin="round" ><path d="M2.6 6L4.6 1.4Q4.8 .9 5.4 .9H13.8Q14.4 .9 14.6 1.4L16.6 6"/><path d="M1 6.6Q1 5.8 1.8 5.8H17.4Q18.2 5.8 18.2 6.6V12.4H1Z"/><path d="M1.6 12.4V14.2H4.4V12.4M14.8 12.4V14.2H17.6V12.4"/><path d="M3 8.6H5.6M13.6 8.6H16.2M6.6 10.6H12.6" stroke-width="1.3"/></svg><span class="t" id="t27" style="left:1566.2px;top:444.4px;font-size:13.2px;font-weight:400;color:#666;letter-spacing:0.00px;transform:scaleX(1.0306);transform-origin:0 50%;">27Min</span><svg style="left:1653.2px;top:442.3px" width="15.2" height="17.0" viewBox="0 0 15.2 17" fill="none" stroke="#666" stroke-width="1.5" stroke-linecap="round" stroke-linejoin="round" ><circle cx="7.6" cy="5.6" r="4.7"/><path d="M1 16.2C1.4 12.6 3.4 10.8 5.2 10.2M14.2 16.2C13.8 12.6 11.8 10.8 10 10.2"/></svg><span class="t" id="t28" style="left:1677.5px;top:444.4px;font-size:13.2px;font-weight:400;color:#666;letter-spacing:0.00px;transform:scaleX(1.0448);transform-origin:0 50%;">7h30</span><svg style="left:1752.5px;top:441.0px" width="19.6" height="19.6" viewBox="0 0 19.6 19.6" fill="none" stroke="#666" stroke-width="1.4" stroke-linecap="round" stroke-linejoin="round" ><circle cx="9.8" cy="9.8" r="8.9"/><path d="M9.8 5.2V14M6.2 10.6L9.8 14.2L13.4 10.6"/></svg><span class="t" id="t29" style="left:1779.1px;top:444.4px;font-size:13.2px;font-weight:400;color:#666;letter-spacing:0.00px;transform:scaleX(0.9500);transform-origin:0 50%;">13,46 €</span><div class="abs" style="left:1087.2px;top:487.2px;width:752.6px;height:95.8px;border:1px solid #dedede;background:#fff"><div class="abs" style="left:0;top:0;right:0;height:44px;background:#efefef"></div></div><div class="abs" style="left:1098.2px;top:498.6px;width:21.8px;height:21.8px;background:#4a94ea;border-radius:2.5px"></div><svg style="left:1101.6px;top:503.6px" width="15.0" height="12.2" viewBox="0 0 15 12" fill="none" stroke="#fff" stroke-width="2.3" stroke-linecap="round" stroke-linejoin="round" ><path d="M1.2 6.6L5.4 10.6L13.8 1.4"/></svg><div class="circ" style="left:1130.4px;top:497.2px;width:24.4px;height:24.4px;background:#9b7ae8;border:1.4px solid #1c1c28"></div><span class="t" id="t30" style="left:1163.6px;top:502.4px;font-size:16.0px;font-weight:400;color:#1a1a1a;letter-spacing:0.00px;transform:scaleX(0.9835);transform-origin:0 50%;">Julia Virmond | v1</span><div class="abs" style="left:1627.5px;top:498.4px;width:125.4px;height:22.8px;background:#f8eedb;border-radius:3px"></div><span class="t" id="t31" style="left:1634.9px;top:503.3px;font-size:12.4px;font-weight:700;color:#f0bb52;letter-spacing:0.00px;transform:scaleX(0.9670);transform-origin:0 50%;">NICHT GESTARTET</span><svg style="left:1792.4px;top:508.0px" width="17.4" height="3.0" viewBox="0 0 17.4 3" fill="#222" stroke="none" stroke-width="2" stroke-linecap="round" stroke-linejoin="round" ><circle cx="1.5" cy="1.5" r="1.35"/><circle cx="8.7" cy="1.5" r="1.35"/><circle cx="15.9" cy="1.5" r="1.35"/></svg><svg style="left:1115.7px;top:547.7px" width="17.6" height="19.6" viewBox="0 0 17.6 19.6" fill="none" stroke="#666" stroke-width="1.4" stroke-linecap="round" stroke-linejoin="round" ><path d="M1 19V1.4H8.6V3.4H16.6V11.6H8.6V9.8H1"/><path d="M8.6 3.4V9.8"/></svg><span class="t" id="t32" style="left:1135.9px;top:550.8px;font-size:13.2px;font-weight:400;color:#666;letter-spacing:0.00px;transform:scaleX(1.0515);transform-origin:0 50%;">08:00</span><svg style="left:1226.3px;top:547.9px" width="17.0" height="18.6" viewBox="0 0 17 18.6" fill="none" stroke="#666" stroke-width="1.4" stroke-linecap="round" stroke-linejoin="round" ><path d="M.9 18V.9H16.3V10.9H.9" stroke-width="1.2"/><g stroke="none" fill="#666"><rect x="1.40" y="0.90" width="2.5" height="2.5"/><rect x="6.40" y="0.90" width="2.5" height="2.5"/><rect x="11.40" y="0.90" width="2.5" height="2.5"/><rect x="3.90" y="3.40" width="2.5" height="2.5"/><rect x="8.90" y="3.40" width="2.5" height="2.5"/><rect x="13.90" y="3.40" width="2.5" height="2.5"/><rect x="1.40" y="5.90" width="2.5" height="2.5"/><rect x="6.40" y="5.90" width="2.5" height="2.5"/><rect x="11.40" y="5.90" width="2.5" height="2.5"/><rect x="3.90" y="8.40" width="2.5" height="2.5"/><rect x="8.90" y="8.40" width="2.5" height="2.5"/><rect x="13.90" y="8.40" width="2.5" height="2.5"/></g></svg><span class="t" id="t33" style="left:1245.2px;top:550.8px;font-size:13.2px;font-weight:400;color:#666;letter-spacing:0.00px;transform:scaleX(0.9212);transform-origin:0 50%;">14:42</span><svg style="left:1316.5px;top:549.7px" width="23.0" height="15.0" viewBox="0 0 23 15" fill="none" stroke="#666" stroke-width="1.5" stroke-linecap="round" stroke-linejoin="round" ><path d="M5.6 1H17.4L22 14H1Z"/><path d="M11.5 3V5.6M11.5 7.6V10.2M11.5 12V13.6" stroke-linecap="butt"/></svg><span class="t" id="t34" style="left:1344.3px;top:550.8px;font-size:13.2px;font-weight:400;color:#666;letter-spacing:0.00px;transform:scaleX(0.9611);transform-origin:0 50%;">19,69 km</span><svg style="left:1447.8px;top:547.5px" width="14.2" height="19.4" viewBox="0 0 14.2 19.4" fill="none" stroke="#666" stroke-width="1.4" stroke-linecap="round" stroke-linejoin="round" ><path d="M7.1 18.4C7.1 18.4 1 11 1 7A6.1 6.1 0 0 1 13.2 7C13.2 11 7.1 18.4 7.1 18.4Z"/><circle cx="7.1" cy="6.8" r="1" fill="#666" stroke-width="1"/></svg><span class="t" id="t35" style="left:1471.4px;top:550.8px;font-size:13.2px;font-weight:400;color:#666;letter-spacing:0.00px;transform:scaleX(0.8333);transform-origin:0 50%;">14</span><svg style="left:1540.4px;top:549.7px" width="19.2" height="15.0" viewBox="0 0 19.2 15" fill="none" stroke="#666" stroke-width="1.4" stroke-linecap="round" stroke-linejoin="round" ><path d="M2.6 6L4.6 1.4Q4.8 .9 5.4 .9H13.8Q14.4 .9 14.6 1.4L16.6 6"/><path d="M1 6.6Q1 5.8 1.8 5.8H17.4Q18.2 5.8 18.2 6.6V12.4H1Z"/><path d="M1.6 12.4V14.2H4.4V12.4M14.8 12.4V14.2H17.6V12.4"/><path d="M3 8.6H5.6M13.6 8.6H16.2M6.6 10.6H12.6" stroke-width="1.3"/></svg><span class="t" id="t36" style="left:1565.9px;top:550.8px;font-size:13.2px;font-weight:400;color:#666;letter-spacing:0.00px;transform:scaleX(1.0389);transform-origin:0 50%;">32Min</span><svg style="left:1653.4px;top:548.7px" width="15.2" height="17.0" viewBox="0 0 15.2 17" fill="none" stroke="#666" stroke-width="1.5" stroke-linecap="round" stroke-linejoin="round" ><circle cx="7.6" cy="5.6" r="4.7"/><path d="M1 16.2C1.4 12.6 3.4 10.8 5.2 10.2M14.2 16.2C13.8 12.6 11.8 10.8 10 10.2"/></svg><span class="t" id="t37" style="left:1677.2px;top:550.8px;font-size:13.2px;font-weight:400;color:#666;letter-spacing:0.00px;transform:scaleX(1.0345);transform-origin:0 50%;">5h50</span><svg style="left:1749.2px;top:547.4px" width="19.6" height="19.6" viewBox="0 0 19.6 19.6" fill="none" stroke="#666" stroke-width="1.4" stroke-linecap="round" stroke-linejoin="round" ><circle cx="9.8" cy="9.8" r="8.9"/><path d="M9.8 5.2V14M6.2 10.6L9.8 14.2L13.4 10.6"/></svg><span class="t" id="t38" style="left:1775.9px;top:550.8px;font-size:13.2px;font-weight:400;color:#666;letter-spacing:0.00px;transform:scaleX(0.9373);transform-origin:0 50%;">431,56 €</span><div class="abs" style="left:1087.2px;top:593.6px;width:752.6px;height:95.8px;border:1px solid #dedede;background:#fff"><div class="abs" style="left:0;top:0;right:0;height:44px;background:#efefef"></div></div><div class="abs" style="left:1098.2px;top:605.0px;width:21.8px;height:21.8px;background:#4a94ea;border-radius:2.5px"></div><svg style="left:1101.6px;top:610.0px" width="15.0" height="12.2" viewBox="0 0 15 12" fill="none" stroke="#fff" stroke-width="2.3" stroke-linecap="round" stroke-linejoin="round" ><path d="M1.2 6.6L5.4 10.6L13.8 1.4"/></svg><div class="circ" style="left:1130.4px;top:603.6px;width:24.4px;height:24.4px;background:#c4d17c;border:1.4px solid #1c1c28"></div><span class="t" id="t39" style="left:1163.6px;top:608.8px;font-size:16.0px;font-weight:400;color:#1a1a1a;letter-spacing:0.00px;transform:scaleX(0.9951);transform-origin:0 50%;">Paul Wagner | v3</span><div class="abs" style="left:1627.5px;top:604.8px;width:125.4px;height:22.8px;background:#f8eedb;border-radius:3px"></div><span class="t" id="t40" style="left:1634.9px;top:609.7px;font-size:12.4px;font-weight:700;color:#f0bb52;letter-spacing:0.00px;transform:scaleX(0.9670);transform-origin:0 50%;">NICHT GESTARTET</span><svg style="left:1792.4px;top:614.4px" width="17.4" height="3.0" viewBox="0 0 17.4 3" fill="#222" stroke="none" stroke-width="2" stroke-linecap="round" stroke-linejoin="round" ><circle cx="1.5" cy="1.5" r="1.35"/><circle cx="8.7" cy="1.5" r="1.35"/><circle cx="15.9" cy="1.5" r="1.35"/></svg><svg style="left:1115.7px;top:654.1px" width="17.6" height="19.6" viewBox="0 0 17.6 19.6" fill="none" stroke="#666" stroke-width="1.4" stroke-linecap="round" stroke-linejoin="round" ><path d="M1 19V1.4H8.6V3.4H16.6V11.6H8.6V9.8H1"/><path d="M8.6 3.4V9.8"/></svg><span class="t" id="t41" style="left:1135.9px;top:657.2px;font-size:13.2px;font-weight:400;color:#666;letter-spacing:0.00px;transform:scaleX(1.0515);transform-origin:0 50%;">08:00</span><svg style="left:1225.6px;top:654.3px" width="17.0" height="18.6" viewBox="0 0 17 18.6" fill="none" stroke="#666" stroke-width="1.4" stroke-linecap="round" stroke-linejoin="round" ><path d="M.9 18V.9H16.3V10.9H.9" stroke-width="1.2"/><g stroke="none" fill="#666"><rect x="1.40" y="0.90" width="2.5" height="2.5"/><rect x="6.40" y="0.90" width="2.5" height="2.5"/><rect x="11.40" y="0.90" width="2.5" height="2.5"/><rect x="3.90" y="3.40" width="2.5" height="2.5"/><rect x="8.90" y="3.40" width="2.5" height="2.5"/><rect x="13.90" y="3.40" width="2.5" height="2.5"/><rect x="1.40" y="5.90" width="2.5" height="2.5"/><rect x="6.40" y="5.90" width="2.5" height="2.5"/><rect x="11.40" y="5.90" width="2.5" height="2.5"/><rect x="3.90" y="8.40" width="2.5" height="2.5"/><rect x="8.90" y="8.40" width="2.5" height="2.5"/><rect x="13.90" y="8.40" width="2.5" height="2.5"/></g></svg><span class="t" id="t42" style="left:1245.2px;top:657.2px;font-size:13.2px;font-weight:400;color:#666;letter-spacing:0.00px;transform:scaleX(0.9212);transform-origin:0 50%;">16:06</span><svg style="left:1318.9px;top:656.1px" width="23.0" height="15.0" viewBox="0 0 23 15" fill="none" stroke="#666" stroke-width="1.5" stroke-linecap="round" stroke-linejoin="round" ><path d="M5.6 1H17.4L22 14H1Z"/><path d="M11.5 3V5.6M11.5 7.6V10.2M11.5 12V13.6" stroke-linecap="butt"/></svg><span class="t" id="t43" style="left:1346.7px;top:657.2px;font-size:13.2px;font-weight:400;color:#666;letter-spacing:0.00px;transform:scaleX(0.9936);transform-origin:0 50%;">23,7 km</span><svg style="left:1447.8px;top:653.9px" width="14.2" height="19.4" viewBox="0 0 14.2 19.4" fill="none" stroke="#666" stroke-width="1.4" stroke-linecap="round" stroke-linejoin="round" ><path d="M7.1 18.4C7.1 18.4 1 11 1 7A6.1 6.1 0 0 1 13.2 7C13.2 11 7.1 18.4 7.1 18.4Z"/><circle cx="7.1" cy="6.8" r="1" fill="#666" stroke-width="1"/></svg><span class="t" id="t44" style="left:1471.4px;top:657.2px;font-size:13.2px;font-weight:400;color:#666;letter-spacing:0.00px;transform:scaleX(0.8267);transform-origin:0 50%;">18</span><svg style="left:1540.4px;top:656.1px" width="19.2" height="15.0" viewBox="0 0 19.2 15" fill="none" stroke="#666" stroke-width="1.4" stroke-linecap="round" stroke-linejoin="round" ><path d="M2.6 6L4.6 1.4Q4.8 .9 5.4 .9H13.8Q14.4 .9 14.6 1.4L16.6 6"/><path d="M1 6.6Q1 5.8 1.8 5.8H17.4Q18.2 5.8 18.2 6.6V12.4H1Z"/><path d="M1.6 12.4V14.2H4.4V12.4M14.8 12.4V14.2H17.6V12.4"/><path d="M3 8.6H5.6M13.6 8.6H16.2M6.6 10.6H12.6" stroke-width="1.3"/></svg><span class="t" id="t45" style="left:1565.9px;top:657.2px;font-size:13.2px;font-weight:400;color:#666;letter-spacing:0.00px;transform:scaleX(1.0389);transform-origin:0 50%;">36Min</span><svg style="left:1653.4px;top:655.1px" width="15.2" height="17.0" viewBox="0 0 15.2 17" fill="none" stroke="#666" stroke-width="1.5" stroke-linecap="round" stroke-linejoin="round" ><circle cx="7.6" cy="5.6" r="4.7"/><path d="M1 16.2C1.4 12.6 3.4 10.8 5.2 10.2M14.2 16.2C13.8 12.6 11.8 10.8 10 10.2"/></svg><span class="t" id="t46" style="left:1677.2px;top:657.2px;font-size:13.2px;font-weight:400;color:#666;letter-spacing:0.00px;transform:scaleX(1.0345);transform-origin:0 50%;">7h30</span><svg style="left:1753.1px;top:653.8px" width="19.6" height="19.6" viewBox="0 0 19.6 19.6" fill="none" stroke="#666" stroke-width="1.4" stroke-linecap="round" stroke-linejoin="round" ><circle cx="9.8" cy="9.8" r="8.9"/><path d="M9.8 5.2V14M6.2 10.6L9.8 14.2L13.4 10.6"/></svg><span class="t" id="t47" style="left:1779.1px;top:657.2px;font-size:13.2px;font-weight:400;color:#666;letter-spacing:0.00px;transform:scaleX(0.9227);transform-origin:0 50%;">21,33 €</span><div class="abs" style="left:1087.2px;top:700.0px;width:752.6px;height:95.8px;border:1px solid #dedede;background:#fff"><div class="abs" style="left:0;top:0;right:0;height:44px;background:#efefef"></div></div><div class="abs" style="left:1098.2px;top:711.4px;width:21.8px;height:21.8px;background:#4a94ea;border-radius:2.5px"></div><svg style="left:1101.6px;top:716.4px" width="15.0" height="12.2" viewBox="0 0 15 12" fill="none" stroke="#fff" stroke-width="2.3" stroke-linecap="round" stroke-linejoin="round" ><path d="M1.2 6.6L5.4 10.6L13.8 1.4"/></svg><div class="circ" style="left:1130.4px;top:710.0px;width:24.4px;height:24.4px;background:#54b993;border:1.4px solid #1c1c28"></div><span class="t" id="t48" style="left:1163.6px;top:715.2px;font-size:16.0px;font-weight:400;color:#1a1a1a;letter-spacing:0.00px;transform:scaleX(1.0023);transform-origin:0 50%;">Pauline Henry | v5</span><div class="abs" style="left:1627.5px;top:711.2px;width:125.4px;height:22.8px;background:#f8eedb;border-radius:3px"></div><span class="t" id="t49" style="left:1634.9px;top:716.1px;font-size:12.4px;font-weight:700;color:#f0bb52;letter-spacing:0.00px;transform:scaleX(0.9670);transform-origin:0 50%;">NICHT GESTARTET</span><svg style="left:1792.4px;top:720.8px" width="17.4" height="3.0" viewBox="0 0 17.4 3" fill="#222" stroke="none" stroke-width="2" stroke-linecap="round" stroke-linejoin="round" ><circle cx="1.5" cy="1.5" r="1.35"/><circle cx="8.7" cy="1.5" r="1.35"/><circle cx="15.9" cy="1.5" r="1.35"/></svg><svg style="left:1115.7px;top:760.5px" width="17.6" height="19.6" viewBox="0 0 17.6 19.6" fill="none" stroke="#666" stroke-width="1.4" stroke-linecap="round" stroke-linejoin="round" ><path d="M1 19V1.4H8.6V3.4H16.6V11.6H8.6V9.8H1"/><path d="M8.6 3.4V9.8"/></svg><span class="t" id="t50" style="left:1135.9px;top:763.6px;font-size:13.2px;font-weight:400;color:#666;letter-spacing:0.00px;transform:scaleX(1.0515);transform-origin:0 50%;">08:00</span><svg style="left:1227.5px;top:760.7px" width="17.0" height="18.6" viewBox="0 0 17 18.6" fill="none" stroke="#666" stroke-width="1.4" stroke-linecap="round" stroke-linejoin="round" ><path d="M.9 18V.9H16.3V10.9H.9" stroke-width="1.2"/><g stroke="none" fill="#666"><rect x="1.40" y="0.90" width="2.5" height="2.5"/><rect x="6.40" y="0.90" width="2.5" height="2.5"/><rect x="11.40" y="0.90" width="2.5" height="2.5"/><rect x="3.90" y="3.40" width="2.5" height="2.5"/><rect x="8.90" y="3.40" width="2.5" height="2.5"/><rect x="13.90" y="3.40" width="2.5" height="2.5"/><rect x="1.40" y="5.90" width="2.5" height="2.5"/><rect x="6.40" y="5.90" width="2.5" height="2.5"/><rect x="11.40" y="5.90" width="2.5" height="2.5"/><rect x="3.90" y="8.40" width="2.5" height="2.5"/><rect x="8.90" y="8.40" width="2.5" height="2.5"/><rect x="13.90" y="8.40" width="2.5" height="2.5"/></g></svg><span class="t" id="t51" style="left:1247.2px;top:763.6px;font-size:13.2px;font-weight:400;color:#666;letter-spacing:0.00px;transform:scaleX(0.7758);transform-origin:0 50%;">15:31</span><svg style="left:1316.5px;top:762.5px" width="23.0" height="15.0" viewBox="0 0 23 15" fill="none" stroke="#666" stroke-width="1.5" stroke-linecap="round" stroke-linejoin="round" ><path d="M5.6 1H17.4L22 14H1Z"/><path d="M11.5 3V5.6M11.5 7.6V10.2M11.5 12V13.6" stroke-linecap="butt"/></svg><span class="t" id="t52" style="left:1344.3px;top:763.6px;font-size:13.2px;font-weight:400;color:#666;letter-spacing:0.00px;transform:scaleX(0.9611);transform-origin:0 50%;">31,02 km</span><svg style="left:1447.8px;top:760.3px" width="14.2" height="19.4" viewBox="0 0 14.2 19.4" fill="none" stroke="#666" stroke-width="1.4" stroke-linecap="round" stroke-linejoin="round" ><path d="M7.1 18.4C7.1 18.4 1 11 1 7A6.1 6.1 0 0 1 13.2 7C13.2 11 7.1 18.4 7.1 18.4Z"/><circle cx="7.1" cy="6.8" r="1" fill="#666" stroke-width="1"/></svg><span class="t" id="t53" style="left:1471.4px;top:763.6px;font-size:13.2px;font-weight:400;color:#666;letter-spacing:0.00px;transform:scaleX(0.8333);transform-origin:0 50%;">16</span><svg style="left:1541.8px;top:762.5px" width="19.2" height="15.0" viewBox="0 0 19.2 15" fill="none" stroke="#666" stroke-width="1.4" stroke-linecap="round" stroke-linejoin="round" ><path d="M2.6 6L4.6 1.4Q4.8 .9 5.4 .9H13.8Q14.4 .9 14.6 1.4L16.6 6"/><path d="M1 6.6Q1 5.8 1.8 5.8H17.4Q18.2 5.8 18.2 6.6V12.4H1Z"/><path d="M1.6 12.4V14.2H4.4V12.4M14.8 12.4V14.2H17.6V12.4"/><path d="M3 8.6H5.6M13.6 8.6H16.2M6.6 10.6H12.6" stroke-width="1.3"/></svg><span class="t" id="t54" style="left:1567.6px;top:763.6px;font-size:13.2px;font-weight:400;color:#666;letter-spacing:0.00px;transform:scaleX(0.9444);transform-origin:0 50%;">51Min</span><svg style="left:1652.6px;top:761.5px" width="15.2" height="17.0" viewBox="0 0 15.2 17" fill="none" stroke="#666" stroke-width="1.5" stroke-linecap="round" stroke-linejoin="round" ><circle cx="7.6" cy="5.6" r="4.7"/><path d="M1 16.2C1.4 12.6 3.4 10.8 5.2 10.2M14.2 16.2C13.8 12.6 11.8 10.8 10 10.2"/></svg><span class="t" id="t55" style="left:1676.4px;top:763.6px;font-size:13.2px;font-weight:400;color:#666;letter-spacing:0.00px;transform:scaleX(1.0897);transform-origin:0 50%;">6h40</span><svg style="left:1752.1px;top:760.2px" width="19.6" height="19.6" viewBox="0 0 19.6 19.6" fill="none" stroke="#666" stroke-width="1.4" stroke-linecap="round" stroke-linejoin="round" ><circle cx="9.8" cy="9.8" r="8.9"/><path d="M9.8 5.2V14M6.2 10.6L9.8 14.2L13.4 10.6"/></svg><span class="t" id="t56" style="left:1777.9px;top:763.6px;font-size:13.2px;font-weight:400;color:#666;letter-spacing:0.00px;transform:scaleX(0.9773);transform-origin:0 50%;">27,92 €</span><div class="abs" style="left:1087.2px;top:806.4px;width:752.6px;height:95.8px;border:1px solid #dedede;background:#fff"><div class="abs" style="left:0;top:0;right:0;height:44px;background:#efefef"></div></div><div class="abs" style="left:1098.2px;top:817.8px;width:21.8px;height:21.8px;background:#4a94ea;border-radius:2.5px"></div><svg style="left:1101.6px;top:822.8px" width="15.0" height="12.2" viewBox="0 0 15 12" fill="none" stroke="#fff" stroke-width="2.3" stroke-linecap="round" stroke-linejoin="round" ><path d="M1.2 6.6L5.4 10.6L13.8 1.4"/></svg><div class="circ" style="left:1130.4px;top:816.4px;width:24.4px;height:24.4px;background:#4a6ee0;border:1.4px solid #1c1c28"></div><span class="t" id="t57" style="left:1163.6px;top:821.6px;font-size:16.0px;font-weight:400;color:#1a1a1a;letter-spacing:0.00px;transform:scaleX(1.0101);transform-origin:0 50%;">Pierre Dupont | v2</span><div class="abs" style="left:1627.5px;top:817.6px;width:125.4px;height:22.8px;background:#f8eedb;border-radius:3px"></div><span class="t" id="t58" style="left:1634.9px;top:822.5px;font-size:12.4px;font-weight:700;color:#f0bb52;letter-spacing:0.00px;transform:scaleX(0.9670);transform-origin:0 50%;">NICHT GESTARTET</span><svg style="left:1792.4px;top:827.2px" width="17.4" height="3.0" viewBox="0 0 17.4 3" fill="#222" stroke="none" stroke-width="2" stroke-linecap="round" stroke-linejoin="round" ><circle cx="1.5" cy="1.5" r="1.35"/><circle cx="8.7" cy="1.5" r="1.35"/><circle cx="15.9" cy="1.5" r="1.35"/></svg><svg style="left:1115.7px;top:866.9px" width="17.6" height="19.6" viewBox="0 0 17.6 19.6" fill="none" stroke="#666" stroke-width="1.4" stroke-linecap="round" stroke-linejoin="round" ><path d="M1 19V1.4H8.6V3.4H16.6V11.6H8.6V9.8H1"/><path d="M8.6 3.4V9.8"/></svg><span class="t" id="t59" style="left:1135.9px;top:870.0px;font-size:13.2px;font-weight:400;color:#666;letter-spacing:0.00px;transform:scaleX(1.0515);transform-origin:0 50%;">08:00</span><svg style="left:1228.3px;top:867.1px" width="17.0" height="18.6" viewBox="0 0 17 18.6" fill="none" stroke="#666" stroke-width="1.4" stroke-linecap="round" stroke-linejoin="round" ><path d="M.9 18V.9H16.3V10.9H.9" stroke-width="1.2"/><g stroke="none" fill="#666"><rect x="1.40" y="0.90" width="2.5" height="2.5"/><rect x="6.40" y="0.90" width="2.5" height="2.5"/><rect x="11.40" y="0.90" width="2.5" height="2.5"/><rect x="3.90" y="3.40" width="2.5" height="2.5"/><rect x="8.90" y="3.40" width="2.5" height="2.5"/><rect x="13.90" y="3.40" width="2.5" height="2.5"/><rect x="1.40" y="5.90" width="2.5" height="2.5"/><rect x="6.40" y="5.90" width="2.5" height="2.5"/><rect x="11.40" y="5.90" width="2.5" height="2.5"/><rect x="3.90" y="8.40" width="2.5" height="2.5"/><rect x="8.90" y="8.40" width="2.5" height="2.5"/><rect x="13.90" y="8.40" width="2.5" height="2.5"/></g></svg><span class="t" id="t60" style="left:1248.4px;top:870.0px;font-size:13.2px;font-weight:400;color:#666;letter-spacing:0.00px;transform:scaleX(0.7375);transform-origin:0 50%;">13:11</span><svg style="left:1318.9px;top:868.9px" width="23.0" height="15.0" viewBox="0 0 23 15" fill="none" stroke="#666" stroke-width="1.5" stroke-linecap="round" stroke-linejoin="round" ><path d="M5.6 1H17.4L22 14H1Z"/><path d="M11.5 3V5.6M11.5 7.6V10.2M11.5 12V13.6" stroke-linecap="butt"/></svg><span class="t" id="t61" style="left:1346.7px;top:870.0px;font-size:13.2px;font-weight:400;color:#666;letter-spacing:0.00px;transform:scaleX(0.9936);transform-origin:0 50%;">6,35 km</span><svg style="left:1447.8px;top:866.7px" width="14.2" height="19.4" viewBox="0 0 14.2 19.4" fill="none" stroke="#666" stroke-width="1.4" stroke-linecap="round" stroke-linejoin="round" ><path d="M7.1 18.4C7.1 18.4 1 11 1 7A6.1 6.1 0 0 1 13.2 7C13.2 11 7.1 18.4 7.1 18.4Z"/><circle cx="7.1" cy="6.8" r="1" fill="#666" stroke-width="1"/></svg><span class="t" id="t62" style="left:1471.4px;top:870.0px;font-size:13.2px;font-weight:400;color:#666;letter-spacing:0.00px;transform:scaleX(0.8333);transform-origin:0 50%;">12</span><svg style="left:1543.0px;top:868.9px" width="19.2" height="15.0" viewBox="0 0 19.2 15" fill="none" stroke="#666" stroke-width="1.4" stroke-linecap="round" stroke-linejoin="round" ><path d="M2.6 6L4.6 1.4Q4.8 .9 5.4 .9H13.8Q14.4 .9 14.6 1.4L16.6 6"/><path d="M1 6.6Q1 5.8 1.8 5.8H17.4Q18.2 5.8 18.2 6.6V12.4H1Z"/><path d="M1.6 12.4V14.2H4.4V12.4M14.8 12.4V14.2H17.6V12.4"/><path d="M3 8.6H5.6M13.6 8.6H16.2M6.6 10.6H12.6" stroke-width="1.3"/></svg><span class="t" id="t63" style="left:1568.8px;top:870.0px;font-size:13.2px;font-weight:400;color:#666;letter-spacing:0.00px;transform:scaleX(0.9143);transform-origin:0 50%;">11Min</span><svg style="left:1659.9px;top:867.9px" width="15.2" height="17.0" viewBox="0 0 15.2 17" fill="none" stroke="#666" stroke-width="1.5" stroke-linecap="round" stroke-linejoin="round" ><circle cx="7.6" cy="5.6" r="4.7"/><path d="M1 16.2C1.4 12.6 3.4 10.8 5.2 10.2M14.2 16.2C13.8 12.6 11.8 10.8 10 10.2"/></svg><span class="t" id="t64" style="left:1684.5px;top:870.0px;font-size:13.2px;font-weight:400;color:#666;letter-spacing:0.00px;transform:scaleX(1.0267);transform-origin:0 50%;">5h</span><svg style="left:1753.1px;top:866.6px" width="19.6" height="19.6" viewBox="0 0 19.6 19.6" fill="none" stroke="#666" stroke-width="1.4" stroke-linecap="round" stroke-linejoin="round" ><circle cx="9.8" cy="9.8" r="8.9"/><path d="M9.8 5.2V14M6.2 10.6L9.8 14.2L13.4 10.6"/></svg><span class="t" id="t65" style="left:1779.1px;top:870.0px;font-size:13.2px;font-weight:400;color:#666;letter-spacing:0.00px;transform:scaleX(0.9227);transform-origin:0 50%;">15,23 €</span>

</div></div>
</body>
</html>
